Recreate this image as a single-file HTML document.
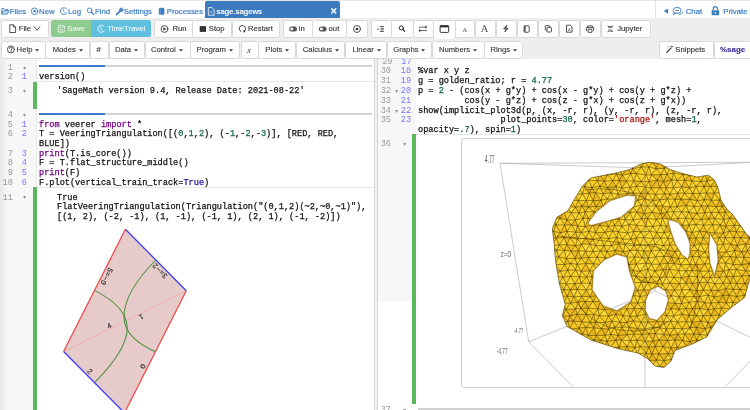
<!DOCTYPE html><html><head><meta charset="utf-8"><style>
*{margin:0;padding:0;box-sizing:border-box}
html,body{width:750px;height:410px;overflow:hidden;background:#fff;font-family:"Liberation Sans",sans-serif}
body{position:relative}
#wrap{position:absolute;left:0;top:0;width:750px;height:410px;will-change:transform}
.a{position:absolute;white-space:nowrap}
.tl{position:absolute;top:2.5px;height:17px;line-height:17px;font-size:7.8px;color:#3b7dc1;white-space:nowrap;-webkit-text-stroke:0.2px currentColor}
.b{position:absolute;background:#fff;border:1px solid #d9d9d9;border-radius:2.5px;font-size:7.5px;color:#333;white-space:nowrap;line-height:16px;text-align:center}
.r1{top:20px;height:17.8px}
.r2{top:41px;height:18px}
.car{display:inline-block;width:0;height:0;border-left:2px solid transparent;border-right:2px solid transparent;border-top:2.2px solid #333;margin-left:2.5px;vertical-align:1px}
.code{position:absolute;font-family:"Liberation Mono",monospace;font-size:8.6px;line-height:9.75px;white-space:pre;color:#111;-webkit-text-stroke:0.25px currentColor}
.ln{position:absolute;font-family:"Liberation Mono",monospace;font-size:8.6px;line-height:9.75px;white-space:pre;color:#9a9a9a}
.ln2{position:absolute;font-family:"Liberation Mono",monospace;font-size:8.6px;line-height:9.75px;white-space:pre;color:#7777ff}
.fold{position:absolute;font-size:5px;color:#999;line-height:9.75px}
.k{color:#770088}.n{color:#116644}.s{color:#aa1111}.at{color:#221199}
</style></head><body><div id="wrap"><div class="a" style="left:0;top:0;width:750px;height:1px;background:#e4e4e4"></div><div class="a" style="left:0;top:17.5px;width:750px;height:41.5px;background:#eeeeee"></div><div class="tl" style="left:9.7px">Files</div><div class="tl" style="left:39px">New</div><div class="tl" style="left:68px">Log</div><div class="tl" style="left:95px">Find</div><div class="tl" style="left:123.8px">Settings</div><div class="tl" style="left:166.7px">Processes</div><div class="tl" style="left:685.7px">Chat</div><div class="tl" style="left:723.3px">Private</div><div class="a" style="left:654.5px;top:1px;width:1px;height:16.5px;background:#e2e2e2"></div><div class="a" style="left:205px;top:1px;width:135px;height:16.5px;background:#3c7bbd;border-radius:2px 2px 0 0"></div><div class="tl" style="left:216.5px;color:#fff">sage.sagews</div><div class="tl" style="left:330px;color:#fff;font-size:9px">&#x2715;</div><div class="b r1" style="left:1px;width:48.3px"></div><div class="b r1" style="left:154.4px;width:38.4px"></div><div class="b r1" style="left:192px;width:40.4px"></div><div class="b r1" style="left:231.6px;width:48.8px"></div><div class="b r1" style="left:282.7px;width:30.1px"></div><div class="b r1" style="left:312px;width:35.2px"></div><div class="b r1" style="left:346.4px;width:21.4px"></div><div class="b r1" style="left:371px;width:20.8px"></div><div class="b r1" style="left:391px;width:22.8px"></div><div class="b r1" style="left:413px;width:20.8px"></div><div class="b r1" style="left:455px;width:20.3px"></div><div class="b r1" style="left:474.5px;width:21.9px"></div><div class="b r1" style="left:495.6px;width:21.7px"></div><div class="b r1" style="left:516.5px;width:21.9px"></div><div class="b r1" style="left:537.6px;width:21.9px"></div><div class="b r1" style="left:558.7px;width:21.7px"></div><div class="b r1" style="left:579.6px;width:21.9px"></div><div class="b r1" style="left:600.7px;width:50.3px"></div><div class="b" style="left:433px;top:19.6px;width:22.8px;height:19.2px;border-bottom:none;border-radius:2px 2px 0 0"></div><div class="a" style="left:50.7px;top:19.6px;width:40.1px;height:17.8px;background:#8fca8f;border-radius:2.5px 0 0 2.5px"></div><div class="a" style="left:90.8px;top:19.6px;width:60.7px;height:17.8px;background:#5fbfdf;border-radius:0 2.5px 2.5px 0"></div><div class="a" style="left:18.7px;top:22.50px;height:12px;line-height:12px;font-size:7.7px;color:#333;-webkit-text-stroke:0.12px currentColor;">File</div><div class="a" style="left:172.5px;top:22.50px;height:12px;line-height:12px;font-size:7.7px;color:#333;-webkit-text-stroke:0.12px currentColor;">Run</div><div class="a" style="left:208.8px;top:22.50px;height:12px;line-height:12px;font-size:7.7px;color:#333;-webkit-text-stroke:0.12px currentColor;">Stop</div><div class="a" style="left:248px;top:22.50px;height:12px;line-height:12px;font-size:7.7px;color:#333;-webkit-text-stroke:0.12px currentColor;">Restart</div><div class="a" style="left:298.7px;top:22.50px;height:12px;line-height:12px;font-size:7.7px;color:#333;-webkit-text-stroke:0.12px currentColor;">in</div><div class="a" style="left:328.6px;top:22.50px;height:12px;line-height:12px;font-size:7.7px;color:#333;-webkit-text-stroke:0.12px currentColor;">out</div><div class="a" style="left:617.2px;top:22.50px;height:12px;line-height:12px;font-size:7.7px;color:#333;-webkit-text-stroke:0.12px currentColor;">Jupyter</div><div class="a" style="left:67.3px;top:22.50px;height:12px;line-height:12px;font-size:7.7px;color:#eef8ee;-webkit-text-stroke:0.12px currentColor;">Save</div><div class="a" style="left:107.3px;top:22.50px;height:12px;line-height:12px;font-size:7.7px;color:#eefafd;-webkit-text-stroke:0.12px currentColor;">TimeTravel</div><div class="b r2" style="left:1px;width:44.8px"></div><div class="b r2" style="left:45px;width:44.8px"></div><div class="b r2" style="left:90px;width:19.3px"></div><div class="b r2" style="left:108.5px;width:36.8px"></div><div class="b r2" style="left:144.5px;width:46.3px"></div><div class="b r2" style="left:190px;width:50.0px"></div><div class="b r2" style="left:240.8px;width:18.0px"></div><div class="b r2" style="left:258px;width:38.3px"></div><div class="b r2" style="left:295.5px;width:49.8px"></div><div class="b r2" style="left:344.5px;width:42.8px"></div><div class="b r2" style="left:386.5px;width:45.8px"></div><div class="b r2" style="left:431.5px;width:53.0px"></div><div class="b r2" style="left:483.7px;width:39.5px"></div><div class="b r2" style="left:658.8px;width:54.8px"></div><div class="b r2" style="left:713.8px;width:38.0px"></div><div class="a" style="left:16.6px;top:44.20px;height:12px;line-height:12px;font-size:7.7px;color:#333;-webkit-text-stroke:0.12px currentColor;">Help</div><svg class="a" style="left:35.199999999999996px;top:49.20px" width="4" height="3"><path d="M0 0.2L4 0.2L2 2.4Z" fill="#333"/></svg><div class="a" style="left:52.7px;top:44.20px;height:12px;line-height:12px;font-size:7.7px;color:#333;-webkit-text-stroke:0.12px currentColor;">Modes</div><svg class="a" style="left:78.6px;top:49.20px" width="4" height="3"><path d="M0 0.2L4 0.2L2 2.4Z" fill="#333"/></svg><div class="a" style="left:114.9px;top:44.20px;height:12px;line-height:12px;font-size:7.7px;color:#333;-webkit-text-stroke:0.12px currentColor;">Data</div><svg class="a" style="left:133.9px;top:49.20px" width="4" height="3"><path d="M0 0.2L4 0.2L2 2.4Z" fill="#333"/></svg><div class="a" style="left:150.9px;top:44.20px;height:12px;line-height:12px;font-size:7.7px;color:#333;-webkit-text-stroke:0.12px currentColor;">Control</div><svg class="a" style="left:178.5px;top:49.20px" width="4" height="3"><path d="M0 0.2L4 0.2L2 2.4Z" fill="#333"/></svg><div class="a" style="left:196.5px;top:44.20px;height:12px;line-height:12px;font-size:7.7px;color:#333;-webkit-text-stroke:0.12px currentColor;">Program</div><svg class="a" style="left:228.8px;top:49.20px" width="4" height="3"><path d="M0 0.2L4 0.2L2 2.4Z" fill="#333"/></svg><div class="a" style="left:265.3px;top:44.20px;height:12px;line-height:12px;font-size:7.7px;color:#333;-webkit-text-stroke:0.12px currentColor;">Plots</div><svg class="a" style="left:285.2px;top:49.20px" width="4" height="3"><path d="M0 0.2L4 0.2L2 2.4Z" fill="#333"/></svg><div class="a" style="left:302.7px;top:44.20px;height:12px;line-height:12px;font-size:7.7px;color:#333;-webkit-text-stroke:0.12px currentColor;">Calculus</div><svg class="a" style="left:335.0px;top:49.20px" width="4" height="3"><path d="M0 0.2L4 0.2L2 2.4Z" fill="#333"/></svg><div class="a" style="left:352.4px;top:44.20px;height:12px;line-height:12px;font-size:7.7px;color:#333;-webkit-text-stroke:0.12px currentColor;">Linear</div><svg class="a" style="left:376.6px;top:49.20px" width="4" height="3"><path d="M0 0.2L4 0.2L2 2.4Z" fill="#333"/></svg><div class="a" style="left:393.3px;top:44.20px;height:12px;line-height:12px;font-size:7.7px;color:#333;-webkit-text-stroke:0.12px currentColor;">Graphs</div><svg class="a" style="left:421.3px;top:49.20px" width="4" height="3"><path d="M0 0.2L4 0.2L2 2.4Z" fill="#333"/></svg><div class="a" style="left:438.9px;top:44.20px;height:12px;line-height:12px;font-size:7.7px;color:#333;-webkit-text-stroke:0.12px currentColor;">Numbers</div><svg class="a" style="left:472.90000000000003px;top:49.20px" width="4" height="3"><path d="M0 0.2L4 0.2L2 2.4Z" fill="#333"/></svg><div class="a" style="left:490.4px;top:44.20px;height:12px;line-height:12px;font-size:7.7px;color:#333;-webkit-text-stroke:0.12px currentColor;">Rings</div><svg class="a" style="left:512.8px;top:49.20px" width="4" height="3"><path d="M0 0.2L4 0.2L2 2.4Z" fill="#333"/></svg><div class="a" style="left:96.5px;top:44.20px;height:12px;line-height:12px;font-size:7.7px;color:#333;-webkit-text-stroke:0.12px currentColor;">#</div><div class="a" style="left:247px;top:43.60px;height:12px;line-height:12px;font-size:8.6px;color:#666;-webkit-text-stroke:0.12px currentColor;font-family:Liberation Serif;font-style:italic">x</div><div class="a" style="left:675.3px;top:44.20px;height:12px;line-height:12px;font-size:7.7px;color:#333;-webkit-text-stroke:0.12px currentColor;">Snippets</div><div class="a" style="left:720.1px;top:44.20px;height:12px;line-height:12px;font-size:7.9px;color:#3b2f9e;-webkit-text-stroke:0.12px currentColor;font-weight:bold">%sage</div><div class="a" style="left:0;top:59px;width:36px;height:351px;background:linear-gradient(90deg,#e8e8e8,#f7f7f7 8px,#f7f7f7)"></div><div class="a" style="left:35.7px;top:59px;width:0.6px;height:351px;background:#e8e8e8"></div><div class="a" style="left:374.3px;top:59px;width:3.6px;height:351px;background:#eeeeee;border-left:0.7px solid #d8d8d8;border-right:0.7px solid #d8d8d8"></div><div class="a" style="left:378px;top:59px;width:38px;height:241.6px;background:#f7f7f7"></div><div class="a" style="left:39px;top:65px;width:333px;height:2px;background:#d4d4d4"></div><div class="a" style="left:39px;top:65px;width:66px;height:2px;background:#3a7fc8"></div><div class="a" style="left:37px;top:81px;width:337px;height:1px;background:#e6e6e6"></div><div class="a" style="left:39px;top:113px;width:333px;height:2px;background:#d4d4d4"></div><div class="a" style="left:39px;top:113px;width:66px;height:2px;background:#3a7fc8"></div><div class="a" style="left:37px;top:186.6px;width:337px;height:1px;background:#e6e6e6"></div><div class="a" style="left:33px;top:81.8px;width:3.8px;height:27px;background:#5cb85c"></div><div class="a" style="left:33px;top:187.2px;width:3.8px;height:223px;background:#5cb85c"></div><div class="ln" style="right:737.20px;top:63.83px">1</div><svg class="a" style="left:23.40px;top:66.60px" width="3.2" height="3"><path d="M0 0L3.2 0L1.6 3Z" fill="#999"/></svg><div class="ln" style="right:737.20px;top:73.42px">2</div><div class="ln2" style="left:21.82px;top:73.42px">1</div><div class="ln" style="right:737.20px;top:87.42px">3</div><svg class="a" style="left:23.40px;top:90.20px" width="3.2" height="3"><path d="M0 0L3.2 0L1.6 3Z" fill="#999"/></svg><div class="ln" style="right:737.20px;top:110.83px">4</div><svg class="a" style="left:23.40px;top:113.60px" width="3.2" height="3"><path d="M0 0L3.2 0L1.6 3Z" fill="#999"/></svg><div class="ln" style="right:737.20px;top:120.52px">5</div><div class="ln2" style="left:21.82px;top:120.52px">1</div><div class="ln" style="right:737.20px;top:130.33px">6</div><div class="ln2" style="left:21.82px;top:130.33px">2</div><div class="ln" style="right:737.20px;top:149.83px">7</div><div class="ln2" style="left:21.82px;top:149.83px">3</div><div class="ln" style="right:737.20px;top:159.43px">8</div><div class="ln2" style="left:21.82px;top:159.43px">4</div><div class="ln" style="right:737.20px;top:169.33px">9</div><div class="ln2" style="left:21.82px;top:169.33px">5</div><div class="ln" style="right:737.20px;top:179.12px">10</div><div class="ln2" style="left:21.82px;top:179.12px">6</div><div class="ln" style="right:737.20px;top:193.53px">11</div><svg class="a" style="left:23.40px;top:196.30px" width="3.2" height="3"><path d="M0 0L3.2 0L1.6 3Z" fill="#999"/></svg><div class="code" style="left:39px;top:73.42px">version()</div><div class="code" style="left:57px;top:87.42px">&#x27;SageMath version 9.4, Release Date: 2021-08-22&#x27;</div><div class="code" style="left:39px;top:120.52px"><span class="k">from</span> veerer <span class="k">import</span> *</div><div class="code" style="left:39px;top:130.33px">T = VeeringTriangulation([(<span class="n">0</span>,<span class="n">1</span>,<span class="n">2</span>), (-<span class="n">1</span>,-<span class="n">2</span>,-<span class="n">3</span>)], [RED, RED,</div><div class="code" style="left:39px;top:140.12px">BLUE])</div><div class="code" style="left:39px;top:149.83px"><span class="k">print</span>(T.is_core())</div><div class="code" style="left:39px;top:159.43px">F = T.flat_structure_middle()</div><div class="code" style="left:39px;top:169.33px"><span class="k">print</span>(F)</div><div class="code" style="left:39px;top:179.12px">F.plot(vertical_train_track=<span class="at">True</span>)</div><div class="code" style="left:57px;top:193.53px">True</div><div class="code" style="left:57px;top:203.23px">FlatVeeringTriangulation(Triangulation(&quot;(0,1,2)(~2,~0,~1)&quot;),</div><div class="code" style="left:57px;top:213.43px">[(1, 2), (-2, -1), (1, -1), (-1, 1), (2, 1), (-1, -2)])</div><div class="ln" style="right:359.00px;top:67.42px">30</div><div class="ln2" style="left:400.84px;top:67.42px">18</div><div class="ln" style="right:359.00px;top:77.22px">31</div><div class="ln2" style="left:400.84px;top:77.22px">19</div><div class="ln" style="right:359.00px;top:86.72px">32</div><div class="ln2" style="left:400.84px;top:86.72px">20</div><svg class="a" style="left:394.50px;top:89.50px" width="3.2" height="3"><path d="M0 0L3.2 0L1.6 3Z" fill="#999"/></svg><div class="ln" style="right:359.00px;top:96.52px">33</div><div class="ln2" style="left:400.84px;top:96.52px">21</div><div class="ln" style="right:359.00px;top:106.72px">34</div><div class="ln2" style="left:400.84px;top:106.72px">22</div><svg class="a" style="left:394.50px;top:109.50px" width="3.2" height="3"><path d="M0 0L3.2 0L1.6 3Z" fill="#999"/></svg><div class="ln" style="right:359.00px;top:116.22px">35</div><div class="ln2" style="left:400.84px;top:116.22px">23</div><div class="ln" style="right:359.00px;top:140.12px">36</div><svg class="a" style="left:402.50px;top:142.90px" width="3.2" height="3"><path d="M0 0L3.2 0L1.6 3Z" fill="#999"/></svg><div class="ln" style="right:359.00px;top:406.43px">37</div><svg class="a" style="left:402.50px;top:409.20px" width="3.2" height="3"><path d="M0 0L3.2 0L1.6 3Z" fill="#999"/></svg><div class="a" style="left:378px;top:59px;width:40px;height:8px;overflow:hidden"><div class="ln" style="left:4.2px;top:-1.08px">29</div><div class="ln2" style="left:23.3px;top:-1.08px">17</div></div><div class="code" style="left:418px;top:67.42px">%var x y z</div><div class="code" style="left:418px;top:77.22px">g = golden_ratio; r = <span class="n">4.77</span></div><div class="code" style="left:418px;top:86.72px">p = <span class="n">2</span> - (cos(x + g*y) + cos(x - g*y) + cos(y + g*z) +</div><div class="code" style="left:418px;top:96.52px">         cos(y - g*z) + cos(z - g*x) + cos(z + g*x))</div><div class="code" style="left:418px;top:106.72px">show(implicit_plot3d(p, (x, -r, r), (y, -r, r), (z, -r, r),</div><div class="code" style="left:418px;top:116.22px">                plot_points=<span class="n">30</span>, color=<span class="s">&#x27;orange&#x27;</span>, mesh=<span class="n">1</span>,</div><div class="code" style="left:418px;top:126.23px">opacity=<span class="n">.7</span>), spin=<span class="n">1</span>)</div><div class="a" style="left:416px;top:133.8px;width:334px;height:1px;background:#e6e6e6"></div><div class="a" style="left:412px;top:134.4px;width:3.7px;height:270px;background:#5cb85c"></div><div class="a" style="left:417.5px;top:408.3px;width:333px;height:1.7px;background:#d0d0d0"></div><div class="a" style="left:461.3px;top:138.2px;width:300px;height:250px;border:1px solid #cfcfcf;border-radius:3px;background:#fff"></div><svg class="a" style="left:0;top:0" width="375" height="410" viewBox="0 0 375 410">
<polygon points="125.4,229.3 186.3,290.7 124.5,412.9 63.6,351.5" fill="#e7cbcb"/>
<line x1="63.6" y1="351.5" x2="186.3" y2="290.7" stroke="#f0a0a0" stroke-width="0.75" stroke-dasharray="1.5 0.5"/>
<line x1="125.4" y1="229.3" x2="186.3" y2="290.7" stroke="#3c3cf5" stroke-width="1.3"/>
<line x1="63.6" y1="351.5" x2="124.5" y2="412.9" stroke="#3c3cf5" stroke-width="1.3"/>
<line x1="125.4" y1="229.3" x2="63.6" y2="351.5" stroke="#f34a4a" stroke-width="1.3"/>
<line x1="186.3" y1="290.7" x2="124.5" y2="412.9" stroke="#f34a4a" stroke-width="1.3"/>
<path d="M94.5,290.4 C110.5,298.5 127,310 127.2,328 C127.4,345 111,366 95,382.2" fill="none" stroke="#4b8f3c" stroke-width="1.05"/>
<path d="M155.85,260 C143.9,272 124,295 124,317 C124,332 136,343 155.4,351.8" fill="none" stroke="#4b8f3c" stroke-width="1.05"/>
<g font-family="Liberation Sans" font-size="7.2" fill="#2a2a2a" letter-spacing="0.5" stroke="#2a2a2a" stroke-width="0.15" text-anchor="middle" dominant-baseline="central">
<text transform="translate(106.7,276.5) rotate(117.5)">5=~0</text>
<text transform="translate(159.8,270.7) rotate(225)">3=~2</text>
<text transform="translate(109.3,325.5) rotate(-27)">4</text>
<text transform="translate(141.2,316.9) rotate(153)">1</text>
<text transform="translate(90.1,371.6) rotate(45)">2</text>
<text transform="translate(143.1,366.2) rotate(-63)">0</text>
</g>
</svg><svg class="a" style="left:0;top:0" width="750" height="410" viewBox="0 0 750 410">
<defs>
<clipPath id="box"><rect x="462" y="139" width="300" height="248.5"/></clipPath>
<pattern id="mesh" width="6.2" height="10.739" patternUnits="userSpaceOnUse" patternTransform="rotate(8)">
<path d="M-1,0 L7.2,0 M-1,5.3695 L7.2,5.3695 M-1,10.739 L7.2,10.739 M0,0 L6.2,10.739 M6.2,0 L0,10.739 M-3.1,5.3695 L0,0 M3.1,5.3695 L6.2,10.739 M3.1,5.3695 L0,10.739 M3.1,5.3695 L6.2,0 M-3.1,5.3695 L0,10.739 M9.3,5.3695 L6.2,0 M9.3,5.3695 L6.2,10.739" stroke="#3a2c00" stroke-width="0.5" stroke-opacity="0.7" fill="none"/>
</pattern>
<radialGradient id="shade" cx="0.45" cy="0.4" r="0.65">
<stop offset="0" stop-color="#fdd92e"/><stop offset="0.6" stop-color="#f9cf28"/><stop offset="1" stop-color="#f0bd1e"/>
</radialGradient>
</defs>
<g clip-path="url(#box)" fill="none" stroke="#b4b4b4" stroke-width="0.7">
<path d="M500,163.3 L645,168 L760,162"/>
<path d="M500,163.3 L760,162.2"/>
<path d="M500,163.3 L528.7,341.8 L655,291 L770,347"/>
<path d="M528.7,341.8 L573.7,387.5"/>
<path d="M645,168 L645,390"/>
<path d="M655,291 L655,185"/>
<path d="M752,359.4 L724.2,387.5"/>
</g>
<g font-family="Liberation Sans" fill="#666" lengthAdjust="spacingAndGlyphs">
<text x="484.8" y="163.4" font-size="10" textLength="9.9" lengthAdjust="spacingAndGlyphs">4.77</text>
<text x="500.5" y="256.5" font-size="8.5" textLength="10.7" lengthAdjust="spacingAndGlyphs">z=0</text>
<text x="513.9" y="332.7" font-size="8" textLength="9.3" lengthAdjust="spacingAndGlyphs">-4.77</text>
<text x="496.8" y="353.7" font-size="8.5" textLength="10.8" lengthAdjust="spacingAndGlyphs">-4.77</text>
</g>
<path d="M649.4,162.3 L660.6,164.0 L670.1,169.6 L683.0,173.6 L697.0,177.0 L708.3,175.2 L714.4,180.0 L718.0,188.0 L721.0,200.0 L726.0,208.0 L733.0,215.0 L740.0,225.0 L747.0,235.0 L756.0,240.0 L756.0,279.0 L749.8,279.0 L744.6,297.5 L731.0,307.8 L717.2,319.7 L707.0,336.8 L693.4,343.6 L675.0,350.5 L671.0,361.0 L664.0,367.5 L655.0,366.0 L648.0,359.0 L638.0,353.0 L618.0,348.7 L591.0,340.0 L567.0,326.6 L562.4,315.5 L565.2,304.3 L559.6,284.6 L555.7,262.2 L554.0,242.6 L552.3,228.5 L556.8,217.3 L568.0,210.6 L573.7,200.5 L582.0,186.5 L590.5,178.0 L604.5,175.2 L618.5,172.4 L629.8,169.6 L641.0,164.0 Z M587.7,223.0 L596.0,211.7 L610.0,200.5 L627.0,195.0 L636.0,196.0 L634.5,206.0 L621.3,217.3 L601.7,223.0 L590.5,225.7 Z M593.3,270.6 L604.5,259.4 L617.0,254.0 L627.0,257.0 L629.8,272.0 L635.4,287.0 L631.0,302.0 L617.0,311.0 L603.0,306.0 L592.0,290.0 Z M645.5,300.0 L650.0,290.0 L658.0,286.0 L666.0,291.0 L668.5,300.0 L665.0,312.0 L657.0,320.5 L649.0,318.5 L645.0,310.0 Z M669.5,219.3 L678.0,222.0 L686.0,232.0 L690.2,243.7 L690.0,254.0 L687.8,259.5 L682.0,255.0 L675.0,244.0 L670.7,231.5 L668.0,222.0 Z M709.8,232.7 L717.0,244.9 L718.3,260.7 L714.6,276.6 L709.8,263.2 L708.5,248.5 Z" fill="url(#shade)" fill-rule="evenodd"/>
<clipPath id="blob"><path d="M649.4,162.3 L660.6,164.0 L670.1,169.6 L683.0,173.6 L697.0,177.0 L708.3,175.2 L714.4,180.0 L718.0,188.0 L721.0,200.0 L726.0,208.0 L733.0,215.0 L740.0,225.0 L747.0,235.0 L756.0,240.0 L756.0,279.0 L749.8,279.0 L744.6,297.5 L731.0,307.8 L717.2,319.7 L707.0,336.8 L693.4,343.6 L675.0,350.5 L671.0,361.0 L664.0,367.5 L655.0,366.0 L648.0,359.0 L638.0,353.0 L618.0,348.7 L591.0,340.0 L567.0,326.6 L562.4,315.5 L565.2,304.3 L559.6,284.6 L555.7,262.2 L554.0,242.6 L552.3,228.5 L556.8,217.3 L568.0,210.6 L573.7,200.5 L582.0,186.5 L590.5,178.0 L604.5,175.2 L618.5,172.4 L629.8,169.6 L641.0,164.0 Z M587.7,223.0 L596.0,211.7 L610.0,200.5 L627.0,195.0 L636.0,196.0 L634.5,206.0 L621.3,217.3 L601.7,223.0 L590.5,225.7 Z M593.3,270.6 L604.5,259.4 L617.0,254.0 L627.0,257.0 L629.8,272.0 L635.4,287.0 L631.0,302.0 L617.0,311.0 L603.0,306.0 L592.0,290.0 Z M645.5,300.0 L650.0,290.0 L658.0,286.0 L666.0,291.0 L668.5,300.0 L665.0,312.0 L657.0,320.5 L649.0,318.5 L645.0,310.0 Z M669.5,219.3 L678.0,222.0 L686.0,232.0 L690.2,243.7 L690.0,254.0 L687.8,259.5 L682.0,255.0 L675.0,244.0 L670.7,231.5 L668.0,222.0 Z M709.8,232.7 L717.0,244.9 L718.3,260.7 L714.6,276.6 L709.8,263.2 L708.5,248.5 Z" clip-rule="evenodd"/></clipPath>
<g clip-path="url(#blob)">
<path d="M552.8,154.1 L559.9,154.7 L557.0,162.4Z M559.9,154.7 L566.1,155.0 L563.4,161.8Z M566.1,155.0 L573.4,154.9 L569.8,161.9Z M580.9,154.1 L586.5,160.9 L578.7,162.5Z M604.5,156.0 L607.0,160.6 L599.3,161.3Z M632.9,154.2 L640.7,155.7 L636.4,161.3Z M656.4,154.7 L659.1,161.2 L653.1,162.2Z M663.5,154.0 L666.7,162.3 L659.1,161.2Z M692.9,154.6 L701.2,155.4 L696.9,160.9Z M707.1,155.2 L711.2,161.6 L702.8,161.2Z M715.3,155.8 L720.1,161.8 L711.2,161.6Z M751.0,155.4 L760.3,155.2 L755.6,161.2Z M548.9,161.3 L557.0,162.4 L551.1,167.0Z M569.8,161.9 L578.7,162.5 L574.9,167.0Z M578.7,162.5 L581.4,167.5 L574.9,167.0Z M586.5,160.9 L592.8,161.8 L589.0,167.0Z M592.8,161.8 L599.3,161.3 L597.7,168.9Z M599.3,161.3 L604.1,167.8 L597.7,168.9Z M614.2,162.0 L618.6,167.3 L610.5,166.9Z M621.7,160.9 L629.8,162.2 L627.3,167.1Z M621.7,160.9 L627.3,167.1 L618.6,167.3Z M636.4,161.3 L645.0,162.3 L641.3,167.0Z M653.1,162.2 L659.1,161.2 L656.1,168.9Z M659.1,161.2 L664.3,168.2 L656.1,168.9Z M666.7,162.3 L670.2,167.5 L664.3,168.2Z M696.9,160.9 L701.2,168.9 L692.6,167.2Z M702.8,161.2 L711.2,161.6 L708.7,168.5Z M720.1,161.8 L726.3,161.7 L721.9,167.9Z M734.2,160.4 L742.1,162.0 L736.2,167.3Z M749.5,162.1 L753.4,167.7 L744.2,168.2Z M551.1,167.0 L556.4,175.1 L547.9,173.6Z M581.4,167.5 L589.0,167.0 L586.8,174.8Z M597.7,168.9 L599.7,174.9 L593.8,174.2Z M604.1,167.8 L607.5,174.9 L599.7,174.9Z M610.5,166.9 L618.6,167.3 L616.5,174.0Z M618.6,167.3 L622.4,175.2 L616.5,174.0Z M627.3,167.1 L630.7,173.5 L622.4,175.2Z M632.6,168.8 L636.5,173.5 L630.7,173.5Z M685.7,168.4 L689.4,175.2 L683.1,174.6Z M701.2,168.9 L708.7,168.5 L704.9,173.6Z M708.7,168.5 L710.9,173.8 L704.9,173.6Z M744.2,168.2 L748.7,175.1 L740.7,174.1Z M556.4,175.1 L564.4,174.2 L560.4,180.8Z M556.4,175.1 L560.4,180.8 L551.5,180.6Z M571.3,174.9 L577.2,174.6 L574.7,181.3Z M599.7,174.9 L607.5,174.9 L604.4,181.2Z M599.7,174.9 L604.4,181.2 L597.5,180.7Z M616.5,174.0 L622.4,175.2 L619.3,180.6Z M622.4,175.2 L626.4,181.1 L619.3,180.6Z M651.4,174.9 L660.9,174.6 L657.1,180.1Z M660.9,174.6 L663.6,181.6 L657.1,180.1Z M666.7,174.3 L671.7,179.8 L663.6,181.6Z M689.4,175.2 L691.9,181.0 L684.5,180.1Z M704.9,173.6 L710.9,173.8 L706.9,181.1Z M710.9,173.8 L715.6,179.8 L706.9,181.1Z M725.7,174.0 L729.3,181.6 L723.6,181.7Z M732.7,175.1 L737.1,180.6 L729.3,181.6Z M748.7,175.1 L755.7,175.1 L751.3,180.5Z M755.7,175.1 L763.3,174.3 L759.6,180.3Z M560.4,180.8 L566.7,180.7 L563.8,187.1Z M581.0,180.8 L588.7,180.1 L584.7,186.5Z M604.4,181.2 L607.7,187.9 L599.9,186.2Z M612.7,180.5 L616.1,186.5 L607.7,187.9Z M619.3,180.6 L626.4,181.1 L621.8,188.0Z M633.7,180.7 L641.1,181.6 L636.4,186.1Z M649.1,181.5 L657.1,180.1 L651.2,188.0Z M657.1,180.1 L660.0,187.7 L651.2,188.0Z M657.1,180.1 L663.6,181.6 L660.0,187.7Z M663.6,181.6 L671.7,179.8 L666.0,187.8Z M684.5,180.1 L689.4,188.0 L681.8,186.7Z M706.9,181.1 L710.5,186.3 L704.2,186.5Z M715.6,179.8 L717.7,186.4 L710.5,186.3Z M729.3,181.6 L734.4,186.6 L725.8,186.6Z M729.3,181.6 L737.1,180.6 L734.4,186.6Z M751.3,180.5 L755.3,186.0 L748.1,186.0Z M766.2,180.2 L775.0,179.6 L769.9,187.0Z M548.8,186.9 L554.8,186.7 L552.4,194.2Z M554.8,186.7 L559.5,193.5 L552.4,194.2Z M563.8,187.1 L569.8,188.1 L567.7,194.5Z M584.7,186.5 L591.9,187.7 L589.2,193.1Z M591.9,187.7 L595.6,192.6 L589.2,193.1Z M607.7,187.9 L616.1,186.5 L611.0,192.7Z M607.7,187.9 L611.0,192.7 L603.1,194.0Z M645.4,186.9 L647.7,193.3 L640.7,193.4Z M725.8,186.6 L734.4,186.6 L729.5,192.9Z M755.3,186.0 L759.3,193.1 L752.8,194.3Z M763.9,187.2 L769.9,187.0 L768.3,192.7Z M552.4,194.2 L559.5,193.5 L557.1,200.1Z M559.5,193.5 L564.1,200.5 L557.1,200.1Z M589.2,193.1 L595.6,192.6 L593.3,200.7Z M595.6,192.6 L601.0,200.3 L593.3,200.7Z M617.9,194.2 L627.4,193.8 L621.7,200.6Z M640.7,193.4 L644.9,198.8 L637.8,200.3Z M640.7,193.4 L647.7,193.3 L644.9,198.8Z M655.4,194.5 L659.7,199.9 L653.1,200.4Z M664.6,193.6 L667.5,198.9 L659.7,199.9Z M677.7,193.1 L680.8,199.3 L675.1,199.3Z M692.9,193.5 L697.3,200.9 L689.9,199.2Z M706.5,192.9 L711.4,200.3 L704.1,199.6Z M706.5,192.9 L714.1,193.2 L711.4,200.3Z M729.5,192.9 L732.8,199.3 L726.7,198.9Z M752.8,194.3 L759.3,193.1 L754.8,199.4Z M759.3,193.1 L768.3,192.7 L763.7,200.3Z M557.1,200.1 L561.0,207.2 L553.4,205.6Z M570.0,199.9 L575.4,207.3 L565.9,206.2Z M586.5,200.6 L588.6,207.2 L581.9,205.8Z M593.3,200.7 L601.0,200.3 L596.0,206.4Z M593.3,200.7 L596.0,206.4 L588.6,207.2Z M601.0,200.3 L603.3,206.3 L596.0,206.4Z M680.8,199.3 L689.9,199.2 L686.5,205.4Z M680.8,199.3 L686.5,205.4 L676.9,206.8Z M711.4,200.3 L716.5,206.5 L707.5,206.0Z M719.6,200.1 L726.7,198.9 L722.2,206.1Z M719.6,200.1 L722.2,206.1 L716.5,206.5Z M726.7,198.9 L732.8,199.3 L729.4,205.3Z M732.8,199.3 L736.4,207.0 L729.4,205.3Z M748.7,198.8 L754.8,199.4 L751.5,205.8Z M748.7,198.8 L751.5,205.8 L744.2,207.2Z M763.7,200.3 L771.2,199.4 L766.7,207.3Z M763.7,200.3 L766.7,207.3 L759.6,205.6Z M575.4,207.3 L581.9,205.8 L579.0,213.0Z M581.9,205.8 L588.6,207.2 L585.1,211.7Z M596.0,206.4 L603.3,206.3 L600.4,212.3Z M641.2,205.2 L644.1,213.6 L636.6,211.9Z M655.9,205.8 L662.5,205.9 L660.8,213.8Z M662.5,205.9 L670.3,207.0 L667.0,211.9Z M701.4,205.8 L707.5,206.0 L704.7,212.5Z M722.2,206.1 L729.4,205.3 L725.2,212.2Z M744.2,207.2 L749.4,212.1 L741.1,213.0Z M759.6,205.6 L763.0,212.6 L755.3,212.1Z M759.6,205.6 L766.7,207.3 L763.0,212.6Z M766.7,207.3 L775.4,207.0 L771.9,213.4Z M549.0,213.6 L557.2,212.8 L553.4,219.0Z M557.2,212.8 L564.1,211.7 L560.0,218.0Z M557.2,212.8 L560.0,218.0 L553.4,219.0Z M564.1,211.7 L566.9,220.0 L560.0,218.0Z M585.1,211.7 L588.4,218.3 L583.2,218.5Z M600.4,212.3 L605.3,219.6 L596.9,219.5Z M616.5,212.1 L618.9,219.2 L612.0,219.7Z M623.1,212.2 L630.2,212.4 L625.2,219.7Z M636.6,211.9 L644.1,213.6 L641.6,218.7Z M644.1,213.6 L652.3,212.1 L647.6,218.5Z M652.3,212.1 L660.8,213.8 L656.4,219.5Z M660.8,213.8 L667.0,211.9 L662.4,218.1Z M667.0,211.9 L670.9,219.3 L662.4,218.1Z M688.6,212.1 L696.9,213.5 L692.5,219.0Z M704.7,212.5 L708.8,219.0 L701.6,219.4Z M711.3,212.7 L714.5,218.5 L708.8,219.0Z M718.6,212.3 L725.2,212.2 L723.8,219.5Z M734.9,211.9 L737.4,219.5 L729.5,218.0Z M566.9,220.0 L571.7,224.9 L564.7,225.1Z M575.4,219.9 L577.6,226.1 L571.7,224.9Z M596.9,219.5 L605.3,219.6 L599.8,225.3Z M605.3,219.6 L608.3,226.5 L599.8,225.3Z M618.9,219.2 L622.0,226.5 L614.4,225.3Z M641.6,218.7 L647.6,218.5 L645.9,226.3Z M744.6,218.6 L748.2,226.4 L739.9,225.4Z M766.6,218.9 L774.9,218.4 L770.5,226.2Z M564.7,225.1 L566.8,231.4 L560.4,232.8Z M577.6,226.1 L581.4,232.4 L575.8,232.2Z M585.2,226.5 L593.1,224.8 L588.9,231.4Z M593.1,224.8 L599.8,225.3 L595.5,232.5Z M608.3,226.5 L612.8,230.9 L605.3,232.2Z M636.4,225.3 L641.0,231.9 L633.5,231.4Z M666.3,226.5 L671.1,231.5 L664.2,232.5Z M675.1,224.5 L682.3,225.2 L677.7,231.6Z M682.3,225.2 L689.0,225.1 L686.3,231.0Z M682.3,225.2 L686.3,231.0 L677.7,231.6Z M703.5,225.2 L706.6,232.0 L699.7,230.9Z M720.1,224.9 L725.9,226.2 L723.6,233.0Z M734.5,225.3 L736.4,231.9 L729.4,231.0Z M553.5,231.4 L556.3,238.0 L549.6,237.9Z M575.8,232.2 L577.4,239.2 L570.2,237.8Z M595.5,232.5 L605.3,232.2 L600.5,237.7Z M656.8,232.4 L660.8,238.0 L653.5,238.5Z M671.1,231.5 L677.7,231.6 L673.9,238.9Z M677.7,231.6 L686.3,231.0 L683.1,237.4Z M686.3,231.0 L692.2,232.5 L689.5,238.6Z M692.2,232.5 L696.0,238.0 L689.5,238.6Z M699.7,230.9 L706.6,232.0 L703.2,237.7Z M714.7,233.0 L723.6,233.0 L719.3,237.7Z M745.3,231.8 L749.3,238.4 L740.6,237.7Z M751.5,231.7 L759.9,232.3 L754.8,237.4Z M564.1,237.6 L570.2,237.8 L566.8,244.5Z M585.9,237.9 L592.8,239.4 L590.0,244.1Z M585.9,237.9 L590.0,244.1 L581.6,244.1Z M616.6,237.4 L618.9,244.0 L611.4,245.6Z M631.0,239.2 L636.3,237.9 L634.2,245.6Z M689.5,238.6 L696.0,238.0 L694.2,245.8Z M696.0,238.0 L700.4,243.7 L694.2,245.8Z M703.2,237.7 L708.9,244.5 L700.4,243.7Z M710.9,238.5 L716.3,245.0 L708.9,244.5Z M740.6,237.7 L745.7,244.0 L737.2,245.5Z M749.3,238.4 L751.5,244.5 L745.7,244.0Z M754.8,237.4 L759.6,244.5 L751.5,244.5Z M763.0,238.4 L771.1,237.4 L766.0,244.2Z M763.0,238.4 L766.0,244.2 L759.6,244.5Z M566.8,244.5 L571.2,251.2 L564.4,250.3Z M566.8,244.5 L575.5,245.8 L571.2,251.2Z M575.5,245.8 L581.6,244.1 L578.6,250.7Z M604.0,245.4 L606.7,251.4 L600.4,251.0Z M618.9,244.0 L623.4,251.7 L615.3,250.5Z M634.2,245.6 L637.4,250.3 L630.0,250.4Z M648.3,244.7 L655.1,244.2 L651.2,251.0Z M669.8,244.7 L675.1,251.7 L667.5,250.2Z M679.0,245.7 L681.9,250.1 L675.1,251.7Z M716.3,245.0 L718.1,252.2 L712.1,251.8Z M730.7,244.1 L737.2,245.5 L734.8,250.4Z M737.2,245.5 L741.8,252.1 L734.8,250.4Z M759.6,244.5 L764.3,250.6 L756.6,250.4Z M547.5,251.3 L552.4,257.1 L544.2,257.0Z M571.2,251.2 L578.6,250.7 L575.1,258.4Z M578.6,250.7 L581.1,258.2 L575.1,258.4Z M585.5,251.3 L588.4,257.6 L581.1,258.2Z M606.7,251.4 L615.3,250.5 L611.8,258.4Z M615.3,250.5 L623.4,251.7 L618.0,258.6Z M623.4,251.7 L630.0,250.4 L626.7,257.3Z M637.4,250.3 L642.5,257.7 L634.6,257.0Z M643.9,251.0 L651.2,251.0 L648.2,258.1Z M667.5,250.2 L675.1,251.7 L671.6,257.0Z M667.5,250.2 L671.6,257.0 L664.0,256.5Z M675.1,251.7 L678.6,258.6 L671.6,257.0Z M689.3,250.9 L697.9,250.3 L692.5,256.4Z M697.9,250.3 L705.0,252.2 L699.2,256.8Z M712.1,251.8 L718.1,252.2 L715.2,258.4Z M718.1,252.2 L726.3,252.1 L721.6,256.9Z M718.1,252.2 L721.6,256.9 L715.2,258.4Z M741.8,252.1 L747.4,250.8 L743.8,257.2Z M771.5,250.3 L778.1,252.1 L773.5,258.5Z M544.2,257.0 L552.4,257.1 L548.0,263.2Z M566.3,258.5 L570.6,263.4 L564.5,264.6Z M588.4,257.6 L593.5,263.8 L585.9,263.6Z M605.2,257.7 L607.2,264.8 L601.6,264.5Z M634.6,257.0 L636.2,264.1 L629.0,264.6Z M648.2,258.1 L651.5,264.2 L646.0,263.2Z M664.0,256.5 L667.9,263.2 L659.7,264.3Z M671.6,257.0 L674.0,263.5 L667.9,263.2Z M671.6,257.0 L678.6,258.6 L674.0,263.5Z M678.6,258.6 L680.7,264.8 L674.0,263.5Z M715.2,258.4 L721.6,256.9 L718.2,263.1Z M730.4,256.5 L736.1,257.2 L733.3,264.5Z M743.8,257.2 L749.1,263.4 L741.6,264.7Z M759.8,256.9 L764.0,264.0 L756.0,263.8Z M585.9,263.6 L589.7,270.8 L581.3,271.3Z M607.2,264.8 L612.1,271.1 L604.1,271.1Z M659.7,264.3 L663.0,269.6 L655.0,271.3Z M690.0,264.4 L695.4,264.7 L691.9,270.6Z M695.4,264.7 L704.7,263.9 L700.0,271.1Z M695.4,264.7 L700.0,271.1 L691.9,270.6Z M718.2,263.1 L723.7,271.3 L714.1,271.2Z M741.6,264.7 L749.1,263.4 L745.7,271.0Z M764.0,264.0 L770.1,264.3 L766.0,269.5Z M770.1,264.3 L779.3,263.3 L775.1,269.7Z M546.0,269.3 L551.8,269.8 L548.2,276.6Z M597.2,271.4 L600.3,277.4 L591.9,276.6Z M604.1,271.1 L607.5,277.2 L600.3,277.4Z M612.1,271.1 L615.4,276.1 L607.5,277.2Z M612.1,271.1 L618.8,270.8 L615.4,276.1Z M633.1,270.6 L640.1,271.3 L636.2,276.1Z M663.0,269.6 L669.6,269.3 L666.3,276.8Z M714.1,271.2 L723.7,271.3 L719.4,277.4Z M752.5,271.1 L755.1,276.2 L749.5,275.7Z M759.9,269.9 L764.3,276.8 L755.1,276.2Z M766.0,269.5 L775.1,269.7 L770.4,277.6Z M548.2,276.6 L553.1,283.5 L545.1,283.7Z M615.4,276.1 L619.5,283.9 L610.8,282.7Z M636.2,276.1 L645.6,277.8 L641.3,282.4Z M645.6,277.8 L648.2,282.5 L641.3,282.4Z M651.0,276.7 L657.2,283.7 L648.2,282.5Z M659.7,277.4 L662.4,284.2 L657.2,283.7Z M681.3,277.7 L688.7,276.1 L686.2,283.0Z M688.7,276.1 L692.2,283.5 L686.2,283.0Z M703.1,277.1 L710.4,277.4 L707.5,282.1Z M726.6,276.4 L733.4,276.5 L730.3,283.1Z M749.5,275.7 L753.3,283.0 L744.6,283.7Z M575.0,283.7 L577.3,289.4 L570.4,289.9Z M595.8,283.1 L605.2,282.6 L600.3,289.5Z M619.5,283.9 L625.5,282.4 L621.9,289.9Z M669.8,282.9 L679.5,283.8 L674.6,290.1Z M692.2,283.5 L699.4,282.5 L696.5,290.6Z M699.4,282.5 L707.5,282.1 L703.3,290.0Z M744.6,283.7 L753.3,283.0 L748.3,290.0Z M557.0,290.0 L563.9,289.5 L560.6,296.3Z M570.4,289.9 L573.9,297.0 L567.1,296.1Z M586.4,290.0 L590.2,296.7 L581.6,296.3Z M593.4,289.0 L596.7,295.5 L590.2,296.7Z M615.8,290.5 L619.9,295.5 L612.5,295.7Z M630.8,289.3 L637.5,290.6 L633.6,295.3Z M637.5,290.6 L643.7,289.7 L639.9,296.5Z M643.7,289.7 L651.4,290.2 L648.0,295.4Z M660.8,289.6 L666.1,289.7 L663.2,296.3Z M666.1,289.7 L674.6,290.1 L671.2,295.7Z M690.2,289.6 L696.5,290.6 L694.1,296.6Z M696.5,290.6 L703.3,290.0 L699.5,296.7Z M711.2,290.2 L717.9,290.6 L713.9,297.0Z M717.9,290.6 L725.9,288.6 L723.0,295.4Z M725.9,288.6 L729.0,295.2 L723.0,295.4Z M551.4,296.6 L555.3,302.8 L549.4,303.1Z M560.6,296.3 L563.6,302.9 L555.3,302.8Z M581.6,296.3 L585.0,301.6 L578.4,301.9Z M590.2,296.7 L596.7,295.5 L593.1,301.4Z M604.3,295.2 L612.5,295.7 L607.9,302.4Z M612.5,295.7 L619.9,295.5 L615.4,303.2Z M648.0,295.4 L655.5,295.9 L653.5,301.5Z M655.5,295.9 L660.1,302.7 L653.5,301.5Z M655.5,295.9 L663.2,296.3 L660.1,302.7Z M679.3,296.8 L684.4,296.7 L681.5,303.5Z M694.1,296.6 L699.5,296.7 L697.7,301.4Z M699.5,296.7 L704.7,302.7 L697.7,301.4Z M713.9,297.0 L723.0,295.4 L718.6,302.3Z M723.0,295.4 L726.4,303.0 L718.6,302.3Z M723.0,295.4 L729.0,295.2 L726.4,303.0Z M753.3,296.6 L758.7,296.8 L756.8,302.2Z M758.7,296.8 L763.3,301.9 L756.8,302.2Z M767.3,296.6 L774.8,296.9 L770.7,303.4Z M549.4,303.1 L555.3,302.8 L551.9,309.0Z M585.0,301.6 L593.1,301.4 L588.1,308.1Z M585.0,301.6 L588.1,308.1 L580.8,308.4Z M593.1,301.4 L600.4,301.6 L597.9,309.0Z M600.4,301.6 L604.6,309.4 L597.9,309.0Z M615.4,303.2 L619.3,309.1 L612.7,309.1Z M630.0,302.5 L637.9,303.1 L634.3,308.2Z M653.5,301.5 L660.1,302.7 L655.2,307.8Z M665.9,302.6 L675.0,303.3 L671.2,308.5Z M675.0,303.3 L681.5,303.5 L679.0,309.4Z M675.0,303.3 L679.0,309.4 L671.2,308.5Z M697.7,301.4 L699.9,308.7 L692.5,308.6Z M704.7,302.7 L708.2,309.8 L699.9,308.7Z M740.9,302.5 L749.3,301.9 L743.5,308.6Z M749.3,301.9 L752.4,309.8 L743.5,308.6Z M551.9,309.0 L560.2,309.4 L554.8,315.6Z M560.2,309.4 L562.5,316.2 L554.8,315.6Z M566.0,309.3 L575.6,308.9 L569.8,316.0Z M575.6,308.9 L577.3,314.2 L569.8,316.0Z M580.8,308.4 L588.1,308.1 L586.3,314.6Z M604.6,309.4 L612.7,309.1 L608.5,316.0Z M612.7,309.1 L615.9,314.3 L608.5,316.0Z M619.3,309.1 L623.0,315.7 L615.9,314.3Z M626.9,309.0 L634.3,308.2 L630.0,316.2Z M634.3,308.2 L641.6,308.7 L636.9,316.2Z M641.6,308.7 L649.3,307.9 L645.5,314.1Z M655.2,307.8 L664.1,309.7 L660.5,314.3Z M685.8,308.3 L692.5,308.6 L689.0,315.4Z M692.5,308.6 L696.5,315.6 L689.0,315.4Z M708.2,309.8 L711.1,315.5 L703.2,315.9Z M714.0,309.0 L719.2,315.0 L711.1,315.5Z M730.8,309.0 L734.9,315.8 L726.0,315.8Z M738.5,308.7 L741.3,314.8 L734.9,315.8Z M743.5,308.6 L747.4,316.3 L741.3,314.8Z M760.9,308.8 L762.9,315.4 L756.4,315.9Z M774.8,308.2 L778.4,314.8 L771.9,315.9Z M554.8,315.6 L560.1,322.5 L552.1,322.0Z M569.8,316.0 L573.3,321.1 L568.0,321.1Z M577.3,314.2 L586.3,314.6 L581.8,321.8Z M577.3,314.2 L581.8,321.8 L573.3,321.1Z M630.0,316.2 L633.4,320.7 L626.9,322.5Z M651.0,315.5 L660.5,314.3 L657.1,321.0Z M681.9,314.2 L689.0,315.4 L686.4,321.5Z M726.0,315.8 L734.9,315.8 L729.2,320.9Z M762.9,315.4 L771.9,315.9 L768.3,321.3Z M560.1,322.5 L563.6,327.0 L556.4,327.7Z M590.2,322.5 L595.6,322.4 L593.8,327.9Z M595.6,322.4 L601.7,328.6 L593.8,327.9Z M605.0,322.4 L611.8,321.1 L608.7,329.1Z M619.9,322.3 L626.9,322.5 L621.9,327.3Z M647.8,322.2 L657.1,321.0 L653.4,327.1Z M657.1,321.0 L663.7,322.0 L660.0,327.8Z M691.9,322.3 L696.6,327.3 L689.7,327.8Z M691.9,322.3 L701.1,321.0 L696.6,327.3Z M701.1,321.0 L705.3,329.1 L696.6,327.3Z M708.0,322.5 L710.8,327.0 L705.3,329.1Z M708.0,322.5 L716.2,321.7 L710.8,327.0Z M729.2,320.9 L736.6,322.1 L734.6,327.0Z M736.6,322.1 L741.8,328.5 L734.6,327.0Z M758.7,320.6 L764.0,329.0 L754.7,327.3Z M773.4,321.9 L778.3,328.6 L771.2,327.6Z M569.7,329.1 L579.3,328.0 L575.1,333.4Z M569.7,329.1 L575.1,333.4 L566.5,333.7Z M579.3,328.0 L582.6,333.8 L575.1,333.4Z M593.8,327.9 L596.1,335.4 L588.2,335.4Z M601.7,328.6 L608.7,329.1 L605.2,335.3Z M601.7,328.6 L605.2,335.3 L596.1,335.4Z M621.9,327.3 L627.3,334.7 L618.0,335.4Z M629.0,327.0 L637.6,328.8 L633.7,334.1Z M637.6,328.8 L644.8,329.0 L642.0,334.4Z M653.4,327.1 L660.0,327.8 L655.3,333.5Z M666.1,329.0 L669.9,335.3 L664.0,334.6Z M696.6,327.3 L705.3,329.1 L699.5,334.4Z M696.6,327.3 L699.5,334.4 L693.9,334.1Z M718.3,327.7 L721.4,335.3 L714.2,335.5Z M734.6,327.0 L737.3,334.0 L730.4,333.8Z M741.8,328.5 L744.2,333.8 L737.3,334.0Z M754.7,327.3 L764.0,329.0 L760.9,335.4Z M754.7,327.3 L760.9,335.4 L751.8,335.5Z M764.0,329.0 L766.0,334.0 L760.9,335.4Z M544.0,334.1 L551.8,333.6 L549.3,340.4Z M551.8,333.6 L557.3,339.8 L549.3,340.4Z M566.5,333.7 L575.1,333.4 L570.0,339.8Z M596.1,335.4 L600.7,340.1 L594.2,340.2Z M610.7,334.3 L615.9,340.2 L607.1,341.4Z M618.0,335.4 L621.6,339.9 L615.9,340.2Z M618.0,335.4 L627.3,334.7 L621.6,339.9Z M642.0,334.4 L645.2,341.3 L636.9,340.2Z M648.9,333.7 L655.3,333.5 L653.1,341.0Z M664.0,334.6 L667.7,340.6 L658.9,339.9Z M669.9,335.3 L677.6,334.2 L675.1,339.9Z M677.6,334.2 L682.7,340.5 L675.1,339.9Z M684.7,333.9 L693.9,334.1 L690.2,341.7Z M714.2,335.5 L721.4,335.3 L718.1,341.6Z M744.2,333.8 L748.4,340.9 L739.8,340.9Z M760.9,335.4 L764.1,341.7 L754.9,341.3Z M760.9,335.4 L766.0,334.0 L764.1,341.7Z M766.0,334.0 L770.2,341.3 L764.1,341.7Z M775.4,333.5 L777.8,341.4 L770.2,341.3Z M549.3,340.4 L557.3,339.8 L553.6,347.2Z M570.0,339.8 L579.2,340.9 L575.8,346.6Z M600.7,340.1 L604.7,346.6 L595.6,346.4Z M607.1,341.4 L610.3,347.5 L604.7,346.6Z M645.2,341.3 L653.1,341.0 L648.6,347.3Z M653.1,341.0 L658.9,339.9 L655.4,346.4Z M658.9,339.9 L667.7,340.6 L663.2,346.5Z M682.7,340.5 L690.2,341.7 L686.2,346.5Z M690.2,341.7 L696.7,339.8 L693.8,348.2Z M696.7,339.8 L705.2,340.8 L700.1,347.1Z M696.7,339.8 L700.1,347.1 L693.8,348.2Z M712.5,340.3 L714.9,348.2 L708.7,347.3Z M718.1,341.6 L723.3,346.9 L714.9,348.2Z M764.1,341.7 L770.2,341.3 L768.2,348.2Z M770.2,341.3 L777.8,341.4 L773.7,347.1Z M770.2,341.3 L773.7,347.1 L768.2,348.2Z M581.2,346.4 L588.8,348.0 L586.8,354.0Z M610.3,347.5 L615.8,353.2 L608.3,353.2Z M610.3,347.5 L619.2,347.3 L615.8,353.2Z M626.9,346.4 L630.4,353.1 L622.8,354.6Z M648.6,347.3 L655.4,346.4 L651.8,354.0Z M671.0,348.1 L677.3,347.4 L673.9,353.6Z M693.8,348.2 L696.2,353.5 L688.3,352.9Z M714.9,348.2 L719.8,353.9 L710.4,353.8Z M745.6,348.2 L753.0,348.0 L748.8,353.6Z M753.0,348.0 L758.4,347.3 L755.4,353.1Z M758.4,347.3 L768.2,348.2 L762.6,353.7Z M768.2,348.2 L770.4,353.9 L762.6,353.7Z M549.0,353.4 L556.2,352.7 L552.5,360.1Z M569.7,352.9 L573.7,359.1 L566.7,360.7Z M579.5,354.3 L583.0,359.9 L573.7,359.1Z M586.8,354.0 L588.3,359.8 L583.0,359.9Z M622.8,354.6 L630.4,353.1 L626.0,360.5Z M651.8,354.0 L656.7,360.0 L649.2,360.6Z M658.7,353.9 L668.3,353.7 L664.1,360.5Z M673.9,353.6 L682.0,352.9 L679.2,359.0Z M673.9,353.6 L679.2,359.0 L671.9,359.3Z M682.0,352.9 L688.3,352.9 L686.3,360.3Z M688.3,352.9 L696.2,353.5 L693.0,361.1Z M703.5,353.1 L708.5,360.9 L700.6,359.9Z M710.4,353.8 L719.8,353.9 L715.5,359.8Z M719.8,353.9 L722.5,360.0 L715.5,359.8Z M748.8,353.6 L755.4,353.1 L752.9,360.8Z M748.8,353.6 L752.9,360.8 L744.5,359.7Z M755.4,353.1 L762.6,353.7 L759.6,360.0Z M755.4,353.1 L759.6,360.0 L752.9,360.8Z M559.2,361.1 L564.4,367.2 L557.2,366.1Z M566.7,360.7 L573.7,359.1 L572.1,365.8Z M573.7,359.1 L578.1,367.4 L572.1,365.8Z M596.6,360.6 L603.2,359.5 L601.6,367.1Z M603.2,359.5 L612.8,360.6 L608.0,367.6Z M626.0,360.5 L629.7,366.7 L623.2,366.2Z M634.1,360.8 L642.0,360.1 L637.1,367.5Z M642.0,360.1 L645.4,366.5 L637.1,367.5Z M649.2,360.6 L651.3,366.2 L645.4,366.5Z M671.9,359.3 L679.2,359.0 L675.7,366.5Z M700.6,359.9 L708.5,360.9 L703.2,366.1Z M715.5,359.8 L722.5,360.0 L718.9,365.6Z M752.9,360.8 L759.6,360.0 L755.9,366.5Z M759.6,360.0 L766.2,359.6 L762.5,365.8Z M766.2,359.6 L771.0,366.7 L762.5,365.8Z M773.5,360.2 L777.7,367.6 L771.0,366.7Z M557.2,366.1 L559.3,373.3 L552.2,373.5Z M564.4,367.2 L572.1,365.8 L565.9,372.5Z M584.4,365.5 L589.4,373.0 L582.4,372.2Z M593.3,366.5 L601.6,367.1 L596.2,373.2Z M645.4,366.5 L648.9,373.6 L641.3,373.6Z M659.4,366.6 L664.1,372.5 L654.9,371.8Z M675.7,366.5 L681.7,366.8 L677.3,372.4Z M690.6,366.1 L696.8,367.2 L693.2,372.6Z M703.2,366.1 L712.7,367.2 L706.6,373.8Z M712.7,367.2 L718.9,365.6 L715.4,373.9Z M718.9,365.6 L727.3,366.9 L722.4,373.2Z M727.3,366.9 L729.3,371.9 L722.4,373.2Z M734.5,367.6 L742.1,366.3 L738.5,373.7Z M734.5,367.6 L738.5,373.7 L729.3,371.9Z M742.1,366.3 L747.6,366.0 L744.3,373.8Z M747.6,366.0 L753.0,372.5 L744.3,373.8Z M755.9,366.5 L762.5,365.8 L759.9,373.9Z M771.0,366.7 L777.7,367.6 L773.7,372.6Z M552.2,373.5 L555.6,380.1 L549.3,378.7Z M596.2,373.2 L600.6,379.0 L593.3,378.5Z M596.2,373.2 L604.3,374.0 L600.6,379.0Z M604.3,374.0 L611.8,372.7 L607.6,378.3Z M632.8,372.2 L636.8,378.3 L629.3,378.8Z M641.3,373.6 L648.9,373.6 L645.3,379.0Z M654.9,371.8 L658.6,378.8 L651.4,379.8Z M671.4,372.6 L677.3,372.4 L674.4,380.0Z M722.4,373.2 L726.8,378.8 L718.8,378.5Z M555.6,380.1 L559.0,386.5 L552.1,384.8Z M586.9,378.8 L588.9,384.8 L581.6,385.7Z M607.6,378.3 L614.3,380.0 L611.0,385.5Z M636.8,378.3 L645.3,379.0 L640.0,386.1Z M645.3,379.0 L649.0,385.4 L640.0,386.1Z M651.4,379.8 L655.8,386.1 L649.0,385.4Z M668.0,378.5 L674.4,380.0 L671.7,385.4Z M668.0,378.5 L671.7,385.4 L663.9,385.2Z M674.4,380.0 L678.5,385.0 L671.7,385.4Z M726.8,378.8 L730.4,385.0 L721.4,385.3Z M756.9,378.5 L759.2,384.6 L752.0,386.1Z" fill="#e0a818" fill-opacity="0.55"/>
<path d="M559.9,154.7 L563.4,161.8 L557.0,162.4Z M589.2,155.7 L592.8,161.8 L586.5,160.9Z M595.8,154.4 L604.5,156.0 L599.3,161.3Z M669.7,154.4 L678.7,154.8 L675.7,160.6Z M692.9,154.6 L696.9,160.9 L688.6,161.4Z M701.2,155.4 L702.8,161.2 L696.9,160.9Z M707.1,155.2 L715.3,155.8 L711.2,161.6Z M723.2,154.5 L731.2,154.2 L726.3,161.7Z M731.2,154.2 L734.2,160.4 L726.3,161.7Z M743.9,155.0 L749.5,162.1 L742.1,162.0Z M743.9,155.0 L751.0,155.4 L749.5,162.1Z M760.3,155.2 L768.0,154.6 L762.3,161.7Z M569.8,161.9 L574.9,167.0 L566.0,168.6Z M578.7,162.5 L586.5,160.9 L581.4,167.5Z M586.5,160.9 L589.0,167.0 L581.4,167.5Z M607.0,160.6 L614.2,162.0 L610.5,166.9Z M614.2,162.0 L621.7,160.9 L618.6,167.3Z M688.6,161.4 L692.6,167.2 L685.7,168.4Z M696.9,160.9 L702.8,161.2 L701.2,168.9Z M711.2,161.6 L716.0,168.3 L708.7,168.5Z M749.5,162.1 L755.6,161.2 L753.4,167.7Z M755.6,161.2 L760.7,168.9 L753.4,167.7Z M762.3,161.7 L769.6,160.5 L768.2,167.5Z M769.6,160.5 L777.3,160.7 L773.7,167.2Z M544.6,166.8 L551.1,167.0 L547.9,173.6Z M589.0,167.0 L593.8,174.2 L586.8,174.8Z M648.7,166.8 L656.1,168.9 L651.4,174.9Z M664.3,168.2 L670.2,167.5 L666.7,174.3Z M685.7,168.4 L692.6,167.2 L689.4,175.2Z M701.2,168.9 L704.9,173.6 L696.5,175.0Z M708.7,168.5 L716.0,168.3 L710.9,173.8Z M753.4,167.7 L760.7,168.9 L755.7,175.1Z M773.7,167.2 L777.9,173.5 L770.8,173.2Z M547.9,173.6 L556.4,175.1 L551.5,180.6Z M577.2,174.6 L586.8,174.8 L581.0,180.8Z M593.8,174.2 L597.5,180.7 L588.7,180.1Z M622.4,175.2 L630.7,173.5 L626.4,181.1Z M630.7,173.5 L633.7,180.7 L626.4,181.1Z M646.0,174.9 L651.4,174.9 L649.1,181.5Z M710.9,173.8 L718.2,174.4 L715.6,179.8Z M740.7,174.1 L748.7,175.1 L746.1,181.4Z M740.7,174.1 L746.1,181.4 L737.1,180.6Z M755.7,175.1 L759.6,180.3 L751.3,180.5Z M566.7,180.7 L574.7,181.3 L569.8,188.1Z M588.7,180.1 L591.9,187.7 L584.7,186.5Z M633.7,180.7 L636.4,186.1 L630.3,187.5Z M671.7,179.8 L677.2,180.5 L673.4,187.8Z M677.2,180.5 L684.5,180.1 L681.8,186.7Z M706.9,181.1 L715.6,179.8 L710.5,186.3Z M746.1,181.4 L748.1,186.0 L741.1,186.3Z M759.6,180.3 L763.9,187.2 L755.3,186.0Z M775.0,179.6 L779.2,186.2 L769.9,187.0Z M563.8,187.1 L567.7,194.5 L559.5,193.5Z M579.0,188.1 L584.7,186.5 L582.5,193.8Z M579.0,188.1 L582.5,193.8 L574.2,194.2Z M591.9,187.7 L599.9,186.2 L595.6,192.6Z M616.1,186.5 L617.9,194.2 L611.0,192.7Z M621.8,188.0 L630.3,187.5 L627.4,193.8Z M630.3,187.5 L636.4,186.1 L633.2,192.9Z M673.4,187.8 L681.8,186.7 L677.7,193.1Z M673.4,187.8 L677.7,193.1 L670.1,194.5Z M696.1,186.2 L704.2,186.5 L699.6,193.5Z M710.5,186.3 L714.1,193.2 L706.5,192.9Z M725.8,186.6 L729.5,192.9 L721.4,192.4Z M734.4,186.6 L741.1,186.3 L737.6,193.5Z M741.1,186.3 L745.5,193.8 L737.6,193.5Z M748.1,186.0 L755.3,186.0 L752.8,194.3Z M748.1,186.0 L752.8,194.3 L745.5,193.8Z M755.3,186.0 L763.9,187.2 L759.3,193.1Z M552.4,194.2 L557.1,200.1 L547.5,200.6Z M559.5,193.5 L567.7,194.5 L564.1,200.5Z M567.7,194.5 L570.0,199.9 L564.1,200.5Z M582.5,193.8 L586.5,200.6 L578.3,200.6Z M603.1,194.0 L611.0,192.7 L607.2,198.8Z M633.2,192.9 L637.8,200.3 L630.3,200.1Z M633.2,192.9 L640.7,193.4 L637.8,200.3Z M647.7,193.3 L653.1,200.4 L644.9,198.8Z M655.4,194.5 L664.6,193.6 L659.7,199.9Z M699.6,193.5 L706.5,192.9 L704.1,199.6Z M729.5,192.9 L737.6,193.5 L732.8,199.3Z M752.8,194.3 L754.8,199.4 L748.7,198.8Z M768.3,192.7 L775.0,193.8 L771.2,199.4Z M547.5,200.6 L553.4,205.6 L544.9,205.4Z M586.5,200.6 L593.3,200.7 L588.6,207.2Z M630.3,200.1 L633.1,207.1 L627.4,206.7Z M637.8,200.3 L641.2,205.2 L633.1,207.1Z M653.1,200.4 L655.9,205.8 L647.3,206.3Z M667.5,198.9 L670.3,207.0 L662.5,205.9Z M697.3,200.9 L701.4,205.8 L694.1,206.7Z M704.1,199.6 L707.5,206.0 L701.4,205.8Z M741.7,199.4 L744.2,207.2 L736.4,207.0Z M771.2,199.4 L775.4,207.0 L766.7,207.3Z M561.0,207.2 L564.1,211.7 L557.2,212.8Z M565.9,206.2 L575.4,207.3 L571.5,212.6Z M619.8,206.3 L627.4,206.7 L623.1,212.2Z M627.4,206.7 L630.2,212.4 L623.1,212.2Z M627.4,206.7 L633.1,207.1 L630.2,212.4Z M633.1,207.1 L641.2,205.2 L636.6,211.9Z M647.3,206.3 L655.9,205.8 L652.3,212.1Z M676.9,206.8 L681.5,211.8 L673.7,211.8Z M686.5,205.4 L694.1,206.7 L688.6,212.1Z M694.1,206.7 L696.9,213.5 L688.6,212.1Z M729.4,205.3 L736.4,207.0 L734.9,211.9Z M751.5,205.8 L759.6,205.6 L755.3,212.1Z M571.5,212.6 L579.0,213.0 L575.4,219.9Z M594.2,211.9 L600.4,212.3 L596.9,219.5Z M607.4,213.2 L612.0,219.7 L605.3,219.6Z M630.2,212.4 L636.6,211.9 L633.1,220.0Z M673.7,211.8 L681.5,211.8 L677.9,218.5Z M681.5,211.8 L685.9,218.0 L677.9,218.5Z M704.7,212.5 L711.3,212.7 L708.8,219.0Z M711.3,212.7 L718.6,212.3 L714.5,218.5Z M734.9,211.9 L741.1,213.0 L737.4,219.5Z M771.9,213.4 L779.1,211.6 L774.9,218.4Z M771.9,213.4 L774.9,218.4 L766.6,218.9Z M553.4,219.0 L560.0,218.0 L556.1,224.8Z M560.0,218.0 L564.7,225.1 L556.1,224.8Z M583.2,218.5 L588.4,218.3 L585.2,226.5Z M588.4,218.3 L596.9,219.5 L593.1,224.8Z M596.9,219.5 L599.8,225.3 L593.1,224.8Z M625.2,219.7 L629.2,224.5 L622.0,226.5Z M633.1,220.0 L641.6,218.7 L636.4,225.3Z M662.4,218.1 L670.9,219.3 L666.3,226.5Z M677.9,218.5 L682.3,225.2 L675.1,224.5Z M685.9,218.0 L689.0,225.1 L682.3,225.2Z M701.6,219.4 L703.5,225.2 L695.8,224.4Z M708.8,219.0 L714.5,218.5 L712.7,224.7Z M714.5,218.5 L723.8,219.5 L720.1,224.9Z M737.4,219.5 L744.6,218.6 L739.9,225.4Z M766.6,218.9 L770.5,226.2 L764.3,224.5Z M571.7,224.9 L577.6,226.1 L575.8,232.2Z M585.2,226.5 L588.9,231.4 L581.4,232.4Z M593.1,224.8 L595.5,232.5 L588.9,231.4Z M614.4,225.3 L622.0,226.5 L618.3,231.8Z M645.9,226.3 L649.7,231.2 L641.0,231.9Z M652.9,226.6 L656.8,232.4 L649.7,231.2Z M660.8,225.1 L666.3,226.5 L664.2,232.5Z M660.8,225.1 L664.2,232.5 L656.8,232.4Z M666.3,226.5 L675.1,224.5 L671.1,231.5Z M689.0,225.1 L692.2,232.5 L686.3,231.0Z M695.8,224.4 L703.5,225.2 L699.7,230.9Z M695.8,224.4 L699.7,230.9 L692.2,232.5Z M734.5,225.3 L739.9,225.4 L736.4,231.9Z M739.9,225.4 L745.3,231.8 L736.4,231.9Z M748.2,226.4 L751.5,231.7 L745.3,231.8Z M764.3,224.5 L767.6,232.7 L759.9,232.3Z M770.5,226.2 L778.8,224.5 L774.8,231.1Z M560.4,232.8 L566.8,231.4 L564.1,237.6Z M566.8,231.4 L575.8,232.2 L570.2,237.8Z M581.4,232.4 L585.9,237.9 L577.4,239.2Z M677.7,231.6 L683.1,237.4 L673.9,238.9Z M745.3,231.8 L751.5,231.7 L749.3,238.4Z M759.9,232.3 L767.6,232.7 L763.0,238.4Z M767.6,232.7 L771.1,237.4 L763.0,238.4Z M767.6,232.7 L774.8,231.1 L771.1,237.4Z M774.8,231.1 L777.2,238.7 L771.1,237.4Z M564.1,237.6 L566.8,244.5 L559.3,244.9Z M577.4,239.2 L581.6,244.1 L575.5,245.8Z M592.8,239.4 L595.5,245.6 L590.0,244.1Z M608.7,238.6 L611.4,245.6 L604.0,245.4Z M631.0,239.2 L634.2,245.6 L625.1,244.8Z M643.9,237.6 L648.3,244.7 L640.1,245.0Z M653.5,238.5 L660.8,238.0 L655.1,244.2Z M660.8,238.0 L668.1,238.2 L663.5,245.7Z M740.6,237.7 L749.3,238.4 L745.7,244.0Z M551.9,245.7 L559.3,244.9 L556.8,250.1Z M581.6,244.1 L590.0,244.1 L585.5,251.3Z M590.0,244.1 L592.9,251.5 L585.5,251.3Z M595.5,245.6 L600.4,251.0 L592.9,251.5Z M611.4,245.6 L615.3,250.5 L606.7,251.4Z M625.1,244.8 L634.2,245.6 L630.0,250.4Z M634.2,245.6 L640.1,245.0 L637.4,250.3Z M640.1,245.0 L648.3,244.7 L643.9,251.0Z M694.2,245.8 L700.4,243.7 L697.9,250.3Z M700.4,243.7 L705.0,252.2 L697.9,250.3Z M737.2,245.5 L745.7,244.0 L741.8,252.1Z M751.5,244.5 L756.6,250.4 L747.4,250.8Z M766.0,244.2 L775.0,245.6 L771.5,250.3Z M556.8,250.1 L564.4,250.3 L558.6,256.8Z M564.4,250.3 L571.2,251.2 L566.3,258.5Z M578.6,250.7 L585.5,251.3 L581.1,258.2Z M630.0,250.4 L637.4,250.3 L634.6,257.0Z M630.0,250.4 L634.6,257.0 L626.7,257.3Z M651.2,251.0 L659.7,250.1 L655.8,256.8Z M705.0,252.2 L708.1,257.4 L699.2,256.8Z M726.3,252.1 L734.8,250.4 L730.4,256.5Z M764.3,250.6 L771.5,250.3 L767.3,257.5Z M771.5,250.3 L773.5,258.5 L767.3,257.5Z M552.4,257.1 L555.0,264.3 L548.0,263.2Z M558.6,256.8 L564.5,264.6 L555.0,264.3Z M575.1,258.4 L577.0,264.3 L570.6,263.4Z M588.4,257.6 L597.2,257.2 L593.5,263.8Z M618.0,258.6 L622.5,263.4 L614.1,264.0Z M648.2,258.1 L655.8,256.8 L651.5,264.2Z M664.0,256.5 L671.6,257.0 L667.9,263.2Z M678.6,258.6 L685.8,257.9 L680.7,264.8Z M736.1,257.2 L743.8,257.2 L741.6,264.7Z M570.6,263.4 L575.6,270.0 L567.8,270.0Z M601.6,264.5 L607.2,264.8 L604.1,271.1Z M607.2,264.8 L614.1,264.0 L612.1,271.1Z M614.1,264.0 L618.8,270.8 L612.1,271.1Z M636.2,264.1 L646.0,263.2 L640.1,271.3Z M674.0,263.5 L680.7,264.8 L678.7,270.6Z M718.2,263.1 L725.6,262.9 L723.7,271.3Z M725.6,262.9 L733.3,264.5 L729.0,269.7Z M733.3,264.5 L736.4,269.3 L729.0,269.7Z M741.6,264.7 L745.7,271.0 L736.4,269.3Z M551.8,269.8 L554.9,276.2 L548.2,276.6Z M560.4,271.3 L562.9,277.2 L554.9,276.2Z M560.4,271.3 L567.8,270.0 L562.9,277.2Z M575.6,270.0 L581.3,271.3 L579.5,276.8Z M626.6,269.9 L633.1,270.6 L630.9,276.0Z M633.1,270.6 L636.2,276.1 L630.9,276.0Z M647.7,269.3 L655.0,271.3 L651.0,276.7Z M678.7,270.6 L686.1,270.9 L681.3,277.7Z M691.9,270.6 L697.2,276.8 L688.7,276.1Z M708.6,271.2 L714.1,271.2 L710.4,277.4Z M752.5,271.1 L759.9,269.9 L755.1,276.2Z M554.9,276.2 L562.9,277.2 L559.4,282.8Z M562.9,277.2 L566.3,283.9 L559.4,282.8Z M570.6,276.4 L575.0,283.7 L566.3,283.9Z M600.3,277.4 L607.5,277.2 L605.2,282.6Z M615.4,276.1 L623.6,275.9 L619.5,283.9Z M630.9,276.0 L633.1,282.8 L625.5,282.4Z M659.7,277.4 L666.3,276.8 L662.4,284.2Z M666.3,276.8 L674.1,277.5 L669.8,282.9Z M666.3,276.8 L669.8,282.9 L662.4,284.2Z M681.3,277.7 L686.2,283.0 L679.5,283.8Z M697.2,276.8 L703.1,277.1 L699.4,282.5Z M703.1,277.1 L707.5,282.1 L699.4,282.5Z M710.4,277.4 L719.4,277.4 L714.9,283.8Z M710.4,277.4 L714.9,283.8 L707.5,282.1Z M719.4,277.4 L723.1,283.2 L714.9,283.8Z M749.5,275.7 L755.1,276.2 L753.3,283.0Z M770.4,277.6 L775.0,284.0 L766.8,282.6Z M545.1,283.7 L553.1,283.5 L549.4,290.0Z M559.4,282.8 L563.9,289.5 L557.0,290.0Z M566.3,283.9 L570.4,289.9 L563.9,289.5Z M581.1,283.0 L590.1,283.3 L586.4,290.0Z M590.1,283.3 L595.8,283.1 L593.4,289.0Z M595.8,283.1 L600.3,289.5 L593.4,289.0Z M625.5,282.4 L630.8,289.3 L621.9,289.9Z M648.2,282.5 L651.4,290.2 L643.7,289.7Z M657.2,283.7 L662.4,284.2 L660.8,289.6Z M662.4,284.2 L666.1,289.7 L660.8,289.6Z M669.8,282.9 L674.6,290.1 L666.1,289.7Z M699.4,282.5 L703.3,290.0 L696.5,290.6Z M730.3,283.1 L736.5,283.4 L733.1,289.4Z M570.4,289.9 L577.3,289.4 L573.9,297.0Z M586.4,290.0 L593.4,289.0 L590.2,296.7Z M593.4,289.0 L600.3,289.5 L596.7,295.5Z M608.2,289.4 L612.5,295.7 L604.3,295.2Z M621.9,289.9 L626.1,295.4 L619.9,295.5Z M637.5,290.6 L639.9,296.5 L633.6,295.3Z M666.1,289.7 L671.2,295.7 L663.2,296.3Z M674.6,290.1 L679.3,296.8 L671.2,295.7Z M681.9,289.9 L690.2,289.6 L684.4,296.7Z M755.5,289.1 L762.6,290.1 L758.7,296.8Z M771.8,289.6 L774.8,296.9 L767.3,296.6Z M573.9,297.0 L581.6,296.3 L578.4,301.9Z M590.2,296.7 L593.1,301.4 L585.0,301.6Z M619.9,295.5 L621.4,303.1 L615.4,303.2Z M671.2,295.7 L679.3,296.8 L675.0,303.3Z M679.3,296.8 L681.5,303.5 L675.0,303.3Z M694.1,296.6 L697.7,301.4 L689.3,302.4Z M699.5,296.7 L708.1,294.9 L704.7,302.7Z M774.8,296.9 L778.5,303.0 L770.7,303.4Z M570.7,303.2 L575.6,308.9 L566.0,309.3Z M600.4,301.6 L607.9,302.4 L604.6,309.4Z M630.0,302.5 L634.3,308.2 L626.9,309.0Z M653.5,301.5 L655.2,307.8 L649.3,307.9Z M660.1,302.7 L664.1,309.7 L655.2,307.8Z M726.4,303.0 L732.9,302.3 L730.8,309.0Z M756.8,302.2 L763.3,301.9 L760.9,308.8Z M763.3,301.9 L770.7,303.4 L766.8,307.9Z M763.3,301.9 L766.8,307.9 L760.9,308.8Z M575.6,308.9 L580.8,308.4 L577.3,314.2Z M604.6,309.4 L608.5,316.0 L599.3,315.8Z M699.9,308.7 L703.2,315.9 L696.5,315.6Z M699.9,308.7 L708.2,309.8 L703.2,315.9Z M752.4,309.8 L760.9,308.8 L756.4,315.9Z M547.8,314.1 L554.8,315.6 L552.1,322.0Z M547.8,314.1 L552.1,322.0 L544.8,322.5Z M666.6,315.7 L673.6,316.0 L670.7,321.0Z M666.6,315.7 L670.7,321.0 L663.7,322.0Z M673.6,316.0 L681.9,314.2 L677.6,322.2Z M673.6,316.0 L677.6,322.2 L670.7,321.0Z M711.1,315.5 L716.2,321.7 L708.0,322.5Z M719.2,315.0 L726.0,315.8 L722.5,321.8Z M726.0,315.8 L729.2,320.9 L722.5,321.8Z M741.3,314.8 L747.4,316.3 L744.4,321.8Z M771.9,315.9 L778.4,314.8 L773.4,321.9Z M544.8,322.5 L552.1,322.0 L549.4,327.3Z M595.6,322.4 L605.0,322.4 L601.7,328.6Z M611.8,321.1 L614.7,327.0 L608.7,329.1Z M641.3,322.3 L647.8,322.2 L644.8,329.0Z M647.8,322.2 L653.4,327.1 L644.8,329.0Z M663.7,322.0 L666.1,329.0 L660.0,327.8Z M686.4,321.5 L691.9,322.3 L689.7,327.8Z M701.1,321.0 L708.0,322.5 L705.3,329.1Z M722.5,321.8 L729.2,320.9 L727.3,328.9Z M736.6,322.1 L744.4,321.8 L741.8,328.5Z M768.3,321.3 L771.2,327.6 L764.0,329.0Z M549.4,327.3 L551.8,333.6 L544.0,334.1Z M563.6,327.0 L566.5,333.7 L559.8,333.7Z M608.7,329.1 L610.7,334.3 L605.2,335.3Z M621.9,327.3 L629.0,327.0 L627.3,334.7Z M644.8,329.0 L653.4,327.1 L648.9,333.7Z M660.0,327.8 L666.1,329.0 L664.0,334.6Z M660.0,327.8 L664.0,334.6 L655.3,333.5Z M673.9,328.2 L682.3,329.0 L677.6,334.2Z M682.3,329.0 L689.7,327.8 L684.7,333.9Z M682.3,329.0 L684.7,333.9 L677.6,334.2Z M689.7,327.8 L693.9,334.1 L684.7,333.9Z M705.3,329.1 L710.8,327.0 L707.3,335.3Z M705.3,329.1 L707.3,335.3 L699.5,334.4Z M734.6,327.0 L741.8,328.5 L737.3,334.0Z M771.2,327.6 L778.3,328.6 L775.4,333.5Z M551.8,333.6 L559.8,333.7 L557.3,339.8Z M575.1,333.4 L579.2,340.9 L570.0,339.8Z M605.2,335.3 L610.7,334.3 L607.1,341.4Z M627.3,334.7 L630.4,340.8 L621.6,339.9Z M648.9,333.7 L653.1,341.0 L645.2,341.3Z M655.3,333.5 L664.0,334.6 L658.9,339.9Z M699.5,334.4 L707.3,335.3 L705.2,340.8Z M737.3,334.0 L739.8,340.9 L733.4,341.1Z M744.2,333.8 L751.8,335.5 L748.4,340.9Z M579.2,340.9 L584.9,340.7 L581.2,346.4Z M621.6,339.9 L630.4,340.8 L626.9,346.4Z M630.4,340.8 L636.9,340.2 L634.8,347.7Z M636.9,340.2 L645.2,341.3 L640.0,346.4Z M645.2,341.3 L648.6,347.3 L640.0,346.4Z M667.7,340.6 L675.1,339.9 L671.0,348.1Z M682.7,340.5 L686.2,346.5 L677.3,347.4Z M718.1,341.6 L726.0,340.1 L723.3,346.9Z M748.4,340.9 L753.0,348.0 L745.6,348.2Z M543.9,348.1 L553.6,347.2 L549.0,353.4Z M553.6,347.2 L556.2,352.7 L549.0,353.4Z M588.8,348.0 L593.9,354.5 L586.8,354.0Z M634.8,347.7 L637.6,353.5 L630.4,353.1Z M634.8,347.7 L640.0,346.4 L637.6,353.5Z M640.0,346.4 L646.1,353.2 L637.6,353.5Z M700.1,347.1 L708.7,347.3 L703.5,353.1Z M729.3,346.9 L732.9,354.1 L726.5,354.0Z M737.2,348.3 L741.0,353.8 L732.9,354.1Z M753.0,348.0 L755.4,353.1 L748.8,353.6Z M758.4,347.3 L762.6,353.7 L755.4,353.1Z M563.3,353.7 L569.7,352.9 L566.7,360.7Z M593.9,354.5 L601.5,352.6 L596.6,360.6Z M630.4,353.1 L637.6,353.5 L634.1,360.8Z M630.4,353.1 L634.1,360.8 L626.0,360.5Z M668.3,353.7 L671.9,359.3 L664.1,360.5Z M688.3,352.9 L693.0,361.1 L686.3,360.3Z M696.2,353.5 L703.5,353.1 L700.6,359.9Z M726.5,354.0 L732.9,354.1 L730.6,359.6Z M732.9,354.1 L741.0,353.8 L737.1,360.2Z M741.0,353.8 L744.5,359.7 L737.1,360.2Z M770.4,353.9 L776.8,353.3 L773.5,360.2Z M552.5,360.1 L557.2,366.1 L548.9,365.6Z M583.0,359.9 L584.4,365.5 L578.1,367.4Z M588.3,359.8 L593.3,366.5 L584.4,365.5Z M618.1,359.7 L626.0,360.5 L623.2,366.2Z M656.7,360.0 L659.4,366.6 L651.3,366.2Z M656.7,360.0 L664.1,360.5 L659.4,366.6Z M679.2,359.0 L686.3,360.3 L681.7,366.8Z M686.3,360.3 L690.6,366.1 L681.7,366.8Z M708.5,360.9 L712.7,367.2 L703.2,366.1Z M715.5,359.8 L718.9,365.6 L712.7,367.2Z M722.5,360.0 L727.3,366.9 L718.9,365.6Z M744.5,359.7 L747.6,366.0 L742.1,366.3Z M744.5,359.7 L752.9,360.8 L747.6,366.0Z M572.1,365.8 L575.5,373.1 L565.9,372.5Z M593.3,366.5 L596.2,373.2 L589.4,373.0Z M601.6,367.1 L604.3,374.0 L596.2,373.2Z M608.0,367.6 L611.8,372.7 L604.3,374.0Z M615.3,366.5 L623.2,366.2 L618.0,372.1Z M629.7,366.7 L637.1,367.5 L632.8,372.2Z M659.4,366.6 L667.3,367.3 L664.1,372.5Z M681.7,366.8 L684.6,373.8 L677.3,372.4Z M703.2,366.1 L706.6,373.8 L700.3,372.6Z M718.9,365.6 L722.4,373.2 L715.4,373.9Z M762.5,365.8 L767.0,373.9 L759.9,373.9Z M771.0,366.7 L773.7,372.6 L767.0,373.9Z M552.2,373.5 L559.3,373.3 L555.6,380.1Z M582.4,372.2 L586.9,378.8 L577.9,378.6Z M611.8,372.7 L618.0,372.1 L614.3,380.0Z M618.0,372.1 L622.3,378.7 L614.3,380.0Z M618.0,372.1 L627.1,372.0 L622.3,378.7Z M641.3,373.6 L645.3,379.0 L636.8,378.3Z M648.9,373.6 L654.9,371.8 L651.4,379.8Z M693.2,372.6 L696.4,380.3 L688.9,379.8Z M700.3,372.6 L706.6,373.8 L703.3,380.3Z M706.6,373.8 L711.5,378.7 L703.3,380.3Z M706.6,373.8 L715.4,373.9 L711.5,378.7Z M715.4,373.9 L718.8,378.5 L711.5,378.7Z M715.4,373.9 L722.4,373.2 L718.8,378.5Z M722.4,373.2 L729.3,371.9 L726.8,378.8Z M744.3,373.8 L753.0,372.5 L748.8,378.7Z M773.7,372.6 L777.8,379.6 L770.1,379.9Z M549.3,378.7 L552.1,384.8 L545.2,385.3Z M563.5,379.9 L566.7,386.1 L559.0,386.5Z M570.2,378.6 L573.6,385.8 L566.7,386.1Z M622.3,378.7 L629.3,378.8 L627.4,386.5Z M636.8,378.3 L640.0,386.1 L632.8,385.2Z M645.3,379.0 L651.4,379.8 L649.0,385.4Z M651.4,379.8 L658.6,378.8 L655.8,386.1Z M658.6,378.8 L663.9,385.2 L655.8,386.1Z M696.4,380.3 L703.3,380.3 L699.2,384.7Z M718.8,378.5 L726.8,378.8 L721.4,385.3Z M763.3,379.4 L770.1,379.9 L767.9,386.3Z M763.3,379.4 L767.9,386.3 L759.2,384.6Z" fill="#fde048" fill-opacity="0.5"/>
<path d="M544.5 154.2L552.8 154.1M544.5 154.2L548.9 161.3M552.8 154.1L559.9 154.7M552.8 154.1L557.0 162.4M552.8 154.1L548.9 161.3M559.9 154.7L566.1 155.0M559.9 154.7L563.4 161.8M559.9 154.7L557.0 162.4M566.1 155.0L573.4 154.9M566.1 155.0L569.8 161.9M566.1 155.0L563.4 161.8M573.4 154.9L580.9 154.1M573.4 154.9L578.7 162.5M573.4 154.9L569.8 161.9M580.9 154.1L589.2 155.7M580.9 154.1L586.5 160.9M580.9 154.1L578.7 162.5M589.2 155.7L595.8 154.4M589.2 155.7L592.8 161.8M589.2 155.7L586.5 160.9M595.8 154.4L604.5 156.0M595.8 154.4L599.3 161.3M595.8 154.4L592.8 161.8M604.5 156.0L611.8 154.8M604.5 156.0L607.0 160.6M604.5 156.0L599.3 161.3M611.8 154.8L620.2 154.0M611.8 154.8L614.2 162.0M611.8 154.8L607.0 160.6M620.2 154.0L627.3 154.5M620.2 154.0L621.7 160.9M620.2 154.0L614.2 162.0M627.3 154.5L632.9 154.2M627.3 154.5L629.8 162.2M627.3 154.5L621.7 160.9M632.9 154.2L640.7 155.7M632.9 154.2L636.4 161.3M632.9 154.2L629.8 162.2M640.7 155.7L647.8 155.2M640.7 155.7L645.0 162.3M640.7 155.7L636.4 161.3M647.8 155.2L656.4 154.7M647.8 155.2L653.1 162.2M647.8 155.2L645.0 162.3M656.4 154.7L663.5 154.0M656.4 154.7L659.1 161.2M656.4 154.7L653.1 162.2M663.5 154.0L669.7 154.4M663.5 154.0L666.7 162.3M663.5 154.0L659.1 161.2M669.7 154.4L678.7 154.8M669.7 154.4L675.7 160.6M669.7 154.4L666.7 162.3M678.7 154.8L685.1 155.2M678.7 154.8L681.1 160.8M678.7 154.8L675.7 160.6M685.1 155.2L692.9 154.6M685.1 155.2L688.6 161.4M685.1 155.2L681.1 160.8M692.9 154.6L701.2 155.4M692.9 154.6L696.9 160.9M692.9 154.6L688.6 161.4M701.2 155.4L707.1 155.2M701.2 155.4L702.8 161.2M701.2 155.4L696.9 160.9M707.1 155.2L715.3 155.8M707.1 155.2L711.2 161.6M707.1 155.2L702.8 161.2M715.3 155.8L723.2 154.5M715.3 155.8L720.1 161.8M715.3 155.8L711.2 161.6M723.2 154.5L731.2 154.2M723.2 154.5L726.3 161.7M723.2 154.5L720.1 161.8M731.2 154.2L737.2 155.6M731.2 154.2L734.2 160.4M731.2 154.2L726.3 161.7M737.2 155.6L743.9 155.0M737.2 155.6L742.1 162.0M737.2 155.6L734.2 160.4M743.9 155.0L751.0 155.4M743.9 155.0L749.5 162.1M743.9 155.0L742.1 162.0M751.0 155.4L760.3 155.2M751.0 155.4L755.6 161.2M751.0 155.4L749.5 162.1M760.3 155.2L768.0 154.6M760.3 155.2L762.3 161.7M760.3 155.2L755.6 161.2M768.0 154.6L774.9 155.2M768.0 154.6L769.6 160.5M768.0 154.6L762.3 161.7M774.9 155.2L777.3 160.7M774.9 155.2L769.6 160.5M548.9 161.3L557.0 162.4M548.9 161.3L544.6 166.8M548.9 161.3L551.1 167.0M557.0 162.4L563.4 161.8M557.0 162.4L551.1 167.0M557.0 162.4L558.8 167.5M563.4 161.8L569.8 161.9M563.4 161.8L558.8 167.5M563.4 161.8L566.0 168.6M569.8 161.9L578.7 162.5M569.8 161.9L566.0 168.6M569.8 161.9L574.9 167.0M578.7 162.5L586.5 160.9M578.7 162.5L574.9 167.0M578.7 162.5L581.4 167.5M586.5 160.9L592.8 161.8M586.5 160.9L581.4 167.5M586.5 160.9L589.0 167.0M592.8 161.8L599.3 161.3M592.8 161.8L589.0 167.0M592.8 161.8L597.7 168.9M599.3 161.3L607.0 160.6M599.3 161.3L597.7 168.9M599.3 161.3L604.1 167.8M607.0 160.6L614.2 162.0M607.0 160.6L604.1 167.8M607.0 160.6L610.5 166.9M614.2 162.0L621.7 160.9M614.2 162.0L610.5 166.9M614.2 162.0L618.6 167.3M621.7 160.9L629.8 162.2M621.7 160.9L618.6 167.3M621.7 160.9L627.3 167.1M629.8 162.2L636.4 161.3M629.8 162.2L627.3 167.1M629.8 162.2L632.6 168.8M636.4 161.3L645.0 162.3M636.4 161.3L632.6 168.8M636.4 161.3L641.3 167.0M645.0 162.3L653.1 162.2M645.0 162.3L641.3 167.0M645.0 162.3L648.7 166.8M653.1 162.2L659.1 161.2M653.1 162.2L648.7 166.8M653.1 162.2L656.1 168.9M659.1 161.2L666.7 162.3M659.1 161.2L656.1 168.9M659.1 161.2L664.3 168.2M666.7 162.3L675.7 160.6M666.7 162.3L664.3 168.2M666.7 162.3L670.2 167.5M675.7 160.6L681.1 160.8M675.7 160.6L670.2 167.5M675.7 160.6L677.3 168.4M681.1 160.8L688.6 161.4M681.1 160.8L677.3 168.4M681.1 160.8L685.7 168.4M688.6 161.4L696.9 160.9M688.6 161.4L685.7 168.4M688.6 161.4L692.6 167.2M696.9 160.9L702.8 161.2M696.9 160.9L692.6 167.2M696.9 160.9L701.2 168.9M702.8 161.2L711.2 161.6M702.8 161.2L701.2 168.9M702.8 161.2L708.7 168.5M711.2 161.6L720.1 161.8M711.2 161.6L708.7 168.5M711.2 161.6L716.0 168.3M720.1 161.8L726.3 161.7M720.1 161.8L716.0 168.3M720.1 161.8L721.9 167.9M726.3 161.7L734.2 160.4M726.3 161.7L721.9 167.9M726.3 161.7L729.6 166.8M734.2 160.4L742.1 162.0M734.2 160.4L729.6 166.8M734.2 160.4L736.2 167.3M742.1 162.0L749.5 162.1M742.1 162.0L736.2 167.3M742.1 162.0L744.2 168.2M749.5 162.1L755.6 161.2M749.5 162.1L744.2 168.2M749.5 162.1L753.4 167.7M755.6 161.2L762.3 161.7M755.6 161.2L753.4 167.7M755.6 161.2L760.7 168.9M762.3 161.7L769.6 160.5M762.3 161.7L760.7 168.9M762.3 161.7L768.2 167.5M769.6 160.5L777.3 160.7M769.6 160.5L768.2 167.5M769.6 160.5L773.7 167.2M777.3 160.7L773.7 167.2M544.6 166.8L551.1 167.0M544.6 166.8L547.9 173.6M551.1 167.0L558.8 167.5M551.1 167.0L556.4 175.1M551.1 167.0L547.9 173.6M558.8 167.5L566.0 168.6M558.8 167.5L564.4 174.2M558.8 167.5L556.4 175.1M566.0 168.6L574.9 167.0M566.0 168.6L571.3 174.9M566.0 168.6L564.4 174.2M574.9 167.0L581.4 167.5M574.9 167.0L577.2 174.6M574.9 167.0L571.3 174.9M581.4 167.5L589.0 167.0M581.4 167.5L586.8 174.8M581.4 167.5L577.2 174.6M589.0 167.0L597.7 168.9M589.0 167.0L593.8 174.2M589.0 167.0L586.8 174.8M597.7 168.9L604.1 167.8M597.7 168.9L599.7 174.9M597.7 168.9L593.8 174.2M604.1 167.8L610.5 166.9M604.1 167.8L607.5 174.9M604.1 167.8L599.7 174.9M610.5 166.9L618.6 167.3M610.5 166.9L616.5 174.0M610.5 166.9L607.5 174.9M618.6 167.3L627.3 167.1M618.6 167.3L622.4 175.2M618.6 167.3L616.5 174.0M627.3 167.1L632.6 168.8M627.3 167.1L630.7 173.5M627.3 167.1L622.4 175.2M632.6 168.8L641.3 167.0M632.6 168.8L636.5 173.5M632.6 168.8L630.7 173.5M641.3 167.0L648.7 166.8M641.3 167.0L646.0 174.9M641.3 167.0L636.5 173.5M648.7 166.8L656.1 168.9M648.7 166.8L651.4 174.9M648.7 166.8L646.0 174.9M656.1 168.9L664.3 168.2M656.1 168.9L660.9 174.6M656.1 168.9L651.4 174.9M664.3 168.2L670.2 167.5M664.3 168.2L666.7 174.3M664.3 168.2L660.9 174.6M670.2 167.5L677.3 168.4M670.2 167.5L673.5 173.2M670.2 167.5L666.7 174.3M677.3 168.4L685.7 168.4M677.3 168.4L683.1 174.6M677.3 168.4L673.5 173.2M685.7 168.4L692.6 167.2M685.7 168.4L689.4 175.2M685.7 168.4L683.1 174.6M692.6 167.2L701.2 168.9M692.6 167.2L696.5 175.0M692.6 167.2L689.4 175.2M701.2 168.9L708.7 168.5M701.2 168.9L704.9 173.6M701.2 168.9L696.5 175.0M708.7 168.5L716.0 168.3M708.7 168.5L710.9 173.8M708.7 168.5L704.9 173.6M716.0 168.3L721.9 167.9M716.0 168.3L718.2 174.4M716.0 168.3L710.9 173.8M721.9 167.9L729.6 166.8M721.9 167.9L725.7 174.0M721.9 167.9L718.2 174.4M729.6 166.8L736.2 167.3M729.6 166.8L732.7 175.1M729.6 166.8L725.7 174.0M736.2 167.3L744.2 168.2M736.2 167.3L740.7 174.1M736.2 167.3L732.7 175.1M744.2 168.2L753.4 167.7M744.2 168.2L748.7 175.1M744.2 168.2L740.7 174.1M753.4 167.7L760.7 168.9M753.4 167.7L755.7 175.1M753.4 167.7L748.7 175.1M760.7 168.9L768.2 167.5M760.7 168.9L763.3 174.3M760.7 168.9L755.7 175.1M768.2 167.5L773.7 167.2M768.2 167.5L770.8 173.2M768.2 167.5L763.3 174.3M773.7 167.2L777.9 173.5M773.7 167.2L770.8 173.2M547.9 173.6L556.4 175.1M547.9 173.6L543.7 181.3M547.9 173.6L551.5 180.6M556.4 175.1L564.4 174.2M556.4 175.1L551.5 180.6M556.4 175.1L560.4 180.8M564.4 174.2L571.3 174.9M564.4 174.2L560.4 180.8M564.4 174.2L566.7 180.7M571.3 174.9L577.2 174.6M571.3 174.9L566.7 180.7M571.3 174.9L574.7 181.3M577.2 174.6L586.8 174.8M577.2 174.6L574.7 181.3M577.2 174.6L581.0 180.8M586.8 174.8L593.8 174.2M586.8 174.8L581.0 180.8M586.8 174.8L588.7 180.1M593.8 174.2L599.7 174.9M593.8 174.2L588.7 180.1M593.8 174.2L597.5 180.7M599.7 174.9L607.5 174.9M599.7 174.9L597.5 180.7M599.7 174.9L604.4 181.2M607.5 174.9L616.5 174.0M607.5 174.9L604.4 181.2M607.5 174.9L612.7 180.5M616.5 174.0L622.4 175.2M616.5 174.0L612.7 180.5M616.5 174.0L619.3 180.6M622.4 175.2L630.7 173.5M622.4 175.2L619.3 180.6M622.4 175.2L626.4 181.1M630.7 173.5L636.5 173.5M630.7 173.5L626.4 181.1M630.7 173.5L633.7 180.7M636.5 173.5L646.0 174.9M636.5 173.5L633.7 180.7M636.5 173.5L641.1 181.6M646.0 174.9L651.4 174.9M646.0 174.9L641.1 181.6M646.0 174.9L649.1 181.5M651.4 174.9L660.9 174.6M651.4 174.9L649.1 181.5M651.4 174.9L657.1 180.1M660.9 174.6L666.7 174.3M660.9 174.6L657.1 180.1M660.9 174.6L663.6 181.6M666.7 174.3L673.5 173.2M666.7 174.3L663.6 181.6M666.7 174.3L671.7 179.8M673.5 173.2L683.1 174.6M673.5 173.2L671.7 179.8M673.5 173.2L677.2 180.5M683.1 174.6L689.4 175.2M683.1 174.6L677.2 180.5M683.1 174.6L684.5 180.1M689.4 175.2L696.5 175.0M689.4 175.2L684.5 180.1M689.4 175.2L691.9 181.0M696.5 175.0L704.9 173.6M696.5 175.0L691.9 181.0M696.5 175.0L701.1 181.5M704.9 173.6L710.9 173.8M704.9 173.6L701.1 181.5M704.9 173.6L706.9 181.1M710.9 173.8L718.2 174.4M710.9 173.8L706.9 181.1M710.9 173.8L715.6 179.8M718.2 174.4L725.7 174.0M718.2 174.4L715.6 179.8M718.2 174.4L723.6 181.7M725.7 174.0L732.7 175.1M725.7 174.0L723.6 181.7M725.7 174.0L729.3 181.6M732.7 175.1L740.7 174.1M732.7 175.1L729.3 181.6M732.7 175.1L737.1 180.6M740.7 174.1L748.7 175.1M740.7 174.1L737.1 180.6M740.7 174.1L746.1 181.4M748.7 175.1L755.7 175.1M748.7 175.1L746.1 181.4M748.7 175.1L751.3 180.5M755.7 175.1L763.3 174.3M755.7 175.1L751.3 180.5M755.7 175.1L759.6 180.3M763.3 174.3L770.8 173.2M763.3 174.3L759.6 180.3M763.3 174.3L766.2 180.2M770.8 173.2L777.9 173.5M770.8 173.2L766.2 180.2M770.8 173.2L775.0 179.6M777.9 173.5L775.0 179.6M543.7 181.3L551.5 180.6M543.7 181.3L548.8 186.9M551.5 180.6L560.4 180.8M551.5 180.6L554.8 186.7M551.5 180.6L548.8 186.9M560.4 180.8L566.7 180.7M560.4 180.8L563.8 187.1M560.4 180.8L554.8 186.7M566.7 180.7L574.7 181.3M566.7 180.7L569.8 188.1M566.7 180.7L563.8 187.1M574.7 181.3L581.0 180.8M574.7 181.3L579.0 188.1M574.7 181.3L569.8 188.1M581.0 180.8L588.7 180.1M581.0 180.8L584.7 186.5M581.0 180.8L579.0 188.1M588.7 180.1L597.5 180.7M588.7 180.1L591.9 187.7M588.7 180.1L584.7 186.5M597.5 180.7L604.4 181.2M597.5 180.7L599.9 186.2M597.5 180.7L591.9 187.7M604.4 181.2L612.7 180.5M604.4 181.2L607.7 187.9M604.4 181.2L599.9 186.2M612.7 180.5L619.3 180.6M612.7 180.5L616.1 186.5M612.7 180.5L607.7 187.9M619.3 180.6L626.4 181.1M619.3 180.6L621.8 188.0M619.3 180.6L616.1 186.5M626.4 181.1L633.7 180.7M626.4 181.1L630.3 187.5M626.4 181.1L621.8 188.0M633.7 180.7L641.1 181.6M633.7 180.7L636.4 186.1M633.7 180.7L630.3 187.5M641.1 181.6L649.1 181.5M641.1 181.6L645.4 186.9M641.1 181.6L636.4 186.1M649.1 181.5L657.1 180.1M649.1 181.5L651.2 188.0M649.1 181.5L645.4 186.9M657.1 180.1L663.6 181.6M657.1 180.1L660.0 187.7M657.1 180.1L651.2 188.0M663.6 181.6L671.7 179.8M663.6 181.6L666.0 187.8M663.6 181.6L660.0 187.7M671.7 179.8L677.2 180.5M671.7 179.8L673.4 187.8M671.7 179.8L666.0 187.8M677.2 180.5L684.5 180.1M677.2 180.5L681.8 186.7M677.2 180.5L673.4 187.8M684.5 180.1L691.9 181.0M684.5 180.1L689.4 188.0M684.5 180.1L681.8 186.7M691.9 181.0L701.1 181.5M691.9 181.0L696.1 186.2M691.9 181.0L689.4 188.0M701.1 181.5L706.9 181.1M701.1 181.5L704.2 186.5M701.1 181.5L696.1 186.2M706.9 181.1L715.6 179.8M706.9 181.1L710.5 186.3M706.9 181.1L704.2 186.5M715.6 179.8L723.6 181.7M715.6 179.8L717.7 186.4M715.6 179.8L710.5 186.3M723.6 181.7L729.3 181.6M723.6 181.7L725.8 186.6M723.6 181.7L717.7 186.4M729.3 181.6L737.1 180.6M729.3 181.6L734.4 186.6M729.3 181.6L725.8 186.6M737.1 180.6L746.1 181.4M737.1 180.6L741.1 186.3M737.1 180.6L734.4 186.6M746.1 181.4L751.3 180.5M746.1 181.4L748.1 186.0M746.1 181.4L741.1 186.3M751.3 180.5L759.6 180.3M751.3 180.5L755.3 186.0M751.3 180.5L748.1 186.0M759.6 180.3L766.2 180.2M759.6 180.3L763.9 187.2M759.6 180.3L755.3 186.0M766.2 180.2L775.0 179.6M766.2 180.2L769.9 187.0M766.2 180.2L763.9 187.2M775.0 179.6L779.2 186.2M775.0 179.6L769.9 187.0M548.8 186.9L554.8 186.7M548.8 186.9L545.8 193.3M548.8 186.9L552.4 194.2M554.8 186.7L563.8 187.1M554.8 186.7L552.4 194.2M554.8 186.7L559.5 193.5M563.8 187.1L569.8 188.1M563.8 187.1L559.5 193.5M563.8 187.1L567.7 194.5M569.8 188.1L579.0 188.1M569.8 188.1L567.7 194.5M569.8 188.1L574.2 194.2M579.0 188.1L584.7 186.5M579.0 188.1L574.2 194.2M579.0 188.1L582.5 193.8M584.7 186.5L591.9 187.7M584.7 186.5L582.5 193.8M584.7 186.5L589.2 193.1M591.9 187.7L599.9 186.2M591.9 187.7L589.2 193.1M591.9 187.7L595.6 192.6M599.9 186.2L607.7 187.9M599.9 186.2L595.6 192.6M599.9 186.2L603.1 194.0M607.7 187.9L616.1 186.5M607.7 187.9L603.1 194.0M607.7 187.9L611.0 192.7M616.1 186.5L621.8 188.0M616.1 186.5L611.0 192.7M616.1 186.5L617.9 194.2M621.8 188.0L630.3 187.5M621.8 188.0L617.9 194.2M621.8 188.0L627.4 193.8M630.3 187.5L636.4 186.1M630.3 187.5L627.4 193.8M630.3 187.5L633.2 192.9M636.4 186.1L645.4 186.9M636.4 186.1L633.2 192.9M636.4 186.1L640.7 193.4M645.4 186.9L651.2 188.0M645.4 186.9L640.7 193.4M645.4 186.9L647.7 193.3M651.2 188.0L660.0 187.7M651.2 188.0L647.7 193.3M651.2 188.0L655.4 194.5M660.0 187.7L666.0 187.8M660.0 187.7L655.4 194.5M660.0 187.7L664.6 193.6M666.0 187.8L673.4 187.8M666.0 187.8L664.6 193.6M666.0 187.8L670.1 194.5M673.4 187.8L681.8 186.7M673.4 187.8L670.1 194.5M673.4 187.8L677.7 193.1M681.8 186.7L689.4 188.0M681.8 186.7L677.7 193.1M681.8 186.7L684.3 193.2M689.4 188.0L696.1 186.2M689.4 188.0L684.3 193.2M689.4 188.0L692.9 193.5M696.1 186.2L704.2 186.5M696.1 186.2L692.9 193.5M696.1 186.2L699.6 193.5M704.2 186.5L710.5 186.3M704.2 186.5L699.6 193.5M704.2 186.5L706.5 192.9M710.5 186.3L717.7 186.4M710.5 186.3L706.5 192.9M710.5 186.3L714.1 193.2M717.7 186.4L725.8 186.6M717.7 186.4L714.1 193.2M717.7 186.4L721.4 192.4M725.8 186.6L734.4 186.6M725.8 186.6L721.4 192.4M725.8 186.6L729.5 192.9M734.4 186.6L741.1 186.3M734.4 186.6L729.5 192.9M734.4 186.6L737.6 193.5M741.1 186.3L748.1 186.0M741.1 186.3L737.6 193.5M741.1 186.3L745.5 193.8M748.1 186.0L755.3 186.0M748.1 186.0L745.5 193.8M748.1 186.0L752.8 194.3M755.3 186.0L763.9 187.2M755.3 186.0L752.8 194.3M755.3 186.0L759.3 193.1M763.9 187.2L769.9 187.0M763.9 187.2L759.3 193.1M763.9 187.2L768.3 192.7M769.9 187.0L779.2 186.2M769.9 187.0L768.3 192.7M769.9 187.0L775.0 193.8M779.2 186.2L775.0 193.8M545.8 193.3L552.4 194.2M545.8 193.3L547.5 200.6M552.4 194.2L559.5 193.5M552.4 194.2L557.1 200.1M552.4 194.2L547.5 200.6M559.5 193.5L567.7 194.5M559.5 193.5L564.1 200.5M559.5 193.5L557.1 200.1M567.7 194.5L574.2 194.2M567.7 194.5L570.0 199.9M567.7 194.5L564.1 200.5M574.2 194.2L582.5 193.8M574.2 194.2L578.3 200.6M574.2 194.2L570.0 199.9M582.5 193.8L589.2 193.1M582.5 193.8L586.5 200.6M582.5 193.8L578.3 200.6M589.2 193.1L595.6 192.6M589.2 193.1L593.3 200.7M589.2 193.1L586.5 200.6M595.6 192.6L603.1 194.0M595.6 192.6L601.0 200.3M595.6 192.6L593.3 200.7M603.1 194.0L611.0 192.7M603.1 194.0L607.2 198.8M603.1 194.0L601.0 200.3M611.0 192.7L617.9 194.2M611.0 192.7L614.3 199.6M611.0 192.7L607.2 198.8M617.9 194.2L627.4 193.8M617.9 194.2L621.7 200.6M617.9 194.2L614.3 199.6M627.4 193.8L633.2 192.9M627.4 193.8L630.3 200.1M627.4 193.8L621.7 200.6M633.2 192.9L640.7 193.4M633.2 192.9L637.8 200.3M633.2 192.9L630.3 200.1M640.7 193.4L647.7 193.3M640.7 193.4L644.9 198.8M640.7 193.4L637.8 200.3M647.7 193.3L655.4 194.5M647.7 193.3L653.1 200.4M647.7 193.3L644.9 198.8M655.4 194.5L664.6 193.6M655.4 194.5L659.7 199.9M655.4 194.5L653.1 200.4M664.6 193.6L670.1 194.5M664.6 193.6L667.5 198.9M664.6 193.6L659.7 199.9M670.1 194.5L677.7 193.1M670.1 194.5L675.1 199.3M670.1 194.5L667.5 198.9M677.7 193.1L684.3 193.2M677.7 193.1L680.8 199.3M677.7 193.1L675.1 199.3M684.3 193.2L692.9 193.5M684.3 193.2L689.9 199.2M684.3 193.2L680.8 199.3M692.9 193.5L699.6 193.5M692.9 193.5L697.3 200.9M692.9 193.5L689.9 199.2M699.6 193.5L706.5 192.9M699.6 193.5L704.1 199.6M699.6 193.5L697.3 200.9M706.5 192.9L714.1 193.2M706.5 192.9L711.4 200.3M706.5 192.9L704.1 199.6M714.1 193.2L721.4 192.4M714.1 193.2L719.6 200.1M714.1 193.2L711.4 200.3M721.4 192.4L729.5 192.9M721.4 192.4L726.7 198.9M721.4 192.4L719.6 200.1M729.5 192.9L737.6 193.5M729.5 192.9L732.8 199.3M729.5 192.9L726.7 198.9M737.6 193.5L745.5 193.8M737.6 193.5L741.7 199.4M737.6 193.5L732.8 199.3M745.5 193.8L752.8 194.3M745.5 193.8L748.7 198.8M745.5 193.8L741.7 199.4M752.8 194.3L759.3 193.1M752.8 194.3L754.8 199.4M752.8 194.3L748.7 198.8M759.3 193.1L768.3 192.7M759.3 193.1L763.7 200.3M759.3 193.1L754.8 199.4M768.3 192.7L775.0 193.8M768.3 192.7L771.2 199.4M768.3 192.7L763.7 200.3M775.0 193.8L778.1 199.8M775.0 193.8L771.2 199.4M547.5 200.6L557.1 200.1M547.5 200.6L544.9 205.4M547.5 200.6L553.4 205.6M557.1 200.1L564.1 200.5M557.1 200.1L553.4 205.6M557.1 200.1L561.0 207.2M564.1 200.5L570.0 199.9M564.1 200.5L561.0 207.2M564.1 200.5L565.9 206.2M570.0 199.9L578.3 200.6M570.0 199.9L565.9 206.2M570.0 199.9L575.4 207.3M578.3 200.6L586.5 200.6M578.3 200.6L575.4 207.3M578.3 200.6L581.9 205.8M586.5 200.6L593.3 200.7M586.5 200.6L581.9 205.8M586.5 200.6L588.6 207.2M593.3 200.7L601.0 200.3M593.3 200.7L588.6 207.2M593.3 200.7L596.0 206.4M601.0 200.3L607.2 198.8M601.0 200.3L596.0 206.4M601.0 200.3L603.3 206.3M607.2 198.8L614.3 199.6M607.2 198.8L603.3 206.3M607.2 198.8L612.8 205.5M614.3 199.6L621.7 200.6M614.3 199.6L612.8 205.5M614.3 199.6L619.8 206.3M621.7 200.6L630.3 200.1M621.7 200.6L619.8 206.3M621.7 200.6L627.4 206.7M630.3 200.1L637.8 200.3M630.3 200.1L627.4 206.7M630.3 200.1L633.1 207.1M637.8 200.3L644.9 198.8M637.8 200.3L633.1 207.1M637.8 200.3L641.2 205.2M644.9 198.8L653.1 200.4M644.9 198.8L641.2 205.2M644.9 198.8L647.3 206.3M653.1 200.4L659.7 199.9M653.1 200.4L647.3 206.3M653.1 200.4L655.9 205.8M659.7 199.9L667.5 198.9M659.7 199.9L655.9 205.8M659.7 199.9L662.5 205.9M667.5 198.9L675.1 199.3M667.5 198.9L662.5 205.9M667.5 198.9L670.3 207.0M675.1 199.3L680.8 199.3M675.1 199.3L670.3 207.0M675.1 199.3L676.9 206.8M680.8 199.3L689.9 199.2M680.8 199.3L676.9 206.8M680.8 199.3L686.5 205.4M689.9 199.2L697.3 200.9M689.9 199.2L686.5 205.4M689.9 199.2L694.1 206.7M697.3 200.9L704.1 199.6M697.3 200.9L694.1 206.7M697.3 200.9L701.4 205.8M704.1 199.6L711.4 200.3M704.1 199.6L701.4 205.8M704.1 199.6L707.5 206.0M711.4 200.3L719.6 200.1M711.4 200.3L707.5 206.0M711.4 200.3L716.5 206.5M719.6 200.1L726.7 198.9M719.6 200.1L716.5 206.5M719.6 200.1L722.2 206.1M726.7 198.9L732.8 199.3M726.7 198.9L722.2 206.1M726.7 198.9L729.4 205.3M732.8 199.3L741.7 199.4M732.8 199.3L729.4 205.3M732.8 199.3L736.4 207.0M741.7 199.4L748.7 198.8M741.7 199.4L736.4 207.0M741.7 199.4L744.2 207.2M748.7 198.8L754.8 199.4M748.7 198.8L744.2 207.2M748.7 198.8L751.5 205.8M754.8 199.4L763.7 200.3M754.8 199.4L751.5 205.8M754.8 199.4L759.6 205.6M763.7 200.3L771.2 199.4M763.7 200.3L759.6 205.6M763.7 200.3L766.7 207.3M771.2 199.4L778.1 199.8M771.2 199.4L766.7 207.3M771.2 199.4L775.4 207.0M778.1 199.8L775.4 207.0M544.9 205.4L553.4 205.6M544.9 205.4L549.0 213.6M553.4 205.6L561.0 207.2M553.4 205.6L557.2 212.8M553.4 205.6L549.0 213.6M561.0 207.2L565.9 206.2M561.0 207.2L564.1 211.7M561.0 207.2L557.2 212.8M565.9 206.2L575.4 207.3M565.9 206.2L571.5 212.6M565.9 206.2L564.1 211.7M575.4 207.3L581.9 205.8M575.4 207.3L579.0 213.0M575.4 207.3L571.5 212.6M581.9 205.8L588.6 207.2M581.9 205.8L585.1 211.7M581.9 205.8L579.0 213.0M588.6 207.2L596.0 206.4M588.6 207.2L594.2 211.9M588.6 207.2L585.1 211.7M596.0 206.4L603.3 206.3M596.0 206.4L600.4 212.3M596.0 206.4L594.2 211.9M603.3 206.3L612.8 205.5M603.3 206.3L607.4 213.2M603.3 206.3L600.4 212.3M612.8 205.5L619.8 206.3M612.8 205.5L616.5 212.1M612.8 205.5L607.4 213.2M619.8 206.3L627.4 206.7M619.8 206.3L623.1 212.2M619.8 206.3L616.5 212.1M627.4 206.7L633.1 207.1M627.4 206.7L630.2 212.4M627.4 206.7L623.1 212.2M633.1 207.1L641.2 205.2M633.1 207.1L636.6 211.9M633.1 207.1L630.2 212.4M641.2 205.2L647.3 206.3M641.2 205.2L644.1 213.6M641.2 205.2L636.6 211.9M647.3 206.3L655.9 205.8M647.3 206.3L652.3 212.1M647.3 206.3L644.1 213.6M655.9 205.8L662.5 205.9M655.9 205.8L660.8 213.8M655.9 205.8L652.3 212.1M662.5 205.9L670.3 207.0M662.5 205.9L667.0 211.9M662.5 205.9L660.8 213.8M670.3 207.0L676.9 206.8M670.3 207.0L673.7 211.8M670.3 207.0L667.0 211.9M676.9 206.8L686.5 205.4M676.9 206.8L681.5 211.8M676.9 206.8L673.7 211.8M686.5 205.4L694.1 206.7M686.5 205.4L688.6 212.1M686.5 205.4L681.5 211.8M694.1 206.7L701.4 205.8M694.1 206.7L696.9 213.5M694.1 206.7L688.6 212.1M701.4 205.8L707.5 206.0M701.4 205.8L704.7 212.5M701.4 205.8L696.9 213.5M707.5 206.0L716.5 206.5M707.5 206.0L711.3 212.7M707.5 206.0L704.7 212.5M716.5 206.5L722.2 206.1M716.5 206.5L718.6 212.3M716.5 206.5L711.3 212.7M722.2 206.1L729.4 205.3M722.2 206.1L725.2 212.2M722.2 206.1L718.6 212.3M729.4 205.3L736.4 207.0M729.4 205.3L734.9 211.9M729.4 205.3L725.2 212.2M736.4 207.0L744.2 207.2M736.4 207.0L741.1 213.0M736.4 207.0L734.9 211.9M744.2 207.2L751.5 205.8M744.2 207.2L749.4 212.1M744.2 207.2L741.1 213.0M751.5 205.8L759.6 205.6M751.5 205.8L755.3 212.1M751.5 205.8L749.4 212.1M759.6 205.6L766.7 207.3M759.6 205.6L763.0 212.6M759.6 205.6L755.3 212.1M766.7 207.3L775.4 207.0M766.7 207.3L771.9 213.4M766.7 207.3L763.0 212.6M775.4 207.0L779.1 211.6M775.4 207.0L771.9 213.4M549.0 213.6L557.2 212.8M549.0 213.6L543.8 219.5M549.0 213.6L553.4 219.0M557.2 212.8L564.1 211.7M557.2 212.8L553.4 219.0M557.2 212.8L560.0 218.0M564.1 211.7L571.5 212.6M564.1 211.7L560.0 218.0M564.1 211.7L566.9 220.0M571.5 212.6L579.0 213.0M571.5 212.6L566.9 220.0M571.5 212.6L575.4 219.9M579.0 213.0L585.1 211.7M579.0 213.0L575.4 219.9M579.0 213.0L583.2 218.5M585.1 211.7L594.2 211.9M585.1 211.7L583.2 218.5M585.1 211.7L588.4 218.3M594.2 211.9L600.4 212.3M594.2 211.9L588.4 218.3M594.2 211.9L596.9 219.5M600.4 212.3L607.4 213.2M600.4 212.3L596.9 219.5M600.4 212.3L605.3 219.6M607.4 213.2L616.5 212.1M607.4 213.2L605.3 219.6M607.4 213.2L612.0 219.7M616.5 212.1L623.1 212.2M616.5 212.1L612.0 219.7M616.5 212.1L618.9 219.2M623.1 212.2L630.2 212.4M623.1 212.2L618.9 219.2M623.1 212.2L625.2 219.7M630.2 212.4L636.6 211.9M630.2 212.4L625.2 219.7M630.2 212.4L633.1 220.0M636.6 211.9L644.1 213.6M636.6 211.9L633.1 220.0M636.6 211.9L641.6 218.7M644.1 213.6L652.3 212.1M644.1 213.6L641.6 218.7M644.1 213.6L647.6 218.5M652.3 212.1L660.8 213.8M652.3 212.1L647.6 218.5M652.3 212.1L656.4 219.5M660.8 213.8L667.0 211.9M660.8 213.8L656.4 219.5M660.8 213.8L662.4 218.1M667.0 211.9L673.7 211.8M667.0 211.9L662.4 218.1M667.0 211.9L670.9 219.3M673.7 211.8L681.5 211.8M673.7 211.8L670.9 219.3M673.7 211.8L677.9 218.5M681.5 211.8L688.6 212.1M681.5 211.8L677.9 218.5M681.5 211.8L685.9 218.0M688.6 212.1L696.9 213.5M688.6 212.1L685.9 218.0M688.6 212.1L692.5 219.0M696.9 213.5L704.7 212.5M696.9 213.5L692.5 219.0M696.9 213.5L701.6 219.4M704.7 212.5L711.3 212.7M704.7 212.5L701.6 219.4M704.7 212.5L708.8 219.0M711.3 212.7L718.6 212.3M711.3 212.7L708.8 219.0M711.3 212.7L714.5 218.5M718.6 212.3L725.2 212.2M718.6 212.3L714.5 218.5M718.6 212.3L723.8 219.5M725.2 212.2L734.9 211.9M725.2 212.2L723.8 219.5M725.2 212.2L729.5 218.0M734.9 211.9L741.1 213.0M734.9 211.9L729.5 218.0M734.9 211.9L737.4 219.5M741.1 213.0L749.4 212.1M741.1 213.0L737.4 219.5M741.1 213.0L744.6 218.6M749.4 212.1L755.3 212.1M749.4 212.1L744.6 218.6M749.4 212.1L752.6 220.0M755.3 212.1L763.0 212.6M755.3 212.1L752.6 220.0M755.3 212.1L758.9 218.1M763.0 212.6L771.9 213.4M763.0 212.6L758.9 218.1M763.0 212.6L766.6 218.9M771.9 213.4L779.1 211.6M771.9 213.4L766.6 218.9M771.9 213.4L774.9 218.4M779.1 211.6L774.9 218.4M543.8 219.5L553.4 219.0M543.8 219.5L549.5 226.0M553.4 219.0L560.0 218.0M553.4 219.0L556.1 224.8M553.4 219.0L549.5 226.0M560.0 218.0L566.9 220.0M560.0 218.0L564.7 225.1M560.0 218.0L556.1 224.8M566.9 220.0L575.4 219.9M566.9 220.0L571.7 224.9M566.9 220.0L564.7 225.1M575.4 219.9L583.2 218.5M575.4 219.9L577.6 226.1M575.4 219.9L571.7 224.9M583.2 218.5L588.4 218.3M583.2 218.5L585.2 226.5M583.2 218.5L577.6 226.1M588.4 218.3L596.9 219.5M588.4 218.3L593.1 224.8M588.4 218.3L585.2 226.5M596.9 219.5L605.3 219.6M596.9 219.5L599.8 225.3M596.9 219.5L593.1 224.8M605.3 219.6L612.0 219.7M605.3 219.6L608.3 226.5M605.3 219.6L599.8 225.3M612.0 219.7L618.9 219.2M612.0 219.7L614.4 225.3M612.0 219.7L608.3 226.5M618.9 219.2L625.2 219.7M618.9 219.2L622.0 226.5M618.9 219.2L614.4 225.3M625.2 219.7L633.1 220.0M625.2 219.7L629.2 224.5M625.2 219.7L622.0 226.5M633.1 220.0L641.6 218.7M633.1 220.0L636.4 225.3M633.1 220.0L629.2 224.5M641.6 218.7L647.6 218.5M641.6 218.7L645.9 226.3M641.6 218.7L636.4 225.3M647.6 218.5L656.4 219.5M647.6 218.5L652.9 226.6M647.6 218.5L645.9 226.3M656.4 219.5L662.4 218.1M656.4 219.5L660.8 225.1M656.4 219.5L652.9 226.6M662.4 218.1L670.9 219.3M662.4 218.1L666.3 226.5M662.4 218.1L660.8 225.1M670.9 219.3L677.9 218.5M670.9 219.3L675.1 224.5M670.9 219.3L666.3 226.5M677.9 218.5L685.9 218.0M677.9 218.5L682.3 225.2M677.9 218.5L675.1 224.5M685.9 218.0L692.5 219.0M685.9 218.0L689.0 225.1M685.9 218.0L682.3 225.2M692.5 219.0L701.6 219.4M692.5 219.0L695.8 224.4M692.5 219.0L689.0 225.1M701.6 219.4L708.8 219.0M701.6 219.4L703.5 225.2M701.6 219.4L695.8 224.4M708.8 219.0L714.5 218.5M708.8 219.0L712.7 224.7M708.8 219.0L703.5 225.2M714.5 218.5L723.8 219.5M714.5 218.5L720.1 224.9M714.5 218.5L712.7 224.7M723.8 219.5L729.5 218.0M723.8 219.5L725.9 226.2M723.8 219.5L720.1 224.9M729.5 218.0L737.4 219.5M729.5 218.0L734.5 225.3M729.5 218.0L725.9 226.2M737.4 219.5L744.6 218.6M737.4 219.5L739.9 225.4M737.4 219.5L734.5 225.3M744.6 218.6L752.6 220.0M744.6 218.6L748.2 226.4M744.6 218.6L739.9 225.4M752.6 220.0L758.9 218.1M752.6 220.0L755.1 225.2M752.6 220.0L748.2 226.4M758.9 218.1L766.6 218.9M758.9 218.1L764.3 224.5M758.9 218.1L755.1 225.2M766.6 218.9L774.9 218.4M766.6 218.9L770.5 226.2M766.6 218.9L764.3 224.5M774.9 218.4L778.8 224.5M774.9 218.4L770.5 226.2M549.5 226.0L556.1 224.8M549.5 226.0L543.8 230.9M549.5 226.0L553.5 231.4M556.1 224.8L564.7 225.1M556.1 224.8L553.5 231.4M556.1 224.8L560.4 232.8M564.7 225.1L571.7 224.9M564.7 225.1L560.4 232.8M564.7 225.1L566.8 231.4M571.7 224.9L577.6 226.1M571.7 224.9L566.8 231.4M571.7 224.9L575.8 232.2M577.6 226.1L585.2 226.5M577.6 226.1L575.8 232.2M577.6 226.1L581.4 232.4M585.2 226.5L593.1 224.8M585.2 226.5L581.4 232.4M585.2 226.5L588.9 231.4M593.1 224.8L599.8 225.3M593.1 224.8L588.9 231.4M593.1 224.8L595.5 232.5M599.8 225.3L608.3 226.5M599.8 225.3L595.5 232.5M599.8 225.3L605.3 232.2M608.3 226.5L614.4 225.3M608.3 226.5L605.3 232.2M608.3 226.5L612.8 230.9M614.4 225.3L622.0 226.5M614.4 225.3L612.8 230.9M614.4 225.3L618.3 231.8M622.0 226.5L629.2 224.5M622.0 226.5L618.3 231.8M622.0 226.5L627.6 232.9M629.2 224.5L636.4 225.3M629.2 224.5L627.6 232.9M629.2 224.5L633.5 231.4M636.4 225.3L645.9 226.3M636.4 225.3L633.5 231.4M636.4 225.3L641.0 231.9M645.9 226.3L652.9 226.6M645.9 226.3L641.0 231.9M645.9 226.3L649.7 231.2M652.9 226.6L660.8 225.1M652.9 226.6L649.7 231.2M652.9 226.6L656.8 232.4M660.8 225.1L666.3 226.5M660.8 225.1L656.8 232.4M660.8 225.1L664.2 232.5M666.3 226.5L675.1 224.5M666.3 226.5L664.2 232.5M666.3 226.5L671.1 231.5M675.1 224.5L682.3 225.2M675.1 224.5L671.1 231.5M675.1 224.5L677.7 231.6M682.3 225.2L689.0 225.1M682.3 225.2L677.7 231.6M682.3 225.2L686.3 231.0M689.0 225.1L695.8 224.4M689.0 225.1L686.3 231.0M689.0 225.1L692.2 232.5M695.8 224.4L703.5 225.2M695.8 224.4L692.2 232.5M695.8 224.4L699.7 230.9M703.5 225.2L712.7 224.7M703.5 225.2L699.7 230.9M703.5 225.2L706.6 232.0M712.7 224.7L720.1 224.9M712.7 224.7L706.6 232.0M712.7 224.7L714.7 233.0M720.1 224.9L725.9 226.2M720.1 224.9L714.7 233.0M720.1 224.9L723.6 233.0M725.9 226.2L734.5 225.3M725.9 226.2L723.6 233.0M725.9 226.2L729.4 231.0M734.5 225.3L739.9 225.4M734.5 225.3L729.4 231.0M734.5 225.3L736.4 231.9M739.9 225.4L748.2 226.4M739.9 225.4L736.4 231.9M739.9 225.4L745.3 231.8M748.2 226.4L755.1 225.2M748.2 226.4L745.3 231.8M748.2 226.4L751.5 231.7M755.1 225.2L764.3 224.5M755.1 225.2L751.5 231.7M755.1 225.2L759.9 232.3M764.3 224.5L770.5 226.2M764.3 224.5L759.9 232.3M764.3 224.5L767.6 232.7M770.5 226.2L778.8 224.5M770.5 226.2L767.6 232.7M770.5 226.2L774.8 231.1M778.8 224.5L774.8 231.1M543.8 230.9L553.5 231.4M543.8 230.9L549.6 237.9M553.5 231.4L560.4 232.8M553.5 231.4L556.3 238.0M553.5 231.4L549.6 237.9M560.4 232.8L566.8 231.4M560.4 232.8L564.1 237.6M560.4 232.8L556.3 238.0M566.8 231.4L575.8 232.2M566.8 231.4L570.2 237.8M566.8 231.4L564.1 237.6M575.8 232.2L581.4 232.4M575.8 232.2L577.4 239.2M575.8 232.2L570.2 237.8M581.4 232.4L588.9 231.4M581.4 232.4L585.9 237.9M581.4 232.4L577.4 239.2M588.9 231.4L595.5 232.5M588.9 231.4L592.8 239.4M588.9 231.4L585.9 237.9M595.5 232.5L605.3 232.2M595.5 232.5L600.5 237.7M595.5 232.5L592.8 239.4M605.3 232.2L612.8 230.9M605.3 232.2L608.7 238.6M605.3 232.2L600.5 237.7M612.8 230.9L618.3 231.8M612.8 230.9L616.6 237.4M612.8 230.9L608.7 238.6M618.3 231.8L627.6 232.9M618.3 231.8L622.6 239.0M618.3 231.8L616.6 237.4M627.6 232.9L633.5 231.4M627.6 232.9L631.0 239.2M627.6 232.9L622.6 239.0M633.5 231.4L641.0 231.9M633.5 231.4L636.3 237.9M633.5 231.4L631.0 239.2M641.0 231.9L649.7 231.2M641.0 231.9L643.9 237.6M641.0 231.9L636.3 237.9M649.7 231.2L656.8 232.4M649.7 231.2L653.5 238.5M649.7 231.2L643.9 237.6M656.8 232.4L664.2 232.5M656.8 232.4L660.8 238.0M656.8 232.4L653.5 238.5M664.2 232.5L671.1 231.5M664.2 232.5L668.1 238.2M664.2 232.5L660.8 238.0M671.1 231.5L677.7 231.6M671.1 231.5L673.9 238.9M671.1 231.5L668.1 238.2M677.7 231.6L686.3 231.0M677.7 231.6L683.1 237.4M677.7 231.6L673.9 238.9M686.3 231.0L692.2 232.5M686.3 231.0L689.5 238.6M686.3 231.0L683.1 237.4M692.2 232.5L699.7 230.9M692.2 232.5L696.0 238.0M692.2 232.5L689.5 238.6M699.7 230.9L706.6 232.0M699.7 230.9L703.2 237.7M699.7 230.9L696.0 238.0M706.6 232.0L714.7 233.0M706.6 232.0L710.9 238.5M706.6 232.0L703.2 237.7M714.7 233.0L723.6 233.0M714.7 233.0L719.3 237.7M714.7 233.0L710.9 238.5M723.6 233.0L729.4 231.0M723.6 233.0L725.0 237.9M723.6 233.0L719.3 237.7M729.4 231.0L736.4 231.9M729.4 231.0L734.2 237.6M729.4 231.0L725.0 237.9M736.4 231.9L745.3 231.8M736.4 231.9L740.6 237.7M736.4 231.9L734.2 237.6M745.3 231.8L751.5 231.7M745.3 231.8L749.3 238.4M745.3 231.8L740.6 237.7M751.5 231.7L759.9 232.3M751.5 231.7L754.8 237.4M751.5 231.7L749.3 238.4M759.9 232.3L767.6 232.7M759.9 232.3L763.0 238.4M759.9 232.3L754.8 237.4M767.6 232.7L774.8 231.1M767.6 232.7L771.1 237.4M767.6 232.7L763.0 238.4M774.8 231.1L777.2 238.7M774.8 231.1L771.1 237.4M549.6 237.9L556.3 238.0M549.6 237.9L544.8 244.2M549.6 237.9L551.9 245.7M556.3 238.0L564.1 237.6M556.3 238.0L551.9 245.7M556.3 238.0L559.3 244.9M564.1 237.6L570.2 237.8M564.1 237.6L559.3 244.9M564.1 237.6L566.8 244.5M570.2 237.8L577.4 239.2M570.2 237.8L566.8 244.5M570.2 237.8L575.5 245.8M577.4 239.2L585.9 237.9M577.4 239.2L575.5 245.8M577.4 239.2L581.6 244.1M585.9 237.9L592.8 239.4M585.9 237.9L581.6 244.1M585.9 237.9L590.0 244.1M592.8 239.4L600.5 237.7M592.8 239.4L590.0 244.1M592.8 239.4L595.5 245.6M600.5 237.7L608.7 238.6M600.5 237.7L595.5 245.6M600.5 237.7L604.0 245.4M608.7 238.6L616.6 237.4M608.7 238.6L604.0 245.4M608.7 238.6L611.4 245.6M616.6 237.4L622.6 239.0M616.6 237.4L611.4 245.6M616.6 237.4L618.9 244.0M622.6 239.0L631.0 239.2M622.6 239.0L618.9 244.0M622.6 239.0L625.1 244.8M631.0 239.2L636.3 237.9M631.0 239.2L625.1 244.8M631.0 239.2L634.2 245.6M636.3 237.9L643.9 237.6M636.3 237.9L634.2 245.6M636.3 237.9L640.1 245.0M643.9 237.6L653.5 238.5M643.9 237.6L640.1 245.0M643.9 237.6L648.3 244.7M653.5 238.5L660.8 238.0M653.5 238.5L648.3 244.7M653.5 238.5L655.1 244.2M660.8 238.0L668.1 238.2M660.8 238.0L655.1 244.2M660.8 238.0L663.5 245.7M668.1 238.2L673.9 238.9M668.1 238.2L663.5 245.7M668.1 238.2L669.8 244.7M673.9 238.9L683.1 237.4M673.9 238.9L669.8 244.7M673.9 238.9L679.0 245.7M683.1 237.4L689.5 238.6M683.1 237.4L679.0 245.7M683.1 237.4L684.8 243.9M689.5 238.6L696.0 238.0M689.5 238.6L684.8 243.9M689.5 238.6L694.2 245.8M696.0 238.0L703.2 237.7M696.0 238.0L694.2 245.8M696.0 238.0L700.4 243.7M703.2 237.7L710.9 238.5M703.2 237.7L700.4 243.7M703.2 237.7L708.9 244.5M710.9 238.5L719.3 237.7M710.9 238.5L708.9 244.5M710.9 238.5L716.3 245.0M719.3 237.7L725.0 237.9M719.3 237.7L716.3 245.0M719.3 237.7L723.4 244.0M725.0 237.9L734.2 237.6M725.0 237.9L723.4 244.0M725.0 237.9L730.7 244.1M734.2 237.6L740.6 237.7M734.2 237.6L730.7 244.1M734.2 237.6L737.2 245.5M740.6 237.7L749.3 238.4M740.6 237.7L737.2 245.5M740.6 237.7L745.7 244.0M749.3 238.4L754.8 237.4M749.3 238.4L745.7 244.0M749.3 238.4L751.5 244.5M754.8 237.4L763.0 238.4M754.8 237.4L751.5 244.5M754.8 237.4L759.6 244.5M763.0 238.4L771.1 237.4M763.0 238.4L759.6 244.5M763.0 238.4L766.0 244.2M771.1 237.4L777.2 238.7M771.1 237.4L766.0 244.2M771.1 237.4L775.0 245.6M777.2 238.7L775.0 245.6M544.8 244.2L551.9 245.7M544.8 244.2L547.5 251.3M551.9 245.7L559.3 244.9M551.9 245.7L556.8 250.1M551.9 245.7L547.5 251.3M559.3 244.9L566.8 244.5M559.3 244.9L564.4 250.3M559.3 244.9L556.8 250.1M566.8 244.5L575.5 245.8M566.8 244.5L571.2 251.2M566.8 244.5L564.4 250.3M575.5 245.8L581.6 244.1M575.5 245.8L578.6 250.7M575.5 245.8L571.2 251.2M581.6 244.1L590.0 244.1M581.6 244.1L585.5 251.3M581.6 244.1L578.6 250.7M590.0 244.1L595.5 245.6M590.0 244.1L592.9 251.5M590.0 244.1L585.5 251.3M595.5 245.6L604.0 245.4M595.5 245.6L600.4 251.0M595.5 245.6L592.9 251.5M604.0 245.4L611.4 245.6M604.0 245.4L606.7 251.4M604.0 245.4L600.4 251.0M611.4 245.6L618.9 244.0M611.4 245.6L615.3 250.5M611.4 245.6L606.7 251.4M618.9 244.0L625.1 244.8M618.9 244.0L623.4 251.7M618.9 244.0L615.3 250.5M625.1 244.8L634.2 245.6M625.1 244.8L630.0 250.4M625.1 244.8L623.4 251.7M634.2 245.6L640.1 245.0M634.2 245.6L637.4 250.3M634.2 245.6L630.0 250.4M640.1 245.0L648.3 244.7M640.1 245.0L643.9 251.0M640.1 245.0L637.4 250.3M648.3 244.7L655.1 244.2M648.3 244.7L651.2 251.0M648.3 244.7L643.9 251.0M655.1 244.2L663.5 245.7M655.1 244.2L659.7 250.1M655.1 244.2L651.2 251.0M663.5 245.7L669.8 244.7M663.5 245.7L667.5 250.2M663.5 245.7L659.7 250.1M669.8 244.7L679.0 245.7M669.8 244.7L675.1 251.7M669.8 244.7L667.5 250.2M679.0 245.7L684.8 243.9M679.0 245.7L681.9 250.1M679.0 245.7L675.1 251.7M684.8 243.9L694.2 245.8M684.8 243.9L689.3 250.9M684.8 243.9L681.9 250.1M694.2 245.8L700.4 243.7M694.2 245.8L697.9 250.3M694.2 245.8L689.3 250.9M700.4 243.7L708.9 244.5M700.4 243.7L705.0 252.2M700.4 243.7L697.9 250.3M708.9 244.5L716.3 245.0M708.9 244.5L712.1 251.8M708.9 244.5L705.0 252.2M716.3 245.0L723.4 244.0M716.3 245.0L718.1 252.2M716.3 245.0L712.1 251.8M723.4 244.0L730.7 244.1M723.4 244.0L726.3 252.1M723.4 244.0L718.1 252.2M730.7 244.1L737.2 245.5M730.7 244.1L734.8 250.4M730.7 244.1L726.3 252.1M737.2 245.5L745.7 244.0M737.2 245.5L741.8 252.1M737.2 245.5L734.8 250.4M745.7 244.0L751.5 244.5M745.7 244.0L747.4 250.8M745.7 244.0L741.8 252.1M751.5 244.5L759.6 244.5M751.5 244.5L756.6 250.4M751.5 244.5L747.4 250.8M759.6 244.5L766.0 244.2M759.6 244.5L764.3 250.6M759.6 244.5L756.6 250.4M766.0 244.2L775.0 245.6M766.0 244.2L771.5 250.3M766.0 244.2L764.3 250.6M775.0 245.6L778.1 252.1M775.0 245.6L771.5 250.3M547.5 251.3L556.8 250.1M547.5 251.3L544.2 257.0M547.5 251.3L552.4 257.1M556.8 250.1L564.4 250.3M556.8 250.1L552.4 257.1M556.8 250.1L558.6 256.8M564.4 250.3L571.2 251.2M564.4 250.3L558.6 256.8M564.4 250.3L566.3 258.5M571.2 251.2L578.6 250.7M571.2 251.2L566.3 258.5M571.2 251.2L575.1 258.4M578.6 250.7L585.5 251.3M578.6 250.7L575.1 258.4M578.6 250.7L581.1 258.2M585.5 251.3L592.9 251.5M585.5 251.3L581.1 258.2M585.5 251.3L588.4 257.6M592.9 251.5L600.4 251.0M592.9 251.5L588.4 257.6M592.9 251.5L597.2 257.2M600.4 251.0L606.7 251.4M600.4 251.0L597.2 257.2M600.4 251.0L605.2 257.7M606.7 251.4L615.3 250.5M606.7 251.4L605.2 257.7M606.7 251.4L611.8 258.4M615.3 250.5L623.4 251.7M615.3 250.5L611.8 258.4M615.3 250.5L618.0 258.6M623.4 251.7L630.0 250.4M623.4 251.7L618.0 258.6M623.4 251.7L626.7 257.3M630.0 250.4L637.4 250.3M630.0 250.4L626.7 257.3M630.0 250.4L634.6 257.0M637.4 250.3L643.9 251.0M637.4 250.3L634.6 257.0M637.4 250.3L642.5 257.7M643.9 251.0L651.2 251.0M643.9 251.0L642.5 257.7M643.9 251.0L648.2 258.1M651.2 251.0L659.7 250.1M651.2 251.0L648.2 258.1M651.2 251.0L655.8 256.8M659.7 250.1L667.5 250.2M659.7 250.1L655.8 256.8M659.7 250.1L664.0 256.5M667.5 250.2L675.1 251.7M667.5 250.2L664.0 256.5M667.5 250.2L671.6 257.0M675.1 251.7L681.9 250.1M675.1 251.7L671.6 257.0M675.1 251.7L678.6 258.6M681.9 250.1L689.3 250.9M681.9 250.1L678.6 258.6M681.9 250.1L685.8 257.9M689.3 250.9L697.9 250.3M689.3 250.9L685.8 257.9M689.3 250.9L692.5 256.4M697.9 250.3L705.0 252.2M697.9 250.3L692.5 256.4M697.9 250.3L699.2 256.8M705.0 252.2L712.1 251.8M705.0 252.2L699.2 256.8M705.0 252.2L708.1 257.4M712.1 251.8L718.1 252.2M712.1 251.8L708.1 257.4M712.1 251.8L715.2 258.4M718.1 252.2L726.3 252.1M718.1 252.2L715.2 258.4M718.1 252.2L721.6 256.9M726.3 252.1L734.8 250.4M726.3 252.1L721.6 256.9M726.3 252.1L730.4 256.5M734.8 250.4L741.8 252.1M734.8 250.4L730.4 256.5M734.8 250.4L736.1 257.2M741.8 252.1L747.4 250.8M741.8 252.1L736.1 257.2M741.8 252.1L743.8 257.2M747.4 250.8L756.6 250.4M747.4 250.8L743.8 257.2M747.4 250.8L751.5 257.7M756.6 250.4L764.3 250.6M756.6 250.4L751.5 257.7M756.6 250.4L759.8 256.9M764.3 250.6L771.5 250.3M764.3 250.6L759.8 256.9M764.3 250.6L767.3 257.5M771.5 250.3L778.1 252.1M771.5 250.3L767.3 257.5M771.5 250.3L773.5 258.5M778.1 252.1L773.5 258.5M544.2 257.0L552.4 257.1M544.2 257.0L548.0 263.2M552.4 257.1L558.6 256.8M552.4 257.1L555.0 264.3M552.4 257.1L548.0 263.2M558.6 256.8L566.3 258.5M558.6 256.8L564.5 264.6M558.6 256.8L555.0 264.3M566.3 258.5L575.1 258.4M566.3 258.5L570.6 263.4M566.3 258.5L564.5 264.6M575.1 258.4L581.1 258.2M575.1 258.4L577.0 264.3M575.1 258.4L570.6 263.4M581.1 258.2L588.4 257.6M581.1 258.2L585.9 263.6M581.1 258.2L577.0 264.3M588.4 257.6L597.2 257.2M588.4 257.6L593.5 263.8M588.4 257.6L585.9 263.6M597.2 257.2L605.2 257.7M597.2 257.2L601.6 264.5M597.2 257.2L593.5 263.8M605.2 257.7L611.8 258.4M605.2 257.7L607.2 264.8M605.2 257.7L601.6 264.5M611.8 258.4L618.0 258.6M611.8 258.4L614.1 264.0M611.8 258.4L607.2 264.8M618.0 258.6L626.7 257.3M618.0 258.6L622.5 263.4M618.0 258.6L614.1 264.0M626.7 257.3L634.6 257.0M626.7 257.3L629.0 264.6M626.7 257.3L622.5 263.4M634.6 257.0L642.5 257.7M634.6 257.0L636.2 264.1M634.6 257.0L629.0 264.6M642.5 257.7L648.2 258.1M642.5 257.7L646.0 263.2M642.5 257.7L636.2 264.1M648.2 258.1L655.8 256.8M648.2 258.1L651.5 264.2M648.2 258.1L646.0 263.2M655.8 256.8L664.0 256.5M655.8 256.8L659.7 264.3M655.8 256.8L651.5 264.2M664.0 256.5L671.6 257.0M664.0 256.5L667.9 263.2M664.0 256.5L659.7 264.3M671.6 257.0L678.6 258.6M671.6 257.0L674.0 263.5M671.6 257.0L667.9 263.2M678.6 258.6L685.8 257.9M678.6 258.6L680.7 264.8M678.6 258.6L674.0 263.5M685.8 257.9L692.5 256.4M685.8 257.9L690.0 264.4M685.8 257.9L680.7 264.8M692.5 256.4L699.2 256.8M692.5 256.4L695.4 264.7M692.5 256.4L690.0 264.4M699.2 256.8L708.1 257.4M699.2 256.8L704.7 263.9M699.2 256.8L695.4 264.7M708.1 257.4L715.2 258.4M708.1 257.4L712.1 263.8M708.1 257.4L704.7 263.9M715.2 258.4L721.6 256.9M715.2 258.4L718.2 263.1M715.2 258.4L712.1 263.8M721.6 256.9L730.4 256.5M721.6 256.9L725.6 262.9M721.6 256.9L718.2 263.1M730.4 256.5L736.1 257.2M730.4 256.5L733.3 264.5M730.4 256.5L725.6 262.9M736.1 257.2L743.8 257.2M736.1 257.2L741.6 264.7M736.1 257.2L733.3 264.5M743.8 257.2L751.5 257.7M743.8 257.2L749.1 263.4M743.8 257.2L741.6 264.7M751.5 257.7L759.8 256.9M751.5 257.7L756.0 263.8M751.5 257.7L749.1 263.4M759.8 256.9L767.3 257.5M759.8 256.9L764.0 264.0M759.8 256.9L756.0 263.8M767.3 257.5L773.5 258.5M767.3 257.5L770.1 264.3M767.3 257.5L764.0 264.0M773.5 258.5L779.3 263.3M773.5 258.5L770.1 264.3M548.0 263.2L555.0 264.3M548.0 263.2L546.0 269.3M548.0 263.2L551.8 269.8M555.0 264.3L564.5 264.6M555.0 264.3L551.8 269.8M555.0 264.3L560.4 271.3M564.5 264.6L570.6 263.4M564.5 264.6L560.4 271.3M564.5 264.6L567.8 270.0M570.6 263.4L577.0 264.3M570.6 263.4L567.8 270.0M570.6 263.4L575.6 270.0M577.0 264.3L585.9 263.6M577.0 264.3L575.6 270.0M577.0 264.3L581.3 271.3M585.9 263.6L593.5 263.8M585.9 263.6L581.3 271.3M585.9 263.6L589.7 270.8M593.5 263.8L601.6 264.5M593.5 263.8L589.7 270.8M593.5 263.8L597.2 271.4M601.6 264.5L607.2 264.8M601.6 264.5L597.2 271.4M601.6 264.5L604.1 271.1M607.2 264.8L614.1 264.0M607.2 264.8L604.1 271.1M607.2 264.8L612.1 271.1M614.1 264.0L622.5 263.4M614.1 264.0L612.1 271.1M614.1 264.0L618.8 270.8M622.5 263.4L629.0 264.6M622.5 263.4L618.8 270.8M622.5 263.4L626.6 269.9M629.0 264.6L636.2 264.1M629.0 264.6L626.6 269.9M629.0 264.6L633.1 270.6M636.2 264.1L646.0 263.2M636.2 264.1L633.1 270.6M636.2 264.1L640.1 271.3M646.0 263.2L651.5 264.2M646.0 263.2L640.1 271.3M646.0 263.2L647.7 269.3M651.5 264.2L659.7 264.3M651.5 264.2L647.7 269.3M651.5 264.2L655.0 271.3M659.7 264.3L667.9 263.2M659.7 264.3L655.0 271.3M659.7 264.3L663.0 269.6M667.9 263.2L674.0 263.5M667.9 263.2L663.0 269.6M667.9 263.2L669.6 269.3M674.0 263.5L680.7 264.8M674.0 263.5L669.6 269.3M674.0 263.5L678.7 270.6M680.7 264.8L690.0 264.4M680.7 264.8L678.7 270.6M680.7 264.8L686.1 270.9M690.0 264.4L695.4 264.7M690.0 264.4L686.1 270.9M690.0 264.4L691.9 270.6M695.4 264.7L704.7 263.9M695.4 264.7L691.9 270.6M695.4 264.7L700.0 271.1M704.7 263.9L712.1 263.8M704.7 263.9L700.0 271.1M704.7 263.9L708.6 271.2M712.1 263.8L718.2 263.1M712.1 263.8L708.6 271.2M712.1 263.8L714.1 271.2M718.2 263.1L725.6 262.9M718.2 263.1L714.1 271.2M718.2 263.1L723.7 271.3M725.6 262.9L733.3 264.5M725.6 262.9L723.7 271.3M725.6 262.9L729.0 269.7M733.3 264.5L741.6 264.7M733.3 264.5L729.0 269.7M733.3 264.5L736.4 269.3M741.6 264.7L749.1 263.4M741.6 264.7L736.4 269.3M741.6 264.7L745.7 271.0M749.1 263.4L756.0 263.8M749.1 263.4L745.7 271.0M749.1 263.4L752.5 271.1M756.0 263.8L764.0 264.0M756.0 263.8L752.5 271.1M756.0 263.8L759.9 269.9M764.0 264.0L770.1 264.3M764.0 264.0L759.9 269.9M764.0 264.0L766.0 269.5M770.1 264.3L779.3 263.3M770.1 264.3L766.0 269.5M770.1 264.3L775.1 269.7M779.3 263.3L775.1 269.7M546.0 269.3L551.8 269.8M546.0 269.3L548.2 276.6M551.8 269.8L560.4 271.3M551.8 269.8L554.9 276.2M551.8 269.8L548.2 276.6M560.4 271.3L567.8 270.0M560.4 271.3L562.9 277.2M560.4 271.3L554.9 276.2M567.8 270.0L575.6 270.0M567.8 270.0L570.6 276.4M567.8 270.0L562.9 277.2M575.6 270.0L581.3 271.3M575.6 270.0L579.5 276.8M575.6 270.0L570.6 276.4M581.3 271.3L589.7 270.8M581.3 271.3L586.6 277.0M581.3 271.3L579.5 276.8M589.7 270.8L597.2 271.4M589.7 270.8L591.9 276.6M589.7 270.8L586.6 277.0M597.2 271.4L604.1 271.1M597.2 271.4L600.3 277.4M597.2 271.4L591.9 276.6M604.1 271.1L612.1 271.1M604.1 271.1L607.5 277.2M604.1 271.1L600.3 277.4M612.1 271.1L618.8 270.8M612.1 271.1L615.4 276.1M612.1 271.1L607.5 277.2M618.8 270.8L626.6 269.9M618.8 270.8L623.6 275.9M618.8 270.8L615.4 276.1M626.6 269.9L633.1 270.6M626.6 269.9L630.9 276.0M626.6 269.9L623.6 275.9M633.1 270.6L640.1 271.3M633.1 270.6L636.2 276.1M633.1 270.6L630.9 276.0M640.1 271.3L647.7 269.3M640.1 271.3L645.6 277.8M640.1 271.3L636.2 276.1M647.7 269.3L655.0 271.3M647.7 269.3L651.0 276.7M647.7 269.3L645.6 277.8M655.0 271.3L663.0 269.6M655.0 271.3L659.7 277.4M655.0 271.3L651.0 276.7M663.0 269.6L669.6 269.3M663.0 269.6L666.3 276.8M663.0 269.6L659.7 277.4M669.6 269.3L678.7 270.6M669.6 269.3L674.1 277.5M669.6 269.3L666.3 276.8M678.7 270.6L686.1 270.9M678.7 270.6L681.3 277.7M678.7 270.6L674.1 277.5M686.1 270.9L691.9 270.6M686.1 270.9L688.7 276.1M686.1 270.9L681.3 277.7M691.9 270.6L700.0 271.1M691.9 270.6L697.2 276.8M691.9 270.6L688.7 276.1M700.0 271.1L708.6 271.2M700.0 271.1L703.1 277.1M700.0 271.1L697.2 276.8M708.6 271.2L714.1 271.2M708.6 271.2L710.4 277.4M708.6 271.2L703.1 277.1M714.1 271.2L723.7 271.3M714.1 271.2L719.4 277.4M714.1 271.2L710.4 277.4M723.7 271.3L729.0 269.7M723.7 271.3L726.6 276.4M723.7 271.3L719.4 277.4M729.0 269.7L736.4 269.3M729.0 269.7L733.4 276.5M729.0 269.7L726.6 276.4M736.4 269.3L745.7 271.0M736.4 269.3L742.1 275.9M736.4 269.3L733.4 276.5M745.7 271.0L752.5 271.1M745.7 271.0L749.5 275.7M745.7 271.0L742.1 275.9M752.5 271.1L759.9 269.9M752.5 271.1L755.1 276.2M752.5 271.1L749.5 275.7M759.9 269.9L766.0 269.5M759.9 269.9L764.3 276.8M759.9 269.9L755.1 276.2M766.0 269.5L775.1 269.7M766.0 269.5L770.4 277.6M766.0 269.5L764.3 276.8M775.1 269.7L777.4 276.7M775.1 269.7L770.4 277.6M548.2 276.6L554.9 276.2M548.2 276.6L545.1 283.7M548.2 276.6L553.1 283.5M554.9 276.2L562.9 277.2M554.9 276.2L553.1 283.5M554.9 276.2L559.4 282.8M562.9 277.2L570.6 276.4M562.9 277.2L559.4 282.8M562.9 277.2L566.3 283.9M570.6 276.4L579.5 276.8M570.6 276.4L566.3 283.9M570.6 276.4L575.0 283.7M579.5 276.8L586.6 277.0M579.5 276.8L575.0 283.7M579.5 276.8L581.1 283.0M586.6 277.0L591.9 276.6M586.6 277.0L581.1 283.0M586.6 277.0L590.1 283.3M591.9 276.6L600.3 277.4M591.9 276.6L590.1 283.3M591.9 276.6L595.8 283.1M600.3 277.4L607.5 277.2M600.3 277.4L595.8 283.1M600.3 277.4L605.2 282.6M607.5 277.2L615.4 276.1M607.5 277.2L605.2 282.6M607.5 277.2L610.8 282.7M615.4 276.1L623.6 275.9M615.4 276.1L610.8 282.7M615.4 276.1L619.5 283.9M623.6 275.9L630.9 276.0M623.6 275.9L619.5 283.9M623.6 275.9L625.5 282.4M630.9 276.0L636.2 276.1M630.9 276.0L625.5 282.4M630.9 276.0L633.1 282.8M636.2 276.1L645.6 277.8M636.2 276.1L633.1 282.8M636.2 276.1L641.3 282.4M645.6 277.8L651.0 276.7M645.6 277.8L641.3 282.4M645.6 277.8L648.2 282.5M651.0 276.7L659.7 277.4M651.0 276.7L648.2 282.5M651.0 276.7L657.2 283.7M659.7 277.4L666.3 276.8M659.7 277.4L657.2 283.7M659.7 277.4L662.4 284.2M666.3 276.8L674.1 277.5M666.3 276.8L662.4 284.2M666.3 276.8L669.8 282.9M674.1 277.5L681.3 277.7M674.1 277.5L669.8 282.9M674.1 277.5L679.5 283.8M681.3 277.7L688.7 276.1M681.3 277.7L679.5 283.8M681.3 277.7L686.2 283.0M688.7 276.1L697.2 276.8M688.7 276.1L686.2 283.0M688.7 276.1L692.2 283.5M697.2 276.8L703.1 277.1M697.2 276.8L692.2 283.5M697.2 276.8L699.4 282.5M703.1 277.1L710.4 277.4M703.1 277.1L699.4 282.5M703.1 277.1L707.5 282.1M710.4 277.4L719.4 277.4M710.4 277.4L707.5 282.1M710.4 277.4L714.9 283.8M719.4 277.4L726.6 276.4M719.4 277.4L714.9 283.8M719.4 277.4L723.1 283.2M726.6 276.4L733.4 276.5M726.6 276.4L723.1 283.2M726.6 276.4L730.3 283.1M733.4 276.5L742.1 275.9M733.4 276.5L730.3 283.1M733.4 276.5L736.5 283.4M742.1 275.9L749.5 275.7M742.1 275.9L736.5 283.4M742.1 275.9L744.6 283.7M749.5 275.7L755.1 276.2M749.5 275.7L744.6 283.7M749.5 275.7L753.3 283.0M755.1 276.2L764.3 276.8M755.1 276.2L753.3 283.0M755.1 276.2L759.8 283.7M764.3 276.8L770.4 277.6M764.3 276.8L759.8 283.7M764.3 276.8L766.8 282.6M770.4 277.6L777.4 276.7M770.4 277.6L766.8 282.6M770.4 277.6L775.0 284.0M777.4 276.7L775.0 284.0M545.1 283.7L553.1 283.5M545.1 283.7L549.4 290.0M553.1 283.5L559.4 282.8M553.1 283.5L557.0 290.0M553.1 283.5L549.4 290.0M559.4 282.8L566.3 283.9M559.4 282.8L563.9 289.5M559.4 282.8L557.0 290.0M566.3 283.9L575.0 283.7M566.3 283.9L570.4 289.9M566.3 283.9L563.9 289.5M575.0 283.7L581.1 283.0M575.0 283.7L577.3 289.4M575.0 283.7L570.4 289.9M581.1 283.0L590.1 283.3M581.1 283.0L586.4 290.0M581.1 283.0L577.3 289.4M590.1 283.3L595.8 283.1M590.1 283.3L593.4 289.0M590.1 283.3L586.4 290.0M595.8 283.1L605.2 282.6M595.8 283.1L600.3 289.5M595.8 283.1L593.4 289.0M605.2 282.6L610.8 282.7M605.2 282.6L608.2 289.4M605.2 282.6L600.3 289.5M610.8 282.7L619.5 283.9M610.8 282.7L615.8 290.5M610.8 282.7L608.2 289.4M619.5 283.9L625.5 282.4M619.5 283.9L621.9 289.9M619.5 283.9L615.8 290.5M625.5 282.4L633.1 282.8M625.5 282.4L630.8 289.3M625.5 282.4L621.9 289.9M633.1 282.8L641.3 282.4M633.1 282.8L637.5 290.6M633.1 282.8L630.8 289.3M641.3 282.4L648.2 282.5M641.3 282.4L643.7 289.7M641.3 282.4L637.5 290.6M648.2 282.5L657.2 283.7M648.2 282.5L651.4 290.2M648.2 282.5L643.7 289.7M657.2 283.7L662.4 284.2M657.2 283.7L660.8 289.6M657.2 283.7L651.4 290.2M662.4 284.2L669.8 282.9M662.4 284.2L666.1 289.7M662.4 284.2L660.8 289.6M669.8 282.9L679.5 283.8M669.8 282.9L674.6 290.1M669.8 282.9L666.1 289.7M679.5 283.8L686.2 283.0M679.5 283.8L681.9 289.9M679.5 283.8L674.6 290.1M686.2 283.0L692.2 283.5M686.2 283.0L690.2 289.6M686.2 283.0L681.9 289.9M692.2 283.5L699.4 282.5M692.2 283.5L696.5 290.6M692.2 283.5L690.2 289.6M699.4 282.5L707.5 282.1M699.4 282.5L703.3 290.0M699.4 282.5L696.5 290.6M707.5 282.1L714.9 283.8M707.5 282.1L711.2 290.2M707.5 282.1L703.3 290.0M714.9 283.8L723.1 283.2M714.9 283.8L717.9 290.6M714.9 283.8L711.2 290.2M723.1 283.2L730.3 283.1M723.1 283.2L725.9 288.6M723.1 283.2L717.9 290.6M730.3 283.1L736.5 283.4M730.3 283.1L733.1 289.4M730.3 283.1L725.9 288.6M736.5 283.4L744.6 283.7M736.5 283.4L739.8 289.4M736.5 283.4L733.1 289.4M744.6 283.7L753.3 283.0M744.6 283.7L748.3 290.0M744.6 283.7L739.8 289.4M753.3 283.0L759.8 283.7M753.3 283.0L755.5 289.1M753.3 283.0L748.3 290.0M759.8 283.7L766.8 282.6M759.8 283.7L762.6 290.1M759.8 283.7L755.5 289.1M766.8 282.6L775.0 284.0M766.8 282.6L771.8 289.6M766.8 282.6L762.6 290.1M775.0 284.0L777.4 290.2M775.0 284.0L771.8 289.6M549.4 290.0L557.0 290.0M549.4 290.0L544.7 295.4M549.4 290.0L551.4 296.6M557.0 290.0L563.9 289.5M557.0 290.0L551.4 296.6M557.0 290.0L560.6 296.3M563.9 289.5L570.4 289.9M563.9 289.5L560.6 296.3M563.9 289.5L567.1 296.1M570.4 289.9L577.3 289.4M570.4 289.9L567.1 296.1M570.4 289.9L573.9 297.0M577.3 289.4L586.4 290.0M577.3 289.4L573.9 297.0M577.3 289.4L581.6 296.3M586.4 290.0L593.4 289.0M586.4 290.0L581.6 296.3M586.4 290.0L590.2 296.7M593.4 289.0L600.3 289.5M593.4 289.0L590.2 296.7M593.4 289.0L596.7 295.5M600.3 289.5L608.2 289.4M600.3 289.5L596.7 295.5M600.3 289.5L604.3 295.2M608.2 289.4L615.8 290.5M608.2 289.4L604.3 295.2M608.2 289.4L612.5 295.7M615.8 290.5L621.9 289.9M615.8 290.5L612.5 295.7M615.8 290.5L619.9 295.5M621.9 289.9L630.8 289.3M621.9 289.9L619.9 295.5M621.9 289.9L626.1 295.4M630.8 289.3L637.5 290.6M630.8 289.3L626.1 295.4M630.8 289.3L633.6 295.3M637.5 290.6L643.7 289.7M637.5 290.6L633.6 295.3M637.5 290.6L639.9 296.5M643.7 289.7L651.4 290.2M643.7 289.7L639.9 296.5M643.7 289.7L648.0 295.4M651.4 290.2L660.8 289.6M651.4 290.2L648.0 295.4M651.4 290.2L655.5 295.9M660.8 289.6L666.1 289.7M660.8 289.6L655.5 295.9M660.8 289.6L663.2 296.3M666.1 289.7L674.6 290.1M666.1 289.7L663.2 296.3M666.1 289.7L671.2 295.7M674.6 290.1L681.9 289.9M674.6 290.1L671.2 295.7M674.6 290.1L679.3 296.8M681.9 289.9L690.2 289.6M681.9 289.9L679.3 296.8M681.9 289.9L684.4 296.7M690.2 289.6L696.5 290.6M690.2 289.6L684.4 296.7M690.2 289.6L694.1 296.6M696.5 290.6L703.3 290.0M696.5 290.6L694.1 296.6M696.5 290.6L699.5 296.7M703.3 290.0L711.2 290.2M703.3 290.0L699.5 296.7M703.3 290.0L708.1 294.9M711.2 290.2L717.9 290.6M711.2 290.2L708.1 294.9M711.2 290.2L713.9 297.0M717.9 290.6L725.9 288.6M717.9 290.6L713.9 297.0M717.9 290.6L723.0 295.4M725.9 288.6L733.1 289.4M725.9 288.6L723.0 295.4M725.9 288.6L729.0 295.2M733.1 289.4L739.8 289.4M733.1 289.4L729.0 295.2M733.1 289.4L736.7 296.6M739.8 289.4L748.3 290.0M739.8 289.4L736.7 296.6M739.8 289.4L744.4 295.2M748.3 290.0L755.5 289.1M748.3 290.0L744.4 295.2M748.3 290.0L753.3 296.6M755.5 289.1L762.6 290.1M755.5 289.1L753.3 296.6M755.5 289.1L758.7 296.8M762.6 290.1L771.8 289.6M762.6 290.1L758.7 296.8M762.6 290.1L767.3 296.6M771.8 289.6L777.4 290.2M771.8 289.6L767.3 296.6M771.8 289.6L774.8 296.9M777.4 290.2L774.8 296.9M544.7 295.4L551.4 296.6M544.7 295.4L549.4 303.1M551.4 296.6L560.6 296.3M551.4 296.6L555.3 302.8M551.4 296.6L549.4 303.1M560.6 296.3L567.1 296.1M560.6 296.3L563.6 302.9M560.6 296.3L555.3 302.8M567.1 296.1L573.9 297.0M567.1 296.1L570.7 303.2M567.1 296.1L563.6 302.9M573.9 297.0L581.6 296.3M573.9 297.0L578.4 301.9M573.9 297.0L570.7 303.2M581.6 296.3L590.2 296.7M581.6 296.3L585.0 301.6M581.6 296.3L578.4 301.9M590.2 296.7L596.7 295.5M590.2 296.7L593.1 301.4M590.2 296.7L585.0 301.6M596.7 295.5L604.3 295.2M596.7 295.5L600.4 301.6M596.7 295.5L593.1 301.4M604.3 295.2L612.5 295.7M604.3 295.2L607.9 302.4M604.3 295.2L600.4 301.6M612.5 295.7L619.9 295.5M612.5 295.7L615.4 303.2M612.5 295.7L607.9 302.4M619.9 295.5L626.1 295.4M619.9 295.5L621.4 303.1M619.9 295.5L615.4 303.2M626.1 295.4L633.6 295.3M626.1 295.4L630.0 302.5M626.1 295.4L621.4 303.1M633.6 295.3L639.9 296.5M633.6 295.3L637.9 303.1M633.6 295.3L630.0 302.5M639.9 296.5L648.0 295.4M639.9 296.5L644.6 302.2M639.9 296.5L637.9 303.1M648.0 295.4L655.5 295.9M648.0 295.4L653.5 301.5M648.0 295.4L644.6 302.2M655.5 295.9L663.2 296.3M655.5 295.9L660.1 302.7M655.5 295.9L653.5 301.5M663.2 296.3L671.2 295.7M663.2 296.3L665.9 302.6M663.2 296.3L660.1 302.7M671.2 295.7L679.3 296.8M671.2 295.7L675.0 303.3M671.2 295.7L665.9 302.6M679.3 296.8L684.4 296.7M679.3 296.8L681.5 303.5M679.3 296.8L675.0 303.3M684.4 296.7L694.1 296.6M684.4 296.7L689.3 302.4M684.4 296.7L681.5 303.5M694.1 296.6L699.5 296.7M694.1 296.6L697.7 301.4M694.1 296.6L689.3 302.4M699.5 296.7L708.1 294.9M699.5 296.7L704.7 302.7M699.5 296.7L697.7 301.4M708.1 294.9L713.9 297.0M708.1 294.9L711.1 303.2M708.1 294.9L704.7 302.7M713.9 297.0L723.0 295.4M713.9 297.0L718.6 302.3M713.9 297.0L711.1 303.2M723.0 295.4L729.0 295.2M723.0 295.4L726.4 303.0M723.0 295.4L718.6 302.3M729.0 295.2L736.7 296.6M729.0 295.2L732.9 302.3M729.0 295.2L726.4 303.0M736.7 296.6L744.4 295.2M736.7 296.6L740.9 302.5M736.7 296.6L732.9 302.3M744.4 295.2L753.3 296.6M744.4 295.2L749.3 301.9M744.4 295.2L740.9 302.5M753.3 296.6L758.7 296.8M753.3 296.6L756.8 302.2M753.3 296.6L749.3 301.9M758.7 296.8L767.3 296.6M758.7 296.8L763.3 301.9M758.7 296.8L756.8 302.2M767.3 296.6L774.8 296.9M767.3 296.6L770.7 303.4M767.3 296.6L763.3 301.9M774.8 296.9L778.5 303.0M774.8 296.9L770.7 303.4M549.4 303.1L555.3 302.8M549.4 303.1L544.6 308.4M549.4 303.1L551.9 309.0M555.3 302.8L563.6 302.9M555.3 302.8L551.9 309.0M555.3 302.8L560.2 309.4M563.6 302.9L570.7 303.2M563.6 302.9L560.2 309.4M563.6 302.9L566.0 309.3M570.7 303.2L578.4 301.9M570.7 303.2L566.0 309.3M570.7 303.2L575.6 308.9M578.4 301.9L585.0 301.6M578.4 301.9L575.6 308.9M578.4 301.9L580.8 308.4M585.0 301.6L593.1 301.4M585.0 301.6L580.8 308.4M585.0 301.6L588.1 308.1M593.1 301.4L600.4 301.6M593.1 301.4L588.1 308.1M593.1 301.4L597.9 309.0M600.4 301.6L607.9 302.4M600.4 301.6L597.9 309.0M600.4 301.6L604.6 309.4M607.9 302.4L615.4 303.2M607.9 302.4L604.6 309.4M607.9 302.4L612.7 309.1M615.4 303.2L621.4 303.1M615.4 303.2L612.7 309.1M615.4 303.2L619.3 309.1M621.4 303.1L630.0 302.5M621.4 303.1L619.3 309.1M621.4 303.1L626.9 309.0M630.0 302.5L637.9 303.1M630.0 302.5L626.9 309.0M630.0 302.5L634.3 308.2M637.9 303.1L644.6 302.2M637.9 303.1L634.3 308.2M637.9 303.1L641.6 308.7M644.6 302.2L653.5 301.5M644.6 302.2L641.6 308.7M644.6 302.2L649.3 307.9M653.5 301.5L660.1 302.7M653.5 301.5L649.3 307.9M653.5 301.5L655.2 307.8M660.1 302.7L665.9 302.6M660.1 302.7L655.2 307.8M660.1 302.7L664.1 309.7M665.9 302.6L675.0 303.3M665.9 302.6L664.1 309.7M665.9 302.6L671.2 308.5M675.0 303.3L681.5 303.5M675.0 303.3L671.2 308.5M675.0 303.3L679.0 309.4M681.5 303.5L689.3 302.4M681.5 303.5L679.0 309.4M681.5 303.5L685.8 308.3M689.3 302.4L697.7 301.4M689.3 302.4L685.8 308.3M689.3 302.4L692.5 308.6M697.7 301.4L704.7 302.7M697.7 301.4L692.5 308.6M697.7 301.4L699.9 308.7M704.7 302.7L711.1 303.2M704.7 302.7L699.9 308.7M704.7 302.7L708.2 309.8M711.1 303.2L718.6 302.3M711.1 303.2L708.2 309.8M711.1 303.2L714.0 309.0M718.6 302.3L726.4 303.0M718.6 302.3L714.0 309.0M718.6 302.3L721.4 308.0M726.4 303.0L732.9 302.3M726.4 303.0L721.4 308.0M726.4 303.0L730.8 309.0M732.9 302.3L740.9 302.5M732.9 302.3L730.8 309.0M732.9 302.3L738.5 308.7M740.9 302.5L749.3 301.9M740.9 302.5L738.5 308.7M740.9 302.5L743.5 308.6M749.3 301.9L756.8 302.2M749.3 301.9L743.5 308.6M749.3 301.9L752.4 309.8M756.8 302.2L763.3 301.9M756.8 302.2L752.4 309.8M756.8 302.2L760.9 308.8M763.3 301.9L770.7 303.4M763.3 301.9L760.9 308.8M763.3 301.9L766.8 307.9M770.7 303.4L778.5 303.0M770.7 303.4L766.8 307.9M770.7 303.4L774.8 308.2M778.5 303.0L774.8 308.2M544.6 308.4L551.9 309.0M544.6 308.4L547.8 314.1M551.9 309.0L560.2 309.4M551.9 309.0L554.8 315.6M551.9 309.0L547.8 314.1M560.2 309.4L566.0 309.3M560.2 309.4L562.5 316.2M560.2 309.4L554.8 315.6M566.0 309.3L575.6 308.9M566.0 309.3L569.8 316.0M566.0 309.3L562.5 316.2M575.6 308.9L580.8 308.4M575.6 308.9L577.3 314.2M575.6 308.9L569.8 316.0M580.8 308.4L588.1 308.1M580.8 308.4L586.3 314.6M580.8 308.4L577.3 314.2M588.1 308.1L597.9 309.0M588.1 308.1L593.7 314.5M588.1 308.1L586.3 314.6M597.9 309.0L604.6 309.4M597.9 309.0L599.3 315.8M597.9 309.0L593.7 314.5M604.6 309.4L612.7 309.1M604.6 309.4L608.5 316.0M604.6 309.4L599.3 315.8M612.7 309.1L619.3 309.1M612.7 309.1L615.9 314.3M612.7 309.1L608.5 316.0M619.3 309.1L626.9 309.0M619.3 309.1L623.0 315.7M619.3 309.1L615.9 314.3M626.9 309.0L634.3 308.2M626.9 309.0L630.0 316.2M626.9 309.0L623.0 315.7M634.3 308.2L641.6 308.7M634.3 308.2L636.9 316.2M634.3 308.2L630.0 316.2M641.6 308.7L649.3 307.9M641.6 308.7L645.5 314.1M641.6 308.7L636.9 316.2M649.3 307.9L655.2 307.8M649.3 307.9L651.0 315.5M649.3 307.9L645.5 314.1M655.2 307.8L664.1 309.7M655.2 307.8L660.5 314.3M655.2 307.8L651.0 315.5M664.1 309.7L671.2 308.5M664.1 309.7L666.6 315.7M664.1 309.7L660.5 314.3M671.2 308.5L679.0 309.4M671.2 308.5L673.6 316.0M671.2 308.5L666.6 315.7M679.0 309.4L685.8 308.3M679.0 309.4L681.9 314.2M679.0 309.4L673.6 316.0M685.8 308.3L692.5 308.6M685.8 308.3L689.0 315.4M685.8 308.3L681.9 314.2M692.5 308.6L699.9 308.7M692.5 308.6L696.5 315.6M692.5 308.6L689.0 315.4M699.9 308.7L708.2 309.8M699.9 308.7L703.2 315.9M699.9 308.7L696.5 315.6M708.2 309.8L714.0 309.0M708.2 309.8L711.1 315.5M708.2 309.8L703.2 315.9M714.0 309.0L721.4 308.0M714.0 309.0L719.2 315.0M714.0 309.0L711.1 315.5M721.4 308.0L730.8 309.0M721.4 308.0L726.0 315.8M721.4 308.0L719.2 315.0M730.8 309.0L738.5 308.7M730.8 309.0L734.9 315.8M730.8 309.0L726.0 315.8M738.5 308.7L743.5 308.6M738.5 308.7L741.3 314.8M738.5 308.7L734.9 315.8M743.5 308.6L752.4 309.8M743.5 308.6L747.4 316.3M743.5 308.6L741.3 314.8M752.4 309.8L760.9 308.8M752.4 309.8L756.4 315.9M752.4 309.8L747.4 316.3M760.9 308.8L766.8 307.9M760.9 308.8L762.9 315.4M760.9 308.8L756.4 315.9M766.8 307.9L774.8 308.2M766.8 307.9L771.9 315.9M766.8 307.9L762.9 315.4M774.8 308.2L778.4 314.8M774.8 308.2L771.9 315.9M547.8 314.1L554.8 315.6M547.8 314.1L544.8 322.5M547.8 314.1L552.1 322.0M554.8 315.6L562.5 316.2M554.8 315.6L552.1 322.0M554.8 315.6L560.1 322.5M562.5 316.2L569.8 316.0M562.5 316.2L560.1 322.5M562.5 316.2L568.0 321.1M569.8 316.0L577.3 314.2M569.8 316.0L568.0 321.1M569.8 316.0L573.3 321.1M577.3 314.2L586.3 314.6M577.3 314.2L573.3 321.1M577.3 314.2L581.8 321.8M586.3 314.6L593.7 314.5M586.3 314.6L581.8 321.8M586.3 314.6L590.2 322.5M593.7 314.5L599.3 315.8M593.7 314.5L590.2 322.5M593.7 314.5L595.6 322.4M599.3 315.8L608.5 316.0M599.3 315.8L595.6 322.4M599.3 315.8L605.0 322.4M608.5 316.0L615.9 314.3M608.5 316.0L605.0 322.4M608.5 316.0L611.8 321.1M615.9 314.3L623.0 315.7M615.9 314.3L611.8 321.1M615.9 314.3L619.9 322.3M623.0 315.7L630.0 316.2M623.0 315.7L619.9 322.3M623.0 315.7L626.9 322.5M630.0 316.2L636.9 316.2M630.0 316.2L626.9 322.5M630.0 316.2L633.4 320.7M636.9 316.2L645.5 314.1M636.9 316.2L633.4 320.7M636.9 316.2L641.3 322.3M645.5 314.1L651.0 315.5M645.5 314.1L641.3 322.3M645.5 314.1L647.8 322.2M651.0 315.5L660.5 314.3M651.0 315.5L647.8 322.2M651.0 315.5L657.1 321.0M660.5 314.3L666.6 315.7M660.5 314.3L657.1 321.0M660.5 314.3L663.7 322.0M666.6 315.7L673.6 316.0M666.6 315.7L663.7 322.0M666.6 315.7L670.7 321.0M673.6 316.0L681.9 314.2M673.6 316.0L670.7 321.0M673.6 316.0L677.6 322.2M681.9 314.2L689.0 315.4M681.9 314.2L677.6 322.2M681.9 314.2L686.4 321.5M689.0 315.4L696.5 315.6M689.0 315.4L686.4 321.5M689.0 315.4L691.9 322.3M696.5 315.6L703.2 315.9M696.5 315.6L691.9 322.3M696.5 315.6L701.1 321.0M703.2 315.9L711.1 315.5M703.2 315.9L701.1 321.0M703.2 315.9L708.0 322.5M711.1 315.5L719.2 315.0M711.1 315.5L708.0 322.5M711.1 315.5L716.2 321.7M719.2 315.0L726.0 315.8M719.2 315.0L716.2 321.7M719.2 315.0L722.5 321.8M726.0 315.8L734.9 315.8M726.0 315.8L722.5 321.8M726.0 315.8L729.2 320.9M734.9 315.8L741.3 314.8M734.9 315.8L729.2 320.9M734.9 315.8L736.6 322.1M741.3 314.8L747.4 316.3M741.3 314.8L736.6 322.1M741.3 314.8L744.4 321.8M747.4 316.3L756.4 315.9M747.4 316.3L744.4 321.8M747.4 316.3L751.9 321.7M756.4 315.9L762.9 315.4M756.4 315.9L751.9 321.7M756.4 315.9L758.7 320.6M762.9 315.4L771.9 315.9M762.9 315.4L758.7 320.6M762.9 315.4L768.3 321.3M771.9 315.9L778.4 314.8M771.9 315.9L768.3 321.3M771.9 315.9L773.4 321.9M778.4 314.8L773.4 321.9M544.8 322.5L552.1 322.0M544.8 322.5L549.4 327.3M552.1 322.0L560.1 322.5M552.1 322.0L556.4 327.7M552.1 322.0L549.4 327.3M560.1 322.5L568.0 321.1M560.1 322.5L563.6 327.0M560.1 322.5L556.4 327.7M568.0 321.1L573.3 321.1M568.0 321.1L569.7 329.1M568.0 321.1L563.6 327.0M573.3 321.1L581.8 321.8M573.3 321.1L579.3 328.0M573.3 321.1L569.7 329.1M581.8 321.8L590.2 322.5M581.8 321.8L585.9 327.5M581.8 321.8L579.3 328.0M590.2 322.5L595.6 322.4M590.2 322.5L593.8 327.9M590.2 322.5L585.9 327.5M595.6 322.4L605.0 322.4M595.6 322.4L601.7 328.6M595.6 322.4L593.8 327.9M605.0 322.4L611.8 321.1M605.0 322.4L608.7 329.1M605.0 322.4L601.7 328.6M611.8 321.1L619.9 322.3M611.8 321.1L614.7 327.0M611.8 321.1L608.7 329.1M619.9 322.3L626.9 322.5M619.9 322.3L621.9 327.3M619.9 322.3L614.7 327.0M626.9 322.5L633.4 320.7M626.9 322.5L629.0 327.0M626.9 322.5L621.9 327.3M633.4 320.7L641.3 322.3M633.4 320.7L637.6 328.8M633.4 320.7L629.0 327.0M641.3 322.3L647.8 322.2M641.3 322.3L644.8 329.0M641.3 322.3L637.6 328.8M647.8 322.2L657.1 321.0M647.8 322.2L653.4 327.1M647.8 322.2L644.8 329.0M657.1 321.0L663.7 322.0M657.1 321.0L660.0 327.8M657.1 321.0L653.4 327.1M663.7 322.0L670.7 321.0M663.7 322.0L666.1 329.0M663.7 322.0L660.0 327.8M670.7 321.0L677.6 322.2M670.7 321.0L673.9 328.2M670.7 321.0L666.1 329.0M677.6 322.2L686.4 321.5M677.6 322.2L682.3 329.0M677.6 322.2L673.9 328.2M686.4 321.5L691.9 322.3M686.4 321.5L689.7 327.8M686.4 321.5L682.3 329.0M691.9 322.3L701.1 321.0M691.9 322.3L696.6 327.3M691.9 322.3L689.7 327.8M701.1 321.0L708.0 322.5M701.1 321.0L705.3 329.1M701.1 321.0L696.6 327.3M708.0 322.5L716.2 321.7M708.0 322.5L710.8 327.0M708.0 322.5L705.3 329.1M716.2 321.7L722.5 321.8M716.2 321.7L718.3 327.7M716.2 321.7L710.8 327.0M722.5 321.8L729.2 320.9M722.5 321.8L727.3 328.9M722.5 321.8L718.3 327.7M729.2 320.9L736.6 322.1M729.2 320.9L734.6 327.0M729.2 320.9L727.3 328.9M736.6 322.1L744.4 321.8M736.6 322.1L741.8 328.5M736.6 322.1L734.6 327.0M744.4 321.8L751.9 321.7M744.4 321.8L748.9 329.1M744.4 321.8L741.8 328.5M751.9 321.7L758.7 320.6M751.9 321.7L754.7 327.3M751.9 321.7L748.9 329.1M758.7 320.6L768.3 321.3M758.7 320.6L764.0 329.0M758.7 320.6L754.7 327.3M768.3 321.3L773.4 321.9M768.3 321.3L771.2 327.6M768.3 321.3L764.0 329.0M773.4 321.9L778.3 328.6M773.4 321.9L771.2 327.6M549.4 327.3L556.4 327.7M549.4 327.3L544.0 334.1M549.4 327.3L551.8 333.6M556.4 327.7L563.6 327.0M556.4 327.7L551.8 333.6M556.4 327.7L559.8 333.7M563.6 327.0L569.7 329.1M563.6 327.0L559.8 333.7M563.6 327.0L566.5 333.7M569.7 329.1L579.3 328.0M569.7 329.1L566.5 333.7M569.7 329.1L575.1 333.4M579.3 328.0L585.9 327.5M579.3 328.0L575.1 333.4M579.3 328.0L582.6 333.8M585.9 327.5L593.8 327.9M585.9 327.5L582.6 333.8M585.9 327.5L588.2 335.4M593.8 327.9L601.7 328.6M593.8 327.9L588.2 335.4M593.8 327.9L596.1 335.4M601.7 328.6L608.7 329.1M601.7 328.6L596.1 335.4M601.7 328.6L605.2 335.3M608.7 329.1L614.7 327.0M608.7 329.1L605.2 335.3M608.7 329.1L610.7 334.3M614.7 327.0L621.9 327.3M614.7 327.0L610.7 334.3M614.7 327.0L618.0 335.4M621.9 327.3L629.0 327.0M621.9 327.3L618.0 335.4M621.9 327.3L627.3 334.7M629.0 327.0L637.6 328.8M629.0 327.0L627.3 334.7M629.0 327.0L633.7 334.1M637.6 328.8L644.8 329.0M637.6 328.8L633.7 334.1M637.6 328.8L642.0 334.4M644.8 329.0L653.4 327.1M644.8 329.0L642.0 334.4M644.8 329.0L648.9 333.7M653.4 327.1L660.0 327.8M653.4 327.1L648.9 333.7M653.4 327.1L655.3 333.5M660.0 327.8L666.1 329.0M660.0 327.8L655.3 333.5M660.0 327.8L664.0 334.6M666.1 329.0L673.9 328.2M666.1 329.0L664.0 334.6M666.1 329.0L669.9 335.3M673.9 328.2L682.3 329.0M673.9 328.2L669.9 335.3M673.9 328.2L677.6 334.2M682.3 329.0L689.7 327.8M682.3 329.0L677.6 334.2M682.3 329.0L684.7 333.9M689.7 327.8L696.6 327.3M689.7 327.8L684.7 333.9M689.7 327.8L693.9 334.1M696.6 327.3L705.3 329.1M696.6 327.3L693.9 334.1M696.6 327.3L699.5 334.4M705.3 329.1L710.8 327.0M705.3 329.1L699.5 334.4M705.3 329.1L707.3 335.3M710.8 327.0L718.3 327.7M710.8 327.0L707.3 335.3M710.8 327.0L714.2 335.5M718.3 327.7L727.3 328.9M718.3 327.7L714.2 335.5M718.3 327.7L721.4 335.3M727.3 328.9L734.6 327.0M727.3 328.9L721.4 335.3M727.3 328.9L730.4 333.8M734.6 327.0L741.8 328.5M734.6 327.0L730.4 333.8M734.6 327.0L737.3 334.0M741.8 328.5L748.9 329.1M741.8 328.5L737.3 334.0M741.8 328.5L744.2 333.8M748.9 329.1L754.7 327.3M748.9 329.1L744.2 333.8M748.9 329.1L751.8 335.5M754.7 327.3L764.0 329.0M754.7 327.3L751.8 335.5M754.7 327.3L760.9 335.4M764.0 329.0L771.2 327.6M764.0 329.0L760.9 335.4M764.0 329.0L766.0 334.0M771.2 327.6L778.3 328.6M771.2 327.6L766.0 334.0M771.2 327.6L775.4 333.5M778.3 328.6L775.4 333.5M544.0 334.1L551.8 333.6M544.0 334.1L549.3 340.4M551.8 333.6L559.8 333.7M551.8 333.6L557.3 339.8M551.8 333.6L549.3 340.4M559.8 333.7L566.5 333.7M559.8 333.7L564.3 340.5M559.8 333.7L557.3 339.8M566.5 333.7L575.1 333.4M566.5 333.7L570.0 339.8M566.5 333.7L564.3 340.5M575.1 333.4L582.6 333.8M575.1 333.4L579.2 340.9M575.1 333.4L570.0 339.8M582.6 333.8L588.2 335.4M582.6 333.8L584.9 340.7M582.6 333.8L579.2 340.9M588.2 335.4L596.1 335.4M588.2 335.4L594.2 340.2M588.2 335.4L584.9 340.7M596.1 335.4L605.2 335.3M596.1 335.4L600.7 340.1M596.1 335.4L594.2 340.2M605.2 335.3L610.7 334.3M605.2 335.3L607.1 341.4M605.2 335.3L600.7 340.1M610.7 334.3L618.0 335.4M610.7 334.3L615.9 340.2M610.7 334.3L607.1 341.4M618.0 335.4L627.3 334.7M618.0 335.4L621.6 339.9M618.0 335.4L615.9 340.2M627.3 334.7L633.7 334.1M627.3 334.7L630.4 340.8M627.3 334.7L621.6 339.9M633.7 334.1L642.0 334.4M633.7 334.1L636.9 340.2M633.7 334.1L630.4 340.8M642.0 334.4L648.9 333.7M642.0 334.4L645.2 341.3M642.0 334.4L636.9 340.2M648.9 333.7L655.3 333.5M648.9 333.7L653.1 341.0M648.9 333.7L645.2 341.3M655.3 333.5L664.0 334.6M655.3 333.5L658.9 339.9M655.3 333.5L653.1 341.0M664.0 334.6L669.9 335.3M664.0 334.6L667.7 340.6M664.0 334.6L658.9 339.9M669.9 335.3L677.6 334.2M669.9 335.3L675.1 339.9M669.9 335.3L667.7 340.6M677.6 334.2L684.7 333.9M677.6 334.2L682.7 340.5M677.6 334.2L675.1 339.9M684.7 333.9L693.9 334.1M684.7 333.9L690.2 341.7M684.7 333.9L682.7 340.5M693.9 334.1L699.5 334.4M693.9 334.1L696.7 339.8M693.9 334.1L690.2 341.7M699.5 334.4L707.3 335.3M699.5 334.4L705.2 340.8M699.5 334.4L696.7 339.8M707.3 335.3L714.2 335.5M707.3 335.3L712.5 340.3M707.3 335.3L705.2 340.8M714.2 335.5L721.4 335.3M714.2 335.5L718.1 341.6M714.2 335.5L712.5 340.3M721.4 335.3L730.4 333.8M721.4 335.3L726.0 340.1M721.4 335.3L718.1 341.6M730.4 333.8L737.3 334.0M730.4 333.8L733.4 341.1M730.4 333.8L726.0 340.1M737.3 334.0L744.2 333.8M737.3 334.0L739.8 340.9M737.3 334.0L733.4 341.1M744.2 333.8L751.8 335.5M744.2 333.8L748.4 340.9M744.2 333.8L739.8 340.9M751.8 335.5L760.9 335.4M751.8 335.5L754.9 341.3M751.8 335.5L748.4 340.9M760.9 335.4L766.0 334.0M760.9 335.4L764.1 341.7M760.9 335.4L754.9 341.3M766.0 334.0L775.4 333.5M766.0 334.0L770.2 341.3M766.0 334.0L764.1 341.7M775.4 333.5L777.8 341.4M775.4 333.5L770.2 341.3M549.3 340.4L557.3 339.8M549.3 340.4L543.9 348.1M549.3 340.4L553.6 347.2M557.3 339.8L564.3 340.5M557.3 339.8L553.6 347.2M557.3 339.8L559.8 347.3M564.3 340.5L570.0 339.8M564.3 340.5L559.8 347.3M564.3 340.5L567.3 346.2M570.0 339.8L579.2 340.9M570.0 339.8L567.3 346.2M570.0 339.8L575.8 346.6M579.2 340.9L584.9 340.7M579.2 340.9L575.8 346.6M579.2 340.9L581.2 346.4M584.9 340.7L594.2 340.2M584.9 340.7L581.2 346.4M584.9 340.7L588.8 348.0M594.2 340.2L600.7 340.1M594.2 340.2L588.8 348.0M594.2 340.2L595.6 346.4M600.7 340.1L607.1 341.4M600.7 340.1L595.6 346.4M600.7 340.1L604.7 346.6M607.1 341.4L615.9 340.2M607.1 341.4L604.7 346.6M607.1 341.4L610.3 347.5M615.9 340.2L621.6 339.9M615.9 340.2L610.3 347.5M615.9 340.2L619.2 347.3M621.6 339.9L630.4 340.8M621.6 339.9L619.2 347.3M621.6 339.9L626.9 346.4M630.4 340.8L636.9 340.2M630.4 340.8L626.9 346.4M630.4 340.8L634.8 347.7M636.9 340.2L645.2 341.3M636.9 340.2L634.8 347.7M636.9 340.2L640.0 346.4M645.2 341.3L653.1 341.0M645.2 341.3L640.0 346.4M645.2 341.3L648.6 347.3M653.1 341.0L658.9 339.9M653.1 341.0L648.6 347.3M653.1 341.0L655.4 346.4M658.9 339.9L667.7 340.6M658.9 339.9L655.4 346.4M658.9 339.9L663.2 346.5M667.7 340.6L675.1 339.9M667.7 340.6L663.2 346.5M667.7 340.6L671.0 348.1M675.1 339.9L682.7 340.5M675.1 339.9L671.0 348.1M675.1 339.9L677.3 347.4M682.7 340.5L690.2 341.7M682.7 340.5L677.3 347.4M682.7 340.5L686.2 346.5M690.2 341.7L696.7 339.8M690.2 341.7L686.2 346.5M690.2 341.7L693.8 348.2M696.7 339.8L705.2 340.8M696.7 339.8L693.8 348.2M696.7 339.8L700.1 347.1M705.2 340.8L712.5 340.3M705.2 340.8L700.1 347.1M705.2 340.8L708.7 347.3M712.5 340.3L718.1 341.6M712.5 340.3L708.7 347.3M712.5 340.3L714.9 348.2M718.1 341.6L726.0 340.1M718.1 341.6L714.9 348.2M718.1 341.6L723.3 346.9M726.0 340.1L733.4 341.1M726.0 340.1L723.3 346.9M726.0 340.1L729.3 346.9M733.4 341.1L739.8 340.9M733.4 341.1L729.3 346.9M733.4 341.1L737.2 348.3M739.8 340.9L748.4 340.9M739.8 340.9L737.2 348.3M739.8 340.9L745.6 348.2M748.4 340.9L754.9 341.3M748.4 340.9L745.6 348.2M748.4 340.9L753.0 348.0M754.9 341.3L764.1 341.7M754.9 341.3L753.0 348.0M754.9 341.3L758.4 347.3M764.1 341.7L770.2 341.3M764.1 341.7L758.4 347.3M764.1 341.7L768.2 348.2M770.2 341.3L777.8 341.4M770.2 341.3L768.2 348.2M770.2 341.3L773.7 347.1M777.8 341.4L773.7 347.1M543.9 348.1L553.6 347.2M543.9 348.1L549.0 353.4M553.6 347.2L559.8 347.3M553.6 347.2L556.2 352.7M553.6 347.2L549.0 353.4M559.8 347.3L567.3 346.2M559.8 347.3L563.3 353.7M559.8 347.3L556.2 352.7M567.3 346.2L575.8 346.6M567.3 346.2L569.7 352.9M567.3 346.2L563.3 353.7M575.8 346.6L581.2 346.4M575.8 346.6L579.5 354.3M575.8 346.6L569.7 352.9M581.2 346.4L588.8 348.0M581.2 346.4L586.8 354.0M581.2 346.4L579.5 354.3M588.8 348.0L595.6 346.4M588.8 348.0L593.9 354.5M588.8 348.0L586.8 354.0M595.6 346.4L604.7 346.6M595.6 346.4L601.5 352.6M595.6 346.4L593.9 354.5M604.7 346.6L610.3 347.5M604.7 346.6L608.3 353.2M604.7 346.6L601.5 352.6M610.3 347.5L619.2 347.3M610.3 347.5L615.8 353.2M610.3 347.5L608.3 353.2M619.2 347.3L626.9 346.4M619.2 347.3L622.8 354.6M619.2 347.3L615.8 353.2M626.9 346.4L634.8 347.7M626.9 346.4L630.4 353.1M626.9 346.4L622.8 354.6M634.8 347.7L640.0 346.4M634.8 347.7L637.6 353.5M634.8 347.7L630.4 353.1M640.0 346.4L648.6 347.3M640.0 346.4L646.1 353.2M640.0 346.4L637.6 353.5M648.6 347.3L655.4 346.4M648.6 347.3L651.8 354.0M648.6 347.3L646.1 353.2M655.4 346.4L663.2 346.5M655.4 346.4L658.7 353.9M655.4 346.4L651.8 354.0M663.2 346.5L671.0 348.1M663.2 346.5L668.3 353.7M663.2 346.5L658.7 353.9M671.0 348.1L677.3 347.4M671.0 348.1L673.9 353.6M671.0 348.1L668.3 353.7M677.3 347.4L686.2 346.5M677.3 347.4L682.0 352.9M677.3 347.4L673.9 353.6M686.2 346.5L693.8 348.2M686.2 346.5L688.3 352.9M686.2 346.5L682.0 352.9M693.8 348.2L700.1 347.1M693.8 348.2L696.2 353.5M693.8 348.2L688.3 352.9M700.1 347.1L708.7 347.3M700.1 347.1L703.5 353.1M700.1 347.1L696.2 353.5M708.7 347.3L714.9 348.2M708.7 347.3L710.4 353.8M708.7 347.3L703.5 353.1M714.9 348.2L723.3 346.9M714.9 348.2L719.8 353.9M714.9 348.2L710.4 353.8M723.3 346.9L729.3 346.9M723.3 346.9L726.5 354.0M723.3 346.9L719.8 353.9M729.3 346.9L737.2 348.3M729.3 346.9L732.9 354.1M729.3 346.9L726.5 354.0M737.2 348.3L745.6 348.2M737.2 348.3L741.0 353.8M737.2 348.3L732.9 354.1M745.6 348.2L753.0 348.0M745.6 348.2L748.8 353.6M745.6 348.2L741.0 353.8M753.0 348.0L758.4 347.3M753.0 348.0L755.4 353.1M753.0 348.0L748.8 353.6M758.4 347.3L768.2 348.2M758.4 347.3L762.6 353.7M758.4 347.3L755.4 353.1M768.2 348.2L773.7 347.1M768.2 348.2L770.4 353.9M768.2 348.2L762.6 353.7M773.7 347.1L776.8 353.3M773.7 347.1L770.4 353.9M549.0 353.4L556.2 352.7M549.0 353.4L545.9 359.5M549.0 353.4L552.5 360.1M556.2 352.7L563.3 353.7M556.2 352.7L552.5 360.1M556.2 352.7L559.2 361.1M563.3 353.7L569.7 352.9M563.3 353.7L559.2 361.1M563.3 353.7L566.7 360.7M569.7 352.9L579.5 354.3M569.7 352.9L566.7 360.7M569.7 352.9L573.7 359.1M579.5 354.3L586.8 354.0M579.5 354.3L573.7 359.1M579.5 354.3L583.0 359.9M586.8 354.0L593.9 354.5M586.8 354.0L583.0 359.9M586.8 354.0L588.3 359.8M593.9 354.5L601.5 352.6M593.9 354.5L588.3 359.8M593.9 354.5L596.6 360.6M601.5 352.6L608.3 353.2M601.5 352.6L596.6 360.6M601.5 352.6L603.2 359.5M608.3 353.2L615.8 353.2M608.3 353.2L603.2 359.5M608.3 353.2L612.8 360.6M615.8 353.2L622.8 354.6M615.8 353.2L612.8 360.6M615.8 353.2L618.1 359.7M622.8 354.6L630.4 353.1M622.8 354.6L618.1 359.7M622.8 354.6L626.0 360.5M630.4 353.1L637.6 353.5M630.4 353.1L626.0 360.5M630.4 353.1L634.1 360.8M637.6 353.5L646.1 353.2M637.6 353.5L634.1 360.8M637.6 353.5L642.0 360.1M646.1 353.2L651.8 354.0M646.1 353.2L642.0 360.1M646.1 353.2L649.2 360.6M651.8 354.0L658.7 353.9M651.8 354.0L649.2 360.6M651.8 354.0L656.7 360.0M658.7 353.9L668.3 353.7M658.7 353.9L656.7 360.0M658.7 353.9L664.1 360.5M668.3 353.7L673.9 353.6M668.3 353.7L664.1 360.5M668.3 353.7L671.9 359.3M673.9 353.6L682.0 352.9M673.9 353.6L671.9 359.3M673.9 353.6L679.2 359.0M682.0 352.9L688.3 352.9M682.0 352.9L679.2 359.0M682.0 352.9L686.3 360.3M688.3 352.9L696.2 353.5M688.3 352.9L686.3 360.3M688.3 352.9L693.0 361.1M696.2 353.5L703.5 353.1M696.2 353.5L693.0 361.1M696.2 353.5L700.6 359.9M703.5 353.1L710.4 353.8M703.5 353.1L700.6 359.9M703.5 353.1L708.5 360.9M710.4 353.8L719.8 353.9M710.4 353.8L708.5 360.9M710.4 353.8L715.5 359.8M719.8 353.9L726.5 354.0M719.8 353.9L715.5 359.8M719.8 353.9L722.5 360.0M726.5 354.0L732.9 354.1M726.5 354.0L722.5 360.0M726.5 354.0L730.6 359.6M732.9 354.1L741.0 353.8M732.9 354.1L730.6 359.6M732.9 354.1L737.1 360.2M741.0 353.8L748.8 353.6M741.0 353.8L737.1 360.2M741.0 353.8L744.5 359.7M748.8 353.6L755.4 353.1M748.8 353.6L744.5 359.7M748.8 353.6L752.9 360.8M755.4 353.1L762.6 353.7M755.4 353.1L752.9 360.8M755.4 353.1L759.6 360.0M762.6 353.7L770.4 353.9M762.6 353.7L759.6 360.0M762.6 353.7L766.2 359.6M770.4 353.9L776.8 353.3M770.4 353.9L766.2 359.6M770.4 353.9L773.5 360.2M776.8 353.3L773.5 360.2M545.9 359.5L552.5 360.1M545.9 359.5L548.9 365.6M552.5 360.1L559.2 361.1M552.5 360.1L557.2 366.1M552.5 360.1L548.9 365.6M559.2 361.1L566.7 360.7M559.2 361.1L564.4 367.2M559.2 361.1L557.2 366.1M566.7 360.7L573.7 359.1M566.7 360.7L572.1 365.8M566.7 360.7L564.4 367.2M573.7 359.1L583.0 359.9M573.7 359.1L578.1 367.4M573.7 359.1L572.1 365.8M583.0 359.9L588.3 359.8M583.0 359.9L584.4 365.5M583.0 359.9L578.1 367.4M588.3 359.8L596.6 360.6M588.3 359.8L593.3 366.5M588.3 359.8L584.4 365.5M596.6 360.6L603.2 359.5M596.6 360.6L601.6 367.1M596.6 360.6L593.3 366.5M603.2 359.5L612.8 360.6M603.2 359.5L608.0 367.6M603.2 359.5L601.6 367.1M612.8 360.6L618.1 359.7M612.8 360.6L615.3 366.5M612.8 360.6L608.0 367.6M618.1 359.7L626.0 360.5M618.1 359.7L623.2 366.2M618.1 359.7L615.3 366.5M626.0 360.5L634.1 360.8M626.0 360.5L629.7 366.7M626.0 360.5L623.2 366.2M634.1 360.8L642.0 360.1M634.1 360.8L637.1 367.5M634.1 360.8L629.7 366.7M642.0 360.1L649.2 360.6M642.0 360.1L645.4 366.5M642.0 360.1L637.1 367.5M649.2 360.6L656.7 360.0M649.2 360.6L651.3 366.2M649.2 360.6L645.4 366.5M656.7 360.0L664.1 360.5M656.7 360.0L659.4 366.6M656.7 360.0L651.3 366.2M664.1 360.5L671.9 359.3M664.1 360.5L667.3 367.3M664.1 360.5L659.4 366.6M671.9 359.3L679.2 359.0M671.9 359.3L675.7 366.5M671.9 359.3L667.3 367.3M679.2 359.0L686.3 360.3M679.2 359.0L681.7 366.8M679.2 359.0L675.7 366.5M686.3 360.3L693.0 361.1M686.3 360.3L690.6 366.1M686.3 360.3L681.7 366.8M693.0 361.1L700.6 359.9M693.0 361.1L696.8 367.2M693.0 361.1L690.6 366.1M700.6 359.9L708.5 360.9M700.6 359.9L703.2 366.1M700.6 359.9L696.8 367.2M708.5 360.9L715.5 359.8M708.5 360.9L712.7 367.2M708.5 360.9L703.2 366.1M715.5 359.8L722.5 360.0M715.5 359.8L718.9 365.6M715.5 359.8L712.7 367.2M722.5 360.0L730.6 359.6M722.5 360.0L727.3 366.9M722.5 360.0L718.9 365.6M730.6 359.6L737.1 360.2M730.6 359.6L734.5 367.6M730.6 359.6L727.3 366.9M737.1 360.2L744.5 359.7M737.1 360.2L742.1 366.3M737.1 360.2L734.5 367.6M744.5 359.7L752.9 360.8M744.5 359.7L747.6 366.0M744.5 359.7L742.1 366.3M752.9 360.8L759.6 360.0M752.9 360.8L755.9 366.5M752.9 360.8L747.6 366.0M759.6 360.0L766.2 359.6M759.6 360.0L762.5 365.8M759.6 360.0L755.9 366.5M766.2 359.6L773.5 360.2M766.2 359.6L771.0 366.7M766.2 359.6L762.5 365.8M773.5 360.2L777.7 367.6M773.5 360.2L771.0 366.7M548.9 365.6L557.2 366.1M548.9 365.6L545.4 371.9M548.9 365.6L552.2 373.5M557.2 366.1L564.4 367.2M557.2 366.1L552.2 373.5M557.2 366.1L559.3 373.3M564.4 367.2L572.1 365.8M564.4 367.2L559.3 373.3M564.4 367.2L565.9 372.5M572.1 365.8L578.1 367.4M572.1 365.8L565.9 372.5M572.1 365.8L575.5 373.1M578.1 367.4L584.4 365.5M578.1 367.4L575.5 373.1M578.1 367.4L582.4 372.2M584.4 365.5L593.3 366.5M584.4 365.5L582.4 372.2M584.4 365.5L589.4 373.0M593.3 366.5L601.6 367.1M593.3 366.5L589.4 373.0M593.3 366.5L596.2 373.2M601.6 367.1L608.0 367.6M601.6 367.1L596.2 373.2M601.6 367.1L604.3 374.0M608.0 367.6L615.3 366.5M608.0 367.6L604.3 374.0M608.0 367.6L611.8 372.7M615.3 366.5L623.2 366.2M615.3 366.5L611.8 372.7M615.3 366.5L618.0 372.1M623.2 366.2L629.7 366.7M623.2 366.2L618.0 372.1M623.2 366.2L627.1 372.0M629.7 366.7L637.1 367.5M629.7 366.7L627.1 372.0M629.7 366.7L632.8 372.2M637.1 367.5L645.4 366.5M637.1 367.5L632.8 372.2M637.1 367.5L641.3 373.6M645.4 366.5L651.3 366.2M645.4 366.5L641.3 373.6M645.4 366.5L648.9 373.6M651.3 366.2L659.4 366.6M651.3 366.2L648.9 373.6M651.3 366.2L654.9 371.8M659.4 366.6L667.3 367.3M659.4 366.6L654.9 371.8M659.4 366.6L664.1 372.5M667.3 367.3L675.7 366.5M667.3 367.3L664.1 372.5M667.3 367.3L671.4 372.6M675.7 366.5L681.7 366.8M675.7 366.5L671.4 372.6M675.7 366.5L677.3 372.4M681.7 366.8L690.6 366.1M681.7 366.8L677.3 372.4M681.7 366.8L684.6 373.8M690.6 366.1L696.8 367.2M690.6 366.1L684.6 373.8M690.6 366.1L693.2 372.6M696.8 367.2L703.2 366.1M696.8 367.2L693.2 372.6M696.8 367.2L700.3 372.6M703.2 366.1L712.7 367.2M703.2 366.1L700.3 372.6M703.2 366.1L706.6 373.8M712.7 367.2L718.9 365.6M712.7 367.2L706.6 373.8M712.7 367.2L715.4 373.9M718.9 365.6L727.3 366.9M718.9 365.6L715.4 373.9M718.9 365.6L722.4 373.2M727.3 366.9L734.5 367.6M727.3 366.9L722.4 373.2M727.3 366.9L729.3 371.9M734.5 367.6L742.1 366.3M734.5 367.6L729.3 371.9M734.5 367.6L738.5 373.7M742.1 366.3L747.6 366.0M742.1 366.3L738.5 373.7M742.1 366.3L744.3 373.8M747.6 366.0L755.9 366.5M747.6 366.0L744.3 373.8M747.6 366.0L753.0 372.5M755.9 366.5L762.5 365.8M755.9 366.5L753.0 372.5M755.9 366.5L759.9 373.9M762.5 365.8L771.0 366.7M762.5 365.8L759.9 373.9M762.5 365.8L767.0 373.9M771.0 366.7L777.7 367.6M771.0 366.7L767.0 373.9M771.0 366.7L773.7 372.6M777.7 367.6L773.7 372.6M545.4 371.9L552.2 373.5M545.4 371.9L549.3 378.7M552.2 373.5L559.3 373.3M552.2 373.5L555.6 380.1M552.2 373.5L549.3 378.7M559.3 373.3L565.9 372.5M559.3 373.3L563.5 379.9M559.3 373.3L555.6 380.1M565.9 372.5L575.5 373.1M565.9 372.5L570.2 378.6M565.9 372.5L563.5 379.9M575.5 373.1L582.4 372.2M575.5 373.1L577.9 378.6M575.5 373.1L570.2 378.6M582.4 372.2L589.4 373.0M582.4 372.2L586.9 378.8M582.4 372.2L577.9 378.6M589.4 373.0L596.2 373.2M589.4 373.0L593.3 378.5M589.4 373.0L586.9 378.8M596.2 373.2L604.3 374.0M596.2 373.2L600.6 379.0M596.2 373.2L593.3 378.5M604.3 374.0L611.8 372.7M604.3 374.0L607.6 378.3M604.3 374.0L600.6 379.0M611.8 372.7L618.0 372.1M611.8 372.7L614.3 380.0M611.8 372.7L607.6 378.3M618.0 372.1L627.1 372.0M618.0 372.1L622.3 378.7M618.0 372.1L614.3 380.0M627.1 372.0L632.8 372.2M627.1 372.0L629.3 378.8M627.1 372.0L622.3 378.7M632.8 372.2L641.3 373.6M632.8 372.2L636.8 378.3M632.8 372.2L629.3 378.8M641.3 373.6L648.9 373.6M641.3 373.6L645.3 379.0M641.3 373.6L636.8 378.3M648.9 373.6L654.9 371.8M648.9 373.6L651.4 379.8M648.9 373.6L645.3 379.0M654.9 371.8L664.1 372.5M654.9 371.8L658.6 378.8M654.9 371.8L651.4 379.8M664.1 372.5L671.4 372.6M664.1 372.5L668.0 378.5M664.1 372.5L658.6 378.8M671.4 372.6L677.3 372.4M671.4 372.6L674.4 380.0M671.4 372.6L668.0 378.5M677.3 372.4L684.6 373.8M677.3 372.4L682.7 378.6M677.3 372.4L674.4 380.0M684.6 373.8L693.2 372.6M684.6 373.8L688.9 379.8M684.6 373.8L682.7 378.6M693.2 372.6L700.3 372.6M693.2 372.6L696.4 380.3M693.2 372.6L688.9 379.8M700.3 372.6L706.6 373.8M700.3 372.6L703.3 380.3M700.3 372.6L696.4 380.3M706.6 373.8L715.4 373.9M706.6 373.8L711.5 378.7M706.6 373.8L703.3 380.3M715.4 373.9L722.4 373.2M715.4 373.9L718.8 378.5M715.4 373.9L711.5 378.7M722.4 373.2L729.3 371.9M722.4 373.2L726.8 378.8M722.4 373.2L718.8 378.5M729.3 371.9L738.5 373.7M729.3 371.9L734.7 379.5M729.3 371.9L726.8 378.8M738.5 373.7L744.3 373.8M738.5 373.7L740.8 378.7M738.5 373.7L734.7 379.5M744.3 373.8L753.0 372.5M744.3 373.8L748.8 378.7M744.3 373.8L740.8 378.7M753.0 372.5L759.9 373.9M753.0 372.5L756.9 378.5M753.0 372.5L748.8 378.7M759.9 373.9L767.0 373.9M759.9 373.9L763.3 379.4M759.9 373.9L756.9 378.5M767.0 373.9L773.7 372.6M767.0 373.9L770.1 379.9M767.0 373.9L763.3 379.4M773.7 372.6L777.8 379.6M773.7 372.6L770.1 379.9M549.3 378.7L555.6 380.1M549.3 378.7L545.2 385.3M549.3 378.7L552.1 384.8M555.6 380.1L563.5 379.9M555.6 380.1L552.1 384.8M555.6 380.1L559.0 386.5M563.5 379.9L570.2 378.6M563.5 379.9L559.0 386.5M563.5 379.9L566.7 386.1M570.2 378.6L577.9 378.6M570.2 378.6L566.7 386.1M570.2 378.6L573.6 385.8M577.9 378.6L586.9 378.8M577.9 378.6L573.6 385.8M577.9 378.6L581.6 385.7M586.9 378.8L593.3 378.5M586.9 378.8L581.6 385.7M586.9 378.8L588.9 384.8M593.3 378.5L600.6 379.0M593.3 378.5L588.9 384.8M593.3 378.5L596.3 385.1M600.6 379.0L607.6 378.3M600.6 379.0L596.3 385.1M600.6 379.0L603.2 386.2M607.6 378.3L614.3 380.0M607.6 378.3L603.2 386.2M607.6 378.3L611.0 385.5M614.3 380.0L622.3 378.7M614.3 380.0L611.0 385.5M614.3 380.0L620.1 386.3M622.3 378.7L629.3 378.8M622.3 378.7L620.1 386.3M622.3 378.7L627.4 386.5M629.3 378.8L636.8 378.3M629.3 378.8L627.4 386.5M629.3 378.8L632.8 385.2M636.8 378.3L645.3 379.0M636.8 378.3L632.8 385.2M636.8 378.3L640.0 386.1M645.3 379.0L651.4 379.8M645.3 379.0L640.0 386.1M645.3 379.0L649.0 385.4M651.4 379.8L658.6 378.8M651.4 379.8L649.0 385.4M651.4 379.8L655.8 386.1M658.6 378.8L668.0 378.5M658.6 378.8L655.8 386.1M658.6 378.8L663.9 385.2M668.0 378.5L674.4 380.0M668.0 378.5L663.9 385.2M668.0 378.5L671.7 385.4M674.4 380.0L682.7 378.6M674.4 380.0L671.7 385.4M674.4 380.0L678.5 385.0M682.7 378.6L688.9 379.8M682.7 378.6L678.5 385.0M682.7 378.6L684.6 386.6M688.9 379.8L696.4 380.3M688.9 379.8L684.6 386.6M688.9 379.8L693.6 386.2M696.4 380.3L703.3 380.3M696.4 380.3L693.6 386.2M696.4 380.3L699.2 384.7M703.3 380.3L711.5 378.7M703.3 380.3L699.2 384.7M703.3 380.3L706.9 385.0M711.5 378.7L718.8 378.5M711.5 378.7L706.9 385.0M711.5 378.7L714.7 385.4M718.8 378.5L726.8 378.8M718.8 378.5L714.7 385.4M718.8 378.5L721.4 385.3M726.8 378.8L734.7 379.5M726.8 378.8L721.4 385.3M726.8 378.8L730.4 385.0M734.7 379.5L740.8 378.7M734.7 379.5L730.4 385.0M734.7 379.5L738.3 385.9M740.8 378.7L748.8 378.7M740.8 378.7L738.3 385.9M740.8 378.7L745.4 385.2M748.8 378.7L756.9 378.5M748.8 378.7L745.4 385.2M748.8 378.7L752.0 386.1M756.9 378.5L763.3 379.4M756.9 378.5L752.0 386.1M756.9 378.5L759.2 384.6M763.3 379.4L770.1 379.9M763.3 379.4L759.2 384.6M763.3 379.4L767.9 386.3M770.1 379.9L777.8 379.6M770.1 379.9L767.9 386.3M770.1 379.9L773.8 384.7M777.8 379.6L773.8 384.7M545.2 385.3L552.1 384.8M552.1 384.8L559.0 386.5M559.0 386.5L566.7 386.1M566.7 386.1L573.6 385.8M573.6 385.8L581.6 385.7M581.6 385.7L588.9 384.8M588.9 384.8L596.3 385.1M596.3 385.1L603.2 386.2M603.2 386.2L611.0 385.5M611.0 385.5L620.1 386.3M620.1 386.3L627.4 386.5M627.4 386.5L632.8 385.2M632.8 385.2L640.0 386.1M640.0 386.1L649.0 385.4M649.0 385.4L655.8 386.1M655.8 386.1L663.9 385.2M663.9 385.2L671.7 385.4M671.7 385.4L678.5 385.0M678.5 385.0L684.6 386.6M684.6 386.6L693.6 386.2M693.6 386.2L699.2 384.7M699.2 384.7L706.9 385.0M706.9 385.0L714.7 385.4M714.7 385.4L721.4 385.3M721.4 385.3L730.4 385.0M730.4 385.0L738.3 385.9M738.3 385.9L745.4 385.2M745.4 385.2L752.0 386.1M752.0 386.1L759.2 384.6M759.2 384.6L767.9 386.3M767.9 386.3L773.8 384.7" stroke="#302400" stroke-width="0.62" stroke-opacity="0.8" fill="none"/>
</g>
<path d="M649.4,162.3 L660.6,164.0 L670.1,169.6 L683.0,173.6 L697.0,177.0 L708.3,175.2 L714.4,180.0 L718.0,188.0 L721.0,200.0 L726.0,208.0 L733.0,215.0 L740.0,225.0 L747.0,235.0 L756.0,240.0 L756.0,279.0 L749.8,279.0 L744.6,297.5 L731.0,307.8 L717.2,319.7 L707.0,336.8 L693.4,343.6 L675.0,350.5 L671.0,361.0 L664.0,367.5 L655.0,366.0 L648.0,359.0 L638.0,353.0 L618.0,348.7 L591.0,340.0 L567.0,326.6 L562.4,315.5 L565.2,304.3 L559.6,284.6 L555.7,262.2 L554.0,242.6 L552.3,228.5 L556.8,217.3 L568.0,210.6 L573.7,200.5 L582.0,186.5 L590.5,178.0 L604.5,175.2 L618.5,172.4 L629.8,169.6 L641.0,164.0 Z M587.7,223.0 L596.0,211.7 L610.0,200.5 L627.0,195.0 L636.0,196.0 L634.5,206.0 L621.3,217.3 L601.7,223.0 L590.5,225.7 Z M593.3,270.6 L604.5,259.4 L617.0,254.0 L627.0,257.0 L629.8,272.0 L635.4,287.0 L631.0,302.0 L617.0,311.0 L603.0,306.0 L592.0,290.0 Z M645.5,300.0 L650.0,290.0 L658.0,286.0 L666.0,291.0 L668.5,300.0 L665.0,312.0 L657.0,320.5 L649.0,318.5 L645.0,310.0 Z M669.5,219.3 L678.0,222.0 L686.0,232.0 L690.2,243.7 L690.0,254.0 L687.8,259.5 L682.0,255.0 L675.0,244.0 L670.7,231.5 L668.0,222.0 Z M709.8,232.7 L717.0,244.9 L718.3,260.7 L714.6,276.6 L709.8,263.2 L708.5,248.5 Z" fill="none" stroke="#4a3800" stroke-width="0.7" stroke-opacity="0.85"/>
<path d="M587.7,223.0 L596.0,211.7 L610.0,200.5 L627.0,195.0 L636.0,196.0 L634.5,206.0 L621.3,217.3 L601.7,223.0 L590.5,225.7 Z M593.3,270.6 L604.5,259.4 L617.0,254.0 L627.0,257.0 L629.8,272.0 L635.4,287.0 L631.0,302.0 L617.0,311.0 L603.0,306.0 L592.0,290.0 Z M645.5,300.0 L650.0,290.0 L658.0,286.0 L666.0,291.0 L668.5,300.0 L665.0,312.0 L657.0,320.5 L649.0,318.5 L645.0,310.0 Z M669.5,219.3 L678.0,222.0 L686.0,232.0 L690.2,243.7 L690.0,254.0 L687.8,259.5 L682.0,255.0 L675.0,244.0 L670.7,231.5 L668.0,222.0 Z M709.8,232.7 L717.0,244.9 L718.3,260.7 L714.6,276.6 L709.8,263.2 L708.5,248.5 Z" fill="none" stroke="#c08a10" stroke-width="2" stroke-opacity="0.35"/>
<path d="M645,168 L645,356" stroke="#9a8a50" stroke-width="0.6" fill="none"/>
<g fill="none" stroke="#4a3600" stroke-width="0.9" stroke-opacity="0.55">
<path d="M557,236 Q600,240 650,246 Q665,246 672,262"/>
<path d="M628,262 Q630,280 650,283 Q666,281 667,266"/>
<path d="M585,190 Q615,186 640,196 Q660,205 668,220"/>
<path d="M697,262 Q700,300 690,330"/>
<path d="M575,300 Q590,325 620,330 Q650,334 668,322"/>
</g>
</svg><svg class="a" style="left:0;top:0" width="750" height="62" viewBox="0 0 750 62">
<g fill="none" stroke="#3b7dc1" stroke-width="0.9" stroke-linejoin="round" stroke-linecap="round">
 <path d="M1.8,13.8 V8.6 H4.2 L5,9.5 H7.9 V10.6"/><path d="M1.8,13.8 L3.4,10.8 H9 L7.4,13.8 Z" fill="#3b7dc1" fill-opacity="0.25"/>
 <circle cx="34.6" cy="11.3" r="3.3"/>
 <path d="M66.5,8.9 A3.4,3.4 0 1 0 66.5,13.3" /><path d="M63.5,9.3 V11.3 L64.9,12.6" stroke-width="0.7"/>
 <circle cx="89.6" cy="10.3" r="2.3"/><path d="M91.3,12 L93.8,14.5" stroke-width="1.1"/>
 <path d="M116.5,14.6 L120,11.1" stroke-width="1.5"/><path d="M119.3,10.3 A2.2,2.2 0 0 1 122.2,8.1 L120.9,9.6 L121.6,10.3 L123,8.9 A2.2,2.2 0 0 1 120.9,11.8" stroke-width="0.9" fill="#3b7dc1"/>
</g>
<circle cx="34.6" cy="11.3" r="1.2" fill="#3b7dc1"/>

<rect x="158.8" y="7.8" width="5.6" height="7" rx="1.6" fill="#3b7dc1"/>
<path d="M160.4,8.8 V13.8" stroke="#fff" stroke-width="0.35" opacity="0.6"/>
<!-- tab -->
<g fill="none" stroke="#fff" stroke-width="0.8">
 <path d="M208.3,7.6 H212 L214.2,9.8 V15.2 H208.3 Z"/><path d="M209.6,11 L211,12.8 L212.6,11.5" stroke-width="0.6"/>
 <path d="M331.4,9.5 L336.1,14.2 M336.1,9.5 L331.4,14.2" stroke-width="0.6"/>
</g>
<path d="M668,8.4 V13.8 L663.8,11.1 Z" fill="#3b7dc1"/>
<g fill="none" stroke="#3b7dc1" stroke-width="0.9">
 <ellipse cx="677" cy="10.4" rx="4" ry="3"/><path d="M674.5,12.8 L673.2,14.5 L676.2,13.3"/>
 <path d="M679,14.4 A4,3 0 0 0 683,12 " /><path d="M675.2,10.5 H678.8" stroke-width="0.8"/>
</g>
<rect x="711.6" y="10.3" width="7.6" height="5" rx="0.8" fill="#3b7dc1"/>
<path d="M713.2,10.5 V8.8 A2.2,2.2 0 0 1 717.6,8.8 V10.5" fill="none" stroke="#3b7dc1" stroke-width="1.1"/>
<rect x="714.9" y="12" width="1" height="1.8" fill="#fff"/>

<!-- row1 -->
<g fill="none" stroke="#333" stroke-width="0.85" stroke-linejoin="round" stroke-linecap="round">
 <path d="M10.2,24.8 H13.4 L15.6,27 V32.5 H10.2 Z"/><path d="M13.3,24.9 V27.1 H15.5" stroke-width="0.7"/>
 <path d="M34.2,26.7 L37,30.3 L39.8,26.7"/>
 <circle cx="164.5" cy="29" r="3.4"/>
 <path d="M240.8,31.5 A3.2,3.2 0 1 1 244,31.5" stroke-width="0.95"/>
 <circle cx="357" cy="29" r="3.5"/>
 <circle cx="401.3" cy="27.9" r="2.1" stroke-width="1"/><path d="M402.8,29.4 L404.6,31.2" stroke-width="1.3"/>
 <rect x="440.1" y="25.6" width="8.6" height="6.8" rx="1" stroke-width="1"/>
</g>
<path d="M163.4,27.2 V30.8 L166.3,29 Z" fill="#333"/>
<rect x="199.7" y="26.1" width="6.3" height="5.8" fill="#333"/>
<path d="M242.9,30.6 L245.6,30.2 L244.6,32.8 Z" fill="#333"/>
<g fill="#333">
 <rect x="289.2" y="26.4" width="7.8" height="5" rx="2.5" fill="#555"/><circle cx="291.8" cy="28.9" r="1.45" fill="#fff"/>
 <rect x="318.8" y="26.4" width="7.8" height="5" rx="2.5" fill="#555"/><circle cx="321.4" cy="28.9" r="1.45" fill="#fff"/>
 <circle cx="357" cy="29" r="1.3"/>
 <rect x="440.1" y="25.6" width="8.6" height="1.8"/>
 <path d="M377.6,28.2 L379.2,29.2 L377.6,30.2 Z"/>
 <rect x="379.8" y="26.2" width="4" height="0.8"/><rect x="380.6" y="27.8" width="3.2" height="0.8"/><rect x="380.6" y="29.4" width="3.2" height="0.8"/><rect x="379.8" y="31" width="4" height="0.8"/>
 <path d="M418.8,26.7 H425.5 L425.5,25.3 L427.2,27.1 L425.5,28.9 L425.5,27.6 H418.8 Z"/>
 <path d="M427,30.2 H420.3 L420.3,28.8 L418.6,30.6 L420.3,32.4 L420.3,31.1 H427 Z"/>
</g>
<text x="464.8" y="31.6" font-family="Liberation Serif" font-size="7" fill="#555" text-anchor="middle">A</text>
<text x="484.6" y="32.4" font-family="Liberation Serif" font-size="10.5" fill="#555" text-anchor="middle">A</text>
<g fill="none" stroke="#333" stroke-width="0.85" stroke-linejoin="round">
 <path d="M506.8,25.3 L503.7,28.8 H506.4 L504.8,31.8 L508,28.2 H505.4 Z" fill="#333" fill-opacity="0.4"/>
 <path d="M524.2,25.8 H528 A1.2,1.2 0 0 1 529.2,27 V31.4 A1.2,1.2 0 0 1 528,32.3 H525.2 A1.2,1.2 0 0 1 524,31.2 Z"/><path d="M525,26.2 V31.8" stroke-width="1.2"/>
 <rect x="545.3" y="25.7" width="4.5" height="4.5" rx="0.8"/><rect x="547" y="27.4" width="4.5" height="4.6" rx="0.8" fill="#fff"/>
 <path d="M566.5,25.2 H570.3 L572,26.9 V32.2 H566.5 Z"/><path d="M568.3,30.9 L569.3,28.6 L570.2,30.9" stroke-width="0.6"/>
 <path d="M587.6,27.6 V25.9 H592.4 V27.6"/><path d="M586.8,30.6 H586.3 V27.6 H593.7 V30.6 H593.2"/><rect x="588" y="29.3" width="4" height="3"/>
 <path d="M607.6,25.8 A3,1.4 0 0 0 613,25.8 M607.6,31.8 A3,1.4 0 0 1 613,31.8" stroke-width="0.8"/>
 <path d="M608,27.5 H612.6 M608,30 H612.6" stroke-width="0.6"/>
</g>
<g fill="none" stroke="#f0f8f0" stroke-width="0.8" stroke-linejoin="round">
 <rect x="58.2" y="25.4" width="6.2" height="6.8" rx="0.6"/><path d="M59.8,25.6 V27.6 H62.8 V25.6 M60,32 V29.6 H62.6 V32" stroke-width="0.6"/>
</g>
<g fill="none" stroke="#f2fbfe" stroke-width="0.9" stroke-linecap="round">
 <path d="M104.2,26.5 A3.6,3.6 0 1 0 104.2,31.1"/><path d="M100.9,26.9 V29.2 L102.4,30.6" stroke-width="0.8"/>
</g>

<!-- row2 -->
<g fill="none" stroke="#333" stroke-width="0.85" stroke-linecap="round">
 <circle cx="10.9" cy="49.4" r="3.5"/><path d="M9.6,48.4 A1.3,1.3 0 1 1 11.1,49.6 V50.3"/>
 <path d="M666.8,52.4 L671,48.2" stroke-width="1.2"/><path d="M671.8,46 V47.2 M670.6,46.6 H673 M668.2,46.4 L668.6,47" stroke-width="0.6"/>
</g>
<circle cx="11.1" cy="51.6" r="0.5" fill="#333"/>
</svg></div></body></html>
